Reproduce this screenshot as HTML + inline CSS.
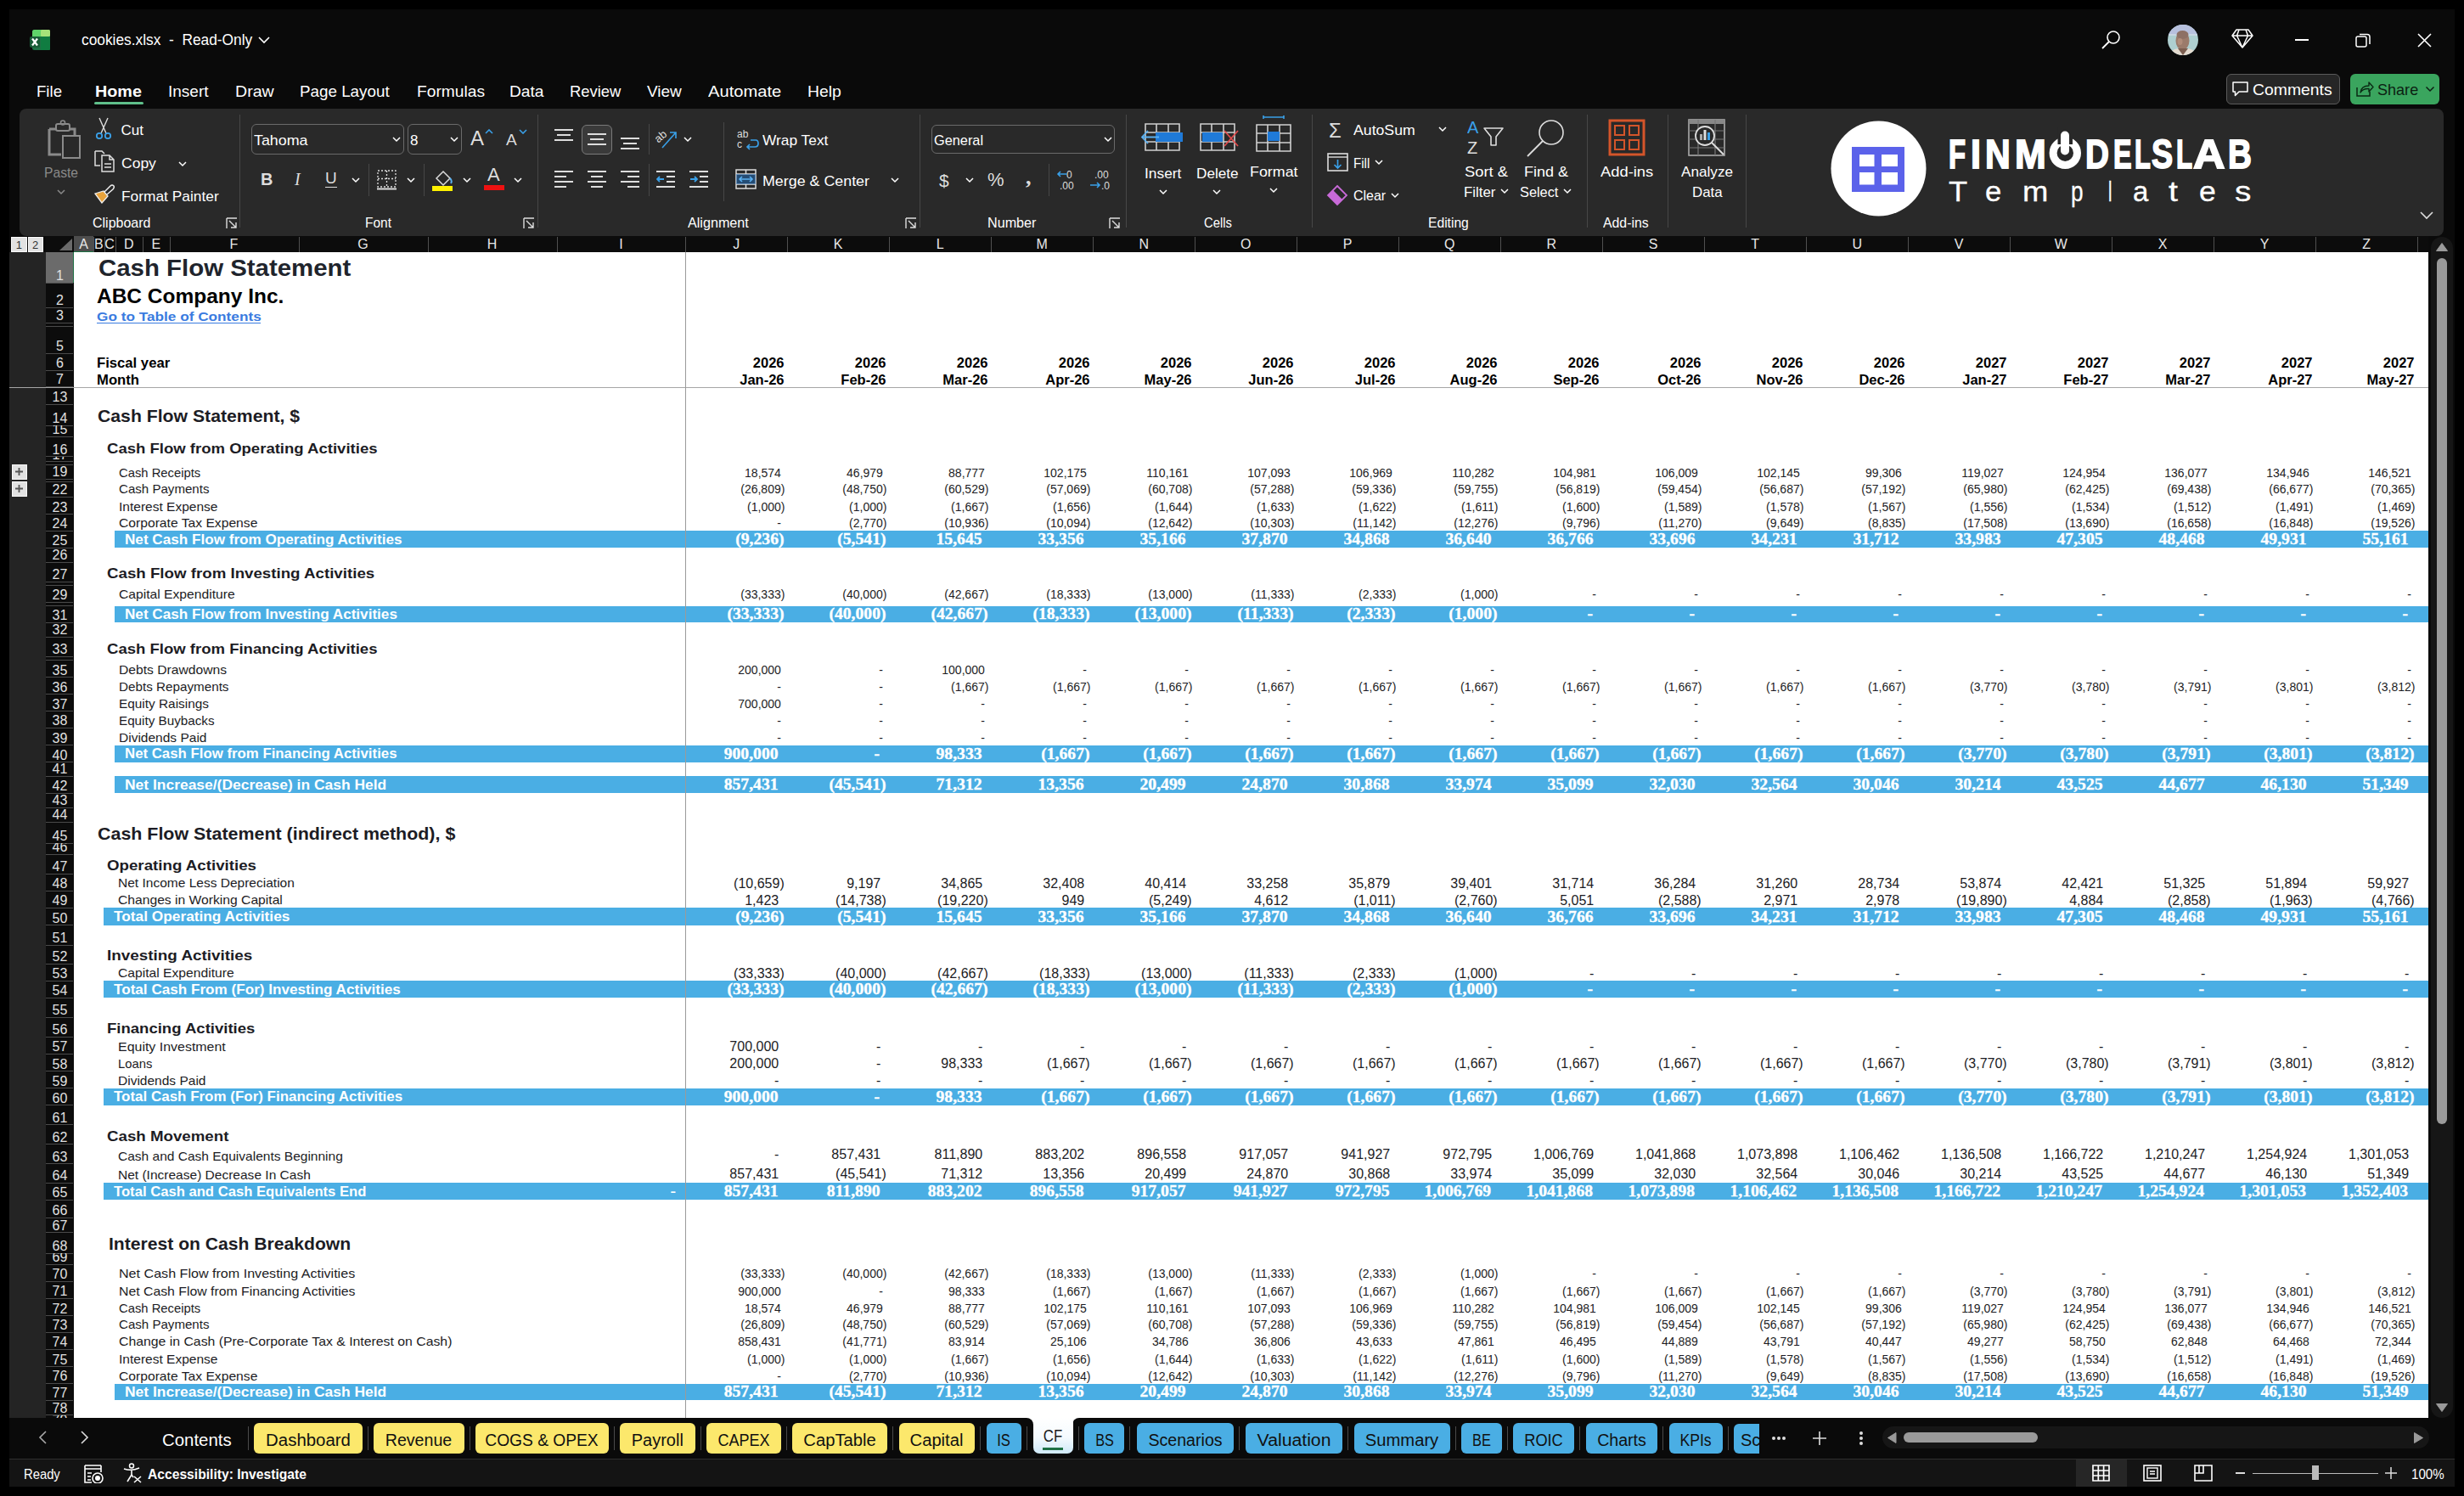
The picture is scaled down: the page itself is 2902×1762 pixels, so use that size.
<!DOCTYPE html>
<html><head><meta charset="utf-8"><title>cookies.xlsx - Excel</title>
<style>
html,body{margin:0;padding:0;}
body{width:2902px;height:1762px;background:#000;position:relative;overflow:hidden;font-family:'Liberation Sans', sans-serif;}
.t{position:absolute;white-space:nowrap;}
.b{position:absolute;}
</style></head><body>
<div class="b" style="left:11px;top:11px;width:2880px;height:1740px;background:#0a0a0a;"></div><svg class="b" style="left:35px;top:35px;" width="24" height="24" viewBox="0 0 24 24">
<rect x="3" y="0" width="21" height="24" rx="2.5" fill="#1e7145"/>
<rect x="3" y="0" width="21" height="8" rx="2.5" fill="#5fd36a"/>
<rect x="13" y="0" width="11" height="8" rx="1.5" fill="#a6e37a"/>
<rect x="3" y="4" width="10" height="4" fill="#5fd36a"/>
<rect x="13" y="8" width="11" height="16" rx="1" fill="#107c41"/>
<rect x="0" y="8" width="12" height="13" rx="2" fill="#185c37"/>
<path d="M3 10.5 L9 18.5 M9 10.5 L3 18.5" stroke="#fff" stroke-width="2.2"/>
</svg><div class="t" style="left:95.5px;top:38.5px;font-size:17.5px;line-height:17.5px;color:#ffffff;transform:scaleX(0.99);transform-origin:0 0;">cookies.xlsx&nbsp;&nbsp;-&nbsp;&nbsp;Read-Only</div><svg class="b" style="left:303px;top:41px;" width="16" height="12" viewBox="0 0 16 12"><path d="M2 3 L8 9 L14 3" stroke="#fff" stroke-width="1.6" fill="none"/></svg><svg class="b" style="left:2474px;top:35px;" width="24" height="25" viewBox="0 0 24 25"><circle cx="15" cy="9" r="7" stroke="#fff" stroke-width="1.6" fill="none"/><path d="M10 14 L2 22" stroke="#fff" stroke-width="1.8"/></svg><svg class="b" style="left:2553px;top:29px;" width="36" height="36" viewBox="0 0 36 36"><defs><clipPath id="av"><circle cx="18" cy="18" r="18"/></clipPath></defs>
<g clip-path="url(#av)"><rect width="36" height="36" fill="#aecfd0"/><rect y="0" width="36" height="12" fill="#b7c0dd"/>
<rect y="11" width="36" height="2" fill="#c9d6e2"/>
<ellipse cx="17.5" cy="19" rx="8" ry="11" fill="#9b7b6b"/><ellipse cx="17.5" cy="12" rx="7" ry="5" fill="#8d7064"/>
<ellipse cx="14.5" cy="20" rx="3" ry="4" fill="#b08c7a"/>
<path d="M2 36 Q4 29 12 28 L18 34 L24 28 Q32 29 34 36 Z" fill="#e4dbd0"/>
<path d="M12 28 L18 36 L24 28 Z" fill="#7c5e50"/></g></svg><svg class="b" style="left:2628px;top:33px;" width="26" height="25" viewBox="0 0 26 25"><path d="M6 2 L20 2 L25 9 L13 23 L1 9 Z M1 9 L25 9 M9 2 L6.5 9 L13 23 L19.5 9 L17 2" stroke="#fff" stroke-width="1.5" fill="none" stroke-linejoin="round"/></svg><div class="b" style="left:2703px;top:46px;width:16px;height:1.5px;background:#ffffff;"></div><svg class="b" style="left:2774px;top:38px;" width="19" height="19" viewBox="0 0 19 19"><rect x="1" y="5" width="12" height="12" rx="2" stroke="#fff" stroke-width="1.5" fill="none"/><path d="M5 2.5 L14 2.5 Q17 2.5 17 5.5 L17 14" stroke="#fff" stroke-width="1.5" fill="none"/></svg><svg class="b" style="left:2846px;top:38px;" width="19" height="19" viewBox="0 0 19 19"><path d="M2 2 L17 17 M17 2 L2 17" stroke="#fff" stroke-width="1.6"/></svg><div class="t" style="left:42.5px;top:98px;font-size:19px;line-height:19px;color:#ffffff;transform:scaleX(0.98);transform-origin:0 0;">File</div><div class="t" style="left:111.5px;top:98px;font-size:19px;line-height:19px;color:#ffffff;font-weight:700;transform:scaleX(1.04);transform-origin:0 0;">Home</div><div class="t" style="left:198px;top:98px;font-size:19px;line-height:19px;color:#ffffff;transform:scaleX(1);transform-origin:0 0;">Insert</div><div class="t" style="left:277px;top:98px;font-size:19px;line-height:19px;color:#ffffff;transform:scaleX(1.03);transform-origin:0 0;">Draw</div><div class="t" style="left:353px;top:98px;font-size:19px;line-height:19px;color:#ffffff;transform:scaleX(0.99);transform-origin:0 0;">Page Layout</div><div class="t" style="left:491px;top:98px;font-size:19px;line-height:19px;color:#ffffff;transform:scaleX(1.01);transform-origin:0 0;">Formulas</div><div class="t" style="left:600px;top:98px;font-size:19px;line-height:19px;color:#ffffff;transform:scaleX(1.01);transform-origin:0 0;">Data</div><div class="t" style="left:671px;top:98px;font-size:19px;line-height:19px;color:#ffffff;transform:scaleX(0.97);transform-origin:0 0;">Review</div><div class="t" style="left:762px;top:98px;font-size:19px;line-height:19px;color:#ffffff;transform:scaleX(1);transform-origin:0 0;">View</div><div class="t" style="left:834px;top:98px;font-size:19px;line-height:19px;color:#ffffff;transform:scaleX(1.06);transform-origin:0 0;">Automate</div><div class="t" style="left:951px;top:98px;font-size:19px;line-height:19px;color:#ffffff;transform:scaleX(1.02);transform-origin:0 0;">Help</div><div class="b" style="left:111px;top:120px;width:58px;height:3px;background:#5fbf8a;border-radius:2px;"></div><div class="b" style="left:2621.5px;top:87px;width:134px;height:35.5px;background:#262626;border:1px solid #5a5a5a;border-radius:6px;box-sizing:border-box;"></div><svg class="b" style="left:2628px;top:95px;" width="22" height="20" viewBox="0 0 22 20"><path d="M2 2 L19 2 L19 13 L9 13 L4.5 17.5 L4.5 13 L2 13 Z" stroke="#fff" stroke-width="1.5" fill="none" stroke-linejoin="round"/></svg><div class="t" style="left:2652.5px;top:96px;font-size:19px;line-height:19px;color:#ffffff;transform:scaleX(1.02);transform-origin:0 0;">Comments</div><div class="b" style="left:2768px;top:87px;width:105px;height:35.5px;background:#3aa55e;border-radius:6px;"></div><svg class="b" style="left:2774px;top:94px;" width="22" height="22" viewBox="0 0 22 22"><path d="M2 9 L2 19 L17 19 L17 14" stroke="#0a2a14" stroke-width="1.5" fill="none"/><path d="M6 15 Q7 7 16 7 L16 3 L21 8.5 L16 14 L16 10.5 Q9 10 6 15 Z" stroke="#0a2a14" stroke-width="1.4" fill="none" stroke-linejoin="round"/></svg><div class="t" style="left:2799.5px;top:96px;font-size:19px;line-height:19px;color:#0c1f12;transform:scaleX(0.95);transform-origin:0 0;">Share</div><svg class="b" style="left:2856px;top:101px;" width="12" height="8" viewBox="0 0 12 8"><path d="M1.5 1.5 L6 6 L10.5 1.5" stroke="#0c1f12" stroke-width="1.5" fill="none"/></svg><div class="b" style="left:22.5px;top:128px;width:2855.5px;height:149.5px;background:#292929;border-radius:8px;"></div><svg class="b" style="left:52px;top:140px;" width="46" height="48" viewBox="0 0 46 48"><path d="M6 12 L6 42 L20 42" stroke="#8a8a8a" stroke-width="3" fill="none"/>
<path d="M6 12 L14 12 M30 12 L36 12 L36 20" stroke="#8a8a8a" stroke-width="3" fill="none"/>
<rect x="14" y="6" width="16" height="8" rx="2" stroke="#8a8a8a" stroke-width="2" fill="none"/>
<circle cx="22" cy="4.5" r="2.5" stroke="#8a8a8a" stroke-width="1.6" fill="none"/>
<rect x="22" y="20" width="20" height="26" stroke="#8a8a8a" stroke-width="2" fill="none"/></svg><div class="t" style="left:52px;top:195px;font-size:17px;line-height:17px;color:#8a8a8a;transform:scaleX(0.92);transform-origin:0 0;">Paste</div><svg class="b" style="left:66px;top:222px;" width="12" height="8" viewBox="0 0 12 8"><path d="M2 2 L6 6 L10 2" stroke="#8a8a8a" stroke-width="1.5" fill="none"/></svg><svg class="b" style="left:110px;top:138px;" width="24" height="28" viewBox="0 0 24 28"><path d="M7 1 L15 19 M17 1 L9 19" stroke="#ddd" stroke-width="1.4"/><circle cx="7" cy="22" r="3.2" stroke="#3aa0e8" stroke-width="1.8" fill="none"/><circle cx="17" cy="22" r="3.2" stroke="#3aa0e8" stroke-width="1.8" fill="none"/></svg><div class="t" style="left:142.5px;top:145px;font-size:17px;line-height:17px;color:#ffffff;transform:scaleX(1);transform-origin:0 0;">Cut</div><svg class="b" style="left:110px;top:177px;" width="26" height="26" viewBox="0 0 26 26"><path d="M2 1 L10 1 L13 4 M2 1 L2 18 L8 18" stroke="#ddd" stroke-width="1.5" fill="none"/><path d="M10 6 L19 6 L24 11 L24 25 L10 25 Z M19 6 L19 11 L24 11 M13 16 L21 16 M13 20 L21 20" stroke="#ddd" stroke-width="1.5" fill="none"/></svg><div class="t" style="left:142.5px;top:184px;font-size:17px;line-height:17px;color:#ffffff;transform:scaleX(1.03);transform-origin:0 0;">Copy</div><svg class="b" style="left:209px;top:189px;" width="12" height="8" viewBox="0 0 12 8"><path d="M2 2 L6 6 L10 2" stroke="#fff" stroke-width="1.5" fill="none"/></svg><svg class="b" style="left:110px;top:216px;" width="26" height="24" viewBox="0 0 26 24"><path d="M2 12 L12 9 L17 15 L10 23 Z" fill="#e8a33c"/><path d="M2 12 L12 9 L17 15 L10 23 Z" stroke="#eee" stroke-width="1.3" fill="none"/><path d="M13 10 L20 3 Q22 1 24 3 Q25 5 23 7 L16 13" stroke="#eee" stroke-width="1.5" fill="none"/></svg><div class="t" style="left:142.5px;top:223px;font-size:17px;line-height:17px;color:#ffffff;transform:scaleX(1.02);transform-origin:0 0;">Format Painter</div><div class="t" style="left:109px;top:253.5px;font-size:17px;line-height:17px;color:#ffffff;transform:scaleX(0.94);transform-origin:0 0;">Clipboard</div><svg class="b" style="left:266px;top:256px;" width="14" height="14" viewBox="0 0 14 14"><path d="M1 1 L13 1 M1 1 L1 13 M4 4 L12 12 M12 6 L12 12 L6 12" stroke="#ddd" stroke-width="1.4" fill="none"/></svg><div class="b" style="left:282px;top:135px;width:1px;height:133px;background:#474747;"></div><div class="b" style="left:295.5px;top:146px;width:180px;height:36px;background:transparent;border:1.5px solid #6a6a6a;border-radius:6px;box-sizing:border-box;"></div><div class="t" style="left:299px;top:157px;font-size:17px;line-height:17px;color:#ffffff;transform:scaleX(1.05);transform-origin:0 0;">Tahoma</div><svg class="b" style="left:461px;top:160px;" width="12" height="8" viewBox="0 0 12 8"><path d="M2 2 L6 6 L10 2" stroke="#fff" stroke-width="1.5" fill="none"/></svg><div class="b" style="left:479.5px;top:146px;width:64.5px;height:36px;background:transparent;border:1.5px solid #6a6a6a;border-radius:6px;box-sizing:border-box;"></div><div class="t" style="left:483px;top:157px;font-size:17px;line-height:17px;color:#ffffff;">8</div><svg class="b" style="left:529px;top:160px;" width="12" height="8" viewBox="0 0 12 8"><path d="M2 2 L6 6 L10 2" stroke="#fff" stroke-width="1.5" fill="none"/></svg><div class="t" style="left:554px;top:151px;font-size:24px;line-height:24px;color:#ddd;">A</div><svg class="b" style="left:571px;top:152px;" width="10" height="6" viewBox="0 0 10 6"><path d="M1 5 L5 1 L9 5" stroke="#3aa0e8" stroke-width="1.6" fill="none"/></svg><div class="t" style="left:596px;top:155px;font-size:19px;line-height:19px;color:#ddd;">A</div><svg class="b" style="left:611px;top:152px;" width="10" height="6" viewBox="0 0 10 6"><path d="M1 1 L5 5 L9 1" stroke="#3aa0e8" stroke-width="1.6" fill="none"/></svg><div class="t" style="left:307px;top:201px;font-size:20px;line-height:20px;color:#ddd;font-weight:700;">B</div><div class="t" style="left:347px;top:201px;font-size:20px;line-height:20px;color:#ddd;font-family:'Liberation Serif', serif;"><i>I</i></div><div class="t" style="left:383px;top:200px;font-size:19px;line-height:19px;color:#ddd;">U</div><div class="b" style="left:383px;top:219.5px;width:14px;height:1.5px;background:#ddd;"></div><svg class="b" style="left:413px;top:208px;" width="12" height="8" viewBox="0 0 12 8"><path d="M2 2 L6 6 L10 2" stroke="#fff" stroke-width="1.5" fill="none"/></svg><div class="b" style="left:434px;top:193px;width:1px;height:38px;background:#474747;"></div><svg class="b" style="left:443px;top:199px;" width="25" height="25" viewBox="0 0 25 25"><path d="M2 2 L23 2 L23 21 L2 21 Z M12.5 2 L12.5 21 M2 11.5 L23 11.5" stroke="#ddd" stroke-width="1.3" stroke-dasharray="2 2" fill="none"/><path d="M1 23.5 L24 23.5" stroke="#ddd" stroke-width="2"/></svg><svg class="b" style="left:478px;top:208px;" width="12" height="8" viewBox="0 0 12 8"><path d="M2 2 L6 6 L10 2" stroke="#fff" stroke-width="1.5" fill="none"/></svg><div class="b" style="left:499px;top:193px;width:1px;height:38px;background:#474747;"></div><svg class="b" style="left:508px;top:199px;" width="26" height="27" viewBox="0 0 26 27"><path d="M6 11 L14 3 L22 11 L14 19 Z" stroke="#ddd" stroke-width="1.5" fill="none"/><path d="M22 11 Q25 14 23 17" stroke="#5ab0f0" stroke-width="2" fill="none"/><rect x="1" y="20" width="24" height="6" fill="#fff200"/></svg><svg class="b" style="left:544px;top:208px;" width="12" height="8" viewBox="0 0 12 8"><path d="M2 2 L6 6 L10 2" stroke="#fff" stroke-width="1.5" fill="none"/></svg><div class="t" style="left:574px;top:195px;font-size:22px;line-height:22px;color:#ddd;">A</div><div class="b" style="left:570px;top:218px;width:24px;height:6px;background:#ee1111;"></div><svg class="b" style="left:604px;top:208px;" width="12" height="8" viewBox="0 0 12 8"><path d="M2 2 L6 6 L10 2" stroke="#fff" stroke-width="1.5" fill="none"/></svg><div class="t" style="left:430px;top:253.5px;font-size:17px;line-height:17px;color:#ffffff;transform:scaleX(0.91);transform-origin:0 0;">Font</div><svg class="b" style="left:616px;top:256px;" width="14" height="14" viewBox="0 0 14 14"><path d="M1 1 L13 1 M1 1 L1 13 M4 4 L12 12 M12 6 L12 12 L6 12" stroke="#ddd" stroke-width="1.4" fill="none"/></svg><div class="b" style="left:633px;top:135px;width:1px;height:133px;background:#474747;"></div><svg class="b" style="left:653px;top:152px;" width="24" height="20" viewBox="0 0 24 20"><rect x="0" y="0" width="22" height="2" fill="#ddd"/><rect x="3" y="6" width="16" height="2" fill="#ddd"/><rect x="0" y="12" width="22" height="2" fill="#ddd"/></svg><div class="b" style="left:685px;top:146.5px;width:36px;height:35px;background:#3a3a3a;border:1.5px solid #7a7a7a;border-radius:6px;box-sizing:border-box;"></div><svg class="b" style="left:692px;top:157px;" width="24" height="20" viewBox="0 0 24 20"><rect x="0" y="0" width="22" height="2" fill="#ddd"/><rect x="3" y="6" width="16" height="2" fill="#ddd"/><rect x="0" y="12" width="22" height="2" fill="#ddd"/></svg><svg class="b" style="left:731px;top:162px;" width="24" height="20" viewBox="0 0 24 20"><rect x="0" y="0" width="22" height="2" fill="#ddd"/><rect x="3" y="6" width="16" height="2" fill="#ddd"/><rect x="0" y="12" width="22" height="2" fill="#ddd"/></svg><div class="b" style="left:763.5px;top:146px;width:1px;height:36px;background:#474747;"></div><svg class="b" style="left:772px;top:150px;" width="28" height="26" viewBox="0 0 28 26"><text x="0" y="14" font-size="13" fill="#ddd" font-family="Liberation Sans" transform="rotate(-40 8 12)">ab</text><path d="M8 24 L24 6 M17 6 L24 6 L24 13" stroke="#3aa0e8" stroke-width="1.6" fill="none"/></svg><svg class="b" style="left:804px;top:160px;" width="12" height="8" viewBox="0 0 12 8"><path d="M2 2 L6 6 L10 2" stroke="#fff" stroke-width="1.5" fill="none"/></svg><svg class="b" style="left:653px;top:201px;" width="24" height="26" viewBox="0 0 24 26"><rect x="0" y="0" width="22" height="2" fill="#ddd"/><rect x="0" y="6" width="14" height="2" fill="#ddd"/><rect x="0" y="12" width="22" height="2" fill="#ddd"/><rect x="0" y="18" width="14" height="2" fill="#ddd"/></svg><svg class="b" style="left:692px;top:201px;" width="24" height="26" viewBox="0 0 24 26"><rect x="0" y="0" width="22" height="2" fill="#ddd"/><rect x="4" y="6" width="14" height="2" fill="#ddd"/><rect x="0" y="12" width="22" height="2" fill="#ddd"/><rect x="4" y="18" width="14" height="2" fill="#ddd"/></svg><svg class="b" style="left:731px;top:201px;" width="24" height="26" viewBox="0 0 24 26"><rect x="0" y="0" width="22" height="2" fill="#ddd"/><rect x="8" y="6" width="14" height="2" fill="#ddd"/><rect x="0" y="12" width="22" height="2" fill="#ddd"/><rect x="8" y="18" width="14" height="2" fill="#ddd"/></svg><div class="b" style="left:763.5px;top:193px;width:1px;height:38px;background:#474747;"></div><svg class="b" style="left:773px;top:201px;" width="24" height="22" viewBox="0 0 24 22"><rect x="0" y="0" width="22" height="2" fill="#ddd"/><rect x="12" y="6" width="10" height="2" fill="#ddd"/><rect x="12" y="12" width="10" height="2" fill="#ddd"/><rect x="0" y="18" width="22" height="2" fill="#ddd"/><path d="M9 10 L1 10 M4 7 L1 10 L4 13" stroke="#3aa0e8" stroke-width="1.8" fill="none"/></svg><svg class="b" style="left:812px;top:201px;" width="24" height="22" viewBox="0 0 24 22"><rect x="0" y="0" width="22" height="2" fill="#ddd"/><rect x="12" y="6" width="10" height="2" fill="#ddd"/><rect x="12" y="12" width="10" height="2" fill="#ddd"/><rect x="0" y="18" width="22" height="2" fill="#ddd"/><path d="M1 10 L9 10 M6 7 L9 10 L6 13" stroke="#3aa0e8" stroke-width="1.8" fill="none"/></svg><div class="b" style="left:851.5px;top:144px;width:1px;height:93px;background:#474747;"></div><svg class="b" style="left:868px;top:151px;" width="26" height="26" viewBox="0 0 26 26"><text x="0" y="11" font-size="12" fill="#ddd" font-family="Liberation Sans">ab</text><text x="0" y="23" font-size="12" fill="#ddd" font-family="Liberation Sans">c</text><path d="M16 14 L22 14 Q25 14 25 18 Q25 22 21 22 L12 22 M15 19 L12 22 L15 25" stroke="#3aa0e8" stroke-width="1.7" fill="none"/></svg><div class="t" style="left:897.5px;top:156.5px;font-size:17px;line-height:17px;color:#ffffff;transform:scaleX(1.02);transform-origin:0 0;">Wrap Text</div><svg class="b" style="left:866px;top:199px;" width="26" height="24" viewBox="0 0 26 24"><rect x="1" y="1" width="23" height="22" stroke="#ddd" stroke-width="1.5" fill="none"/><path d="M1 6 L24 6 M1 18 L24 18 M12.5 1 L12.5 6 M12.5 18 L12.5 23" stroke="#ddd" stroke-width="1.5"/><rect x="1" y="6" width="23" height="12" fill="#1f6fc0" opacity="0.5"/><path d="M5 12 L20 12 M8 9 L5 12 L8 15 M17 9 L20 12 L17 15" stroke="#5ab0f0" stroke-width="1.6" fill="none"/></svg><div class="t" style="left:897.5px;top:204.5px;font-size:17px;line-height:17px;color:#ffffff;transform:scaleX(1.05);transform-origin:0 0;">Merge &amp; Center</div><svg class="b" style="left:1048px;top:208px;" width="12" height="8" viewBox="0 0 12 8"><path d="M2 2 L6 6 L10 2" stroke="#fff" stroke-width="1.5" fill="none"/></svg><div class="t" style="left:810px;top:253.5px;font-size:17px;line-height:17px;color:#ffffff;transform:scaleX(0.95);transform-origin:0 0;">Alignment</div><svg class="b" style="left:1066px;top:256px;" width="14" height="14" viewBox="0 0 14 14"><path d="M1 1 L13 1 M1 1 L1 13 M4 4 L12 12 M12 6 L12 12 L6 12" stroke="#ddd" stroke-width="1.4" fill="none"/></svg><div class="b" style="left:1083px;top:135px;width:1px;height:133px;background:#474747;"></div><div class="b" style="left:1096.5px;top:146.5px;width:216.5px;height:34.5px;background:transparent;border:1.5px solid #6a6a6a;border-radius:6px;box-sizing:border-box;"></div><div class="t" style="left:1100px;top:156.5px;font-size:17px;line-height:17px;color:#ffffff;transform:scaleX(0.96);transform-origin:0 0;">General</div><svg class="b" style="left:1299px;top:160px;" width="12" height="8" viewBox="0 0 12 8"><path d="M2 2 L6 6 L10 2" stroke="#fff" stroke-width="1.5" fill="none"/></svg><div class="t" style="left:1106px;top:202px;font-size:21px;line-height:21px;color:#ddd;">$</div><svg class="b" style="left:1136px;top:208px;" width="12" height="8" viewBox="0 0 12 8"><path d="M2 2 L6 6 L10 2" stroke="#fff" stroke-width="1.5" fill="none"/></svg><div class="t" style="left:1163px;top:201px;font-size:22px;line-height:22px;color:#ddd;">%</div><div class="t" style="left:1208px;top:196px;font-size:26px;line-height:26px;color:#ddd;font-weight:700;font-family:'Liberation Serif', serif;">,</div><div class="b" style="left:1235px;top:193px;width:1px;height:38px;background:#474747;"></div><svg class="b" style="left:1244px;top:199px;" width="26" height="25" viewBox="0 0 26 25"><text x="12" y="11" font-size="12" fill="#ddd" font-family="Liberation Sans">0</text><text x="4" y="24" font-size="12" fill="#ddd" font-family="Liberation Sans">.00</text><path d="M12 6 L2 6 M5 3 L2 6 L5 9" stroke="#3aa0e8" stroke-width="1.6" fill="none"/></svg><svg class="b" style="left:1283px;top:199px;" width="26" height="25" viewBox="0 0 26 25"><text x="6" y="11" font-size="12" fill="#ddd" font-family="Liberation Sans">.00</text><text x="14" y="24" font-size="12" fill="#ddd" font-family="Liberation Sans">.0</text><path d="M1 19 L12 19 M9 16 L12 19 L9 22" stroke="#3aa0e8" stroke-width="1.6" fill="none"/></svg><div class="t" style="left:1163px;top:253.5px;font-size:17px;line-height:17px;color:#ffffff;transform:scaleX(0.95);transform-origin:0 0;">Number</div><svg class="b" style="left:1306px;top:256px;" width="14" height="14" viewBox="0 0 14 14"><path d="M1 1 L13 1 M1 1 L1 13 M4 4 L12 12 M12 6 L12 12 L6 12" stroke="#ddd" stroke-width="1.4" fill="none"/></svg><div class="b" style="left:1325.5px;top:135px;width:1px;height:133px;background:#474747;"></div><svg class="b" style="left:1347px;top:144px;" width="44" height="35" viewBox="0 0 44 35"><path d="M2 2 L42 2 L42 33 L2 33 Z M2 12 L42 12 M2 23 L42 23 M15 2 L15 33 M29 2 L29 33" stroke="#cfcfcf" stroke-width="1.6" fill="none"/></svg><svg class="b" style="left:1343px;top:150px;" width="50" height="24" viewBox="0 0 50 24"><rect x="18" y="6" width="32" height="11" fill="#1f7ad8"/><path d="M2 11.5 L22 11.5 M9 4 L2 11.5 L9 19" stroke="#5ab0f0" stroke-width="1.8" fill="none"/></svg><div class="t" style="left:1348px;top:196px;font-size:17px;line-height:17px;color:#ffffff;transform:scaleX(1.02);transform-origin:0 0;">Insert</div><svg class="b" style="left:1364px;top:222px;" width="12" height="8" viewBox="0 0 12 8"><path d="M2 2 L6 6 L10 2" stroke="#fff" stroke-width="1.5" fill="none"/></svg><svg class="b" style="left:1412px;top:144px;" width="44" height="35" viewBox="0 0 44 35"><path d="M2 2 L42 2 L42 33 L2 33 Z M2 12 L42 12 M2 23 L42 23 M15 2 L15 33 M29 2 L29 33" stroke="#cfcfcf" stroke-width="1.6" fill="none"/></svg><svg class="b" style="left:1412px;top:150px;" width="50" height="26" viewBox="0 0 50 26"><rect x="4" y="6" width="24" height="11" fill="#1f7ad8"/><path d="M30 4 L46 22 M46 4 L30 22" stroke="#e04c4c" stroke-width="1.8"/></svg><div class="t" style="left:1409px;top:196px;font-size:17px;line-height:17px;color:#ffffff;transform:scaleX(1.01);transform-origin:0 0;">Delete</div><svg class="b" style="left:1427px;top:222px;" width="12" height="8" viewBox="0 0 12 8"><path d="M2 2 L6 6 L10 2" stroke="#fff" stroke-width="1.5" fill="none"/></svg><svg class="b" style="left:1478px;top:145px;" width="44" height="35" viewBox="0 0 44 35"><path d="M2 2 L42 2 L42 33 L2 33 Z M2 12 L42 12 M2 23 L42 23 M15 2 L15 33 M29 2 L29 33" stroke="#cfcfcf" stroke-width="1.6" fill="none"/></svg><svg class="b" style="left:1478px;top:136px;" width="44" height="32" viewBox="0 0 44 32"><path d="M10 2 L34 2 M10 0 L10 4 M34 0 L34 4" stroke="#3aa0e8" stroke-width="1.6"/><rect x="15" y="19" width="14" height="11" fill="#1f7ad8"/></svg><div class="t" style="left:1472px;top:194px;font-size:17px;line-height:17px;color:#ffffff;transform:scaleX(1.05);transform-origin:0 0;">Format</div><svg class="b" style="left:1494px;top:220px;" width="12" height="8" viewBox="0 0 12 8"><path d="M2 2 L6 6 L10 2" stroke="#fff" stroke-width="1.5" fill="none"/></svg><div class="t" style="left:1418px;top:254px;font-size:17px;line-height:17px;color:#ffffff;transform:scaleX(0.87);transform-origin:0 0;">Cells</div><div class="b" style="left:1544.5px;top:135px;width:1px;height:133px;background:#474747;"></div><div class="t" style="left:1565px;top:142px;font-size:24px;line-height:24px;color:#ddd;">&#931;</div><div class="t" style="left:1593.5px;top:145px;font-size:17px;line-height:17px;color:#ffffff;transform:scaleX(1.04);transform-origin:0 0;">AutoSum</div><svg class="b" style="left:1693px;top:148px;" width="12" height="8" viewBox="0 0 12 8"><path d="M2 2 L6 6 L10 2" stroke="#fff" stroke-width="1.5" fill="none"/></svg><svg class="b" style="left:1563px;top:180px;" width="25" height="23" viewBox="0 0 25 23"><rect x="1" y="1" width="23" height="20" stroke="#ddd" stroke-width="1.6" fill="none"/><path d="M1 5 L24 5" stroke="#ddd" stroke-width="1.4"/><path d="M12.5 8 L12.5 18 M8.5 14 L12.5 18 L16.5 14" stroke="#3aa0e8" stroke-width="1.7" fill="none"/></svg><div class="t" style="left:1594px;top:183.5px;font-size:17px;line-height:17px;color:#ffffff;transform:scaleX(0.89);transform-origin:0 0;">Fill</div><svg class="b" style="left:1618px;top:187px;" width="12" height="8" viewBox="0 0 12 8"><path d="M2 2 L6 6 L10 2" stroke="#fff" stroke-width="1.5" fill="none"/></svg><svg class="b" style="left:1562px;top:217px;" width="26" height="26" viewBox="0 0 26 26"><path d="M13 2 L24 13 L13 24 L2 13 Z" stroke="#c86ad8" stroke-width="1.8" fill="none"/><path d="M2 13 L8 7 L19 18 L13 24 Z" fill="#c86ad8"/></svg><div class="t" style="left:1594px;top:222px;font-size:17px;line-height:17px;color:#ffffff;transform:scaleX(0.94);transform-origin:0 0;">Clear</div><svg class="b" style="left:1637px;top:226px;" width="12" height="8" viewBox="0 0 12 8"><path d="M2 2 L6 6 L10 2" stroke="#fff" stroke-width="1.5" fill="none"/></svg><svg class="b" style="left:1728px;top:140px;" width="46" height="44" viewBox="0 0 46 44"><text x="0" y="17" font-size="20" fill="#3aa0e8" font-family="Liberation Sans">A</text><text x="0" y="41" font-size="20" fill="#ddd" font-family="Liberation Sans">Z</text><path d="M20 11 L42 11 L34 21 L34 31 L28 31 L28 21 Z" stroke="#ddd" stroke-width="1.6" fill="none" stroke-linejoin="round"/></svg><div class="t" style="left:1725px;top:194px;font-size:17px;line-height:17px;color:#ffffff;transform:scaleX(1.08);transform-origin:0 0;">Sort &amp;</div><div class="t" style="left:1724px;top:217.5px;font-size:17px;line-height:17px;color:#ffffff;transform:scaleX(0.99);transform-origin:0 0;">Filter</div><svg class="b" style="left:1766px;top:221px;" width="12" height="8" viewBox="0 0 12 8"><path d="M2 2 L6 6 L10 2" stroke="#fff" stroke-width="1.5" fill="none"/></svg><svg class="b" style="left:1797px;top:140px;" width="48" height="46" viewBox="0 0 48 46"><circle cx="30" cy="16" r="14" stroke="#ddd" stroke-width="1.6" fill="none"/><path d="M20 26 L2 44" stroke="#ddd" stroke-width="1.8"/></svg><div class="t" style="left:1795px;top:194px;font-size:17px;line-height:17px;color:#ffffff;transform:scaleX(1.06);transform-origin:0 0;">Find &amp;</div><div class="t" style="left:1790px;top:217.5px;font-size:17px;line-height:17px;color:#ffffff;transform:scaleX(0.96);transform-origin:0 0;">Select</div><svg class="b" style="left:1840px;top:221px;" width="12" height="8" viewBox="0 0 12 8"><path d="M2 2 L6 6 L10 2" stroke="#fff" stroke-width="1.5" fill="none"/></svg><div class="t" style="left:1682px;top:254px;font-size:17px;line-height:17px;color:#ffffff;transform:scaleX(0.92);transform-origin:0 0;">Editing</div><div class="b" style="left:1868.5px;top:135px;width:1px;height:133px;background:#474747;"></div><svg class="b" style="left:1894px;top:140px;" width="44" height="44" viewBox="0 0 44 44"><rect x="2" y="2" width="40" height="40" stroke="#d4552a" stroke-width="3" fill="none"/><rect x="8" y="8" width="11" height="11" stroke="#d4552a" stroke-width="2" fill="none"/><rect x="25" y="8" width="11" height="11" stroke="#d4552a" stroke-width="2" fill="none"/><rect x="8" y="25" width="11" height="11" stroke="#d4552a" stroke-width="2" fill="none"/><rect x="25" y="25" width="11" height="11" stroke="#d4552a" stroke-width="2" fill="none"/></svg><div class="t" style="left:1885px;top:194px;font-size:17px;line-height:17px;color:#ffffff;transform:scaleX(1.08);transform-origin:0 0;">Add-ins</div><div class="t" style="left:1888px;top:254px;font-size:17px;line-height:17px;color:#ffffff;transform:scaleX(0.93);transform-origin:0 0;">Add-ins</div><div class="b" style="left:1963.5px;top:135px;width:1px;height:133px;background:#474747;"></div><svg class="b" style="left:1988px;top:140px;" width="44" height="44" viewBox="0 0 44 44"><rect x="1" y="1" width="42" height="42" stroke="#aaa" stroke-width="1.6" fill="none"/><rect x="1" y="1" width="42" height="5" fill="#888"/><path d="M1 14 L43 14 M1 24 L43 24 M1 34 L43 34 M12 1 L12 43 M32 1 L32 43" stroke="#777" stroke-width="1.2"/><circle cx="20" cy="20" r="11" stroke="#ddd" stroke-width="1.8" fill="#292929"/><rect x="14" y="18" width="3" height="7" fill="#aaa"/><rect x="18.5" y="13" width="3" height="12" fill="#ddd"/><rect x="23" y="16" width="3" height="9" fill="#3aa0e8"/><path d="M28 28 L42 42" stroke="#ddd" stroke-width="2"/></svg><div class="t" style="left:1980px;top:194px;font-size:17px;line-height:17px;color:#ffffff;transform:scaleX(1.01);transform-origin:0 0;">Analyze</div><div class="t" style="left:1993px;top:217.5px;font-size:17px;line-height:17px;color:#ffffff;transform:scaleX(0.99);transform-origin:0 0;">Data</div><div class="b" style="left:2056px;top:135px;width:1px;height:133px;background:#474747;"></div><svg class="b" style="left:2156px;top:142px;" width="113" height="113" viewBox="0 0 113 113"><circle cx="56.5" cy="56.5" r="56" fill="#fff"/><rect x="25" y="31" width="62" height="53" fill="#5b62ea"/><rect x="34" y="40" width="17.5" height="14" fill="#fff"/><rect x="60" y="40" width="19" height="14" fill="#fff"/><rect x="34" y="61" width="17.5" height="14.5" fill="#fff"/><rect x="60" y="61" width="19" height="14.5" fill="#fff"/></svg><div class="t" style="left:2295px;top:156.8px;font-size:49px;line-height:49px;color:#ffffff;font-weight:700;transform:scaleX(0.67);transform-origin:0 0;-webkit-text-stroke:1.8px #ffffff;">F</div><div class="t" style="left:2320.5px;top:156.8px;font-size:49px;line-height:49px;color:#ffffff;font-weight:700;transform:scaleX(0.88);transform-origin:0 0;-webkit-text-stroke:1.8px #ffffff;">I</div><div class="t" style="left:2338.2px;top:156.8px;font-size:49px;line-height:49px;color:#ffffff;font-weight:700;transform:scaleX(0.84);transform-origin:0 0;-webkit-text-stroke:1.8px #ffffff;">N</div><div class="t" style="left:2372.9px;top:156.8px;font-size:49px;line-height:49px;color:#ffffff;font-weight:700;transform:scaleX(0.9);transform-origin:0 0;-webkit-text-stroke:1.8px #ffffff;">M</div><div class="t" style="left:2456.2px;top:156.8px;font-size:49px;line-height:49px;color:#ffffff;font-weight:700;transform:scaleX(0.79);transform-origin:0 0;-webkit-text-stroke:1.8px #ffffff;">D</div><div class="t" style="left:2488.6px;top:156.8px;font-size:49px;line-height:49px;color:#ffffff;font-weight:700;transform:scaleX(0.66);transform-origin:0 0;-webkit-text-stroke:1.8px #ffffff;">E</div><div class="t" style="left:2513.5px;top:156.8px;font-size:49px;line-height:49px;color:#ffffff;font-weight:700;transform:scaleX(0.63);transform-origin:0 0;-webkit-text-stroke:1.8px #ffffff;">L</div><div class="t" style="left:2534px;top:156.8px;font-size:49px;line-height:49px;color:#ffffff;font-weight:700;transform:scaleX(0.77);transform-origin:0 0;-webkit-text-stroke:1.8px #ffffff;">S</div><div class="t" style="left:2562.6px;top:156.8px;font-size:49px;line-height:49px;color:#ffffff;font-weight:700;transform:scaleX(0.64);transform-origin:0 0;-webkit-text-stroke:1.8px #ffffff;">L</div><div class="t" style="left:2583.4px;top:156.8px;font-size:49px;line-height:49px;color:#ffffff;font-weight:700;transform:scaleX(1.06);transform-origin:0 0;-webkit-text-stroke:1.8px #ffffff;">A</div><div class="t" style="left:2623.5px;top:156.8px;font-size:49px;line-height:49px;color:#ffffff;font-weight:700;transform:scaleX(0.79);transform-origin:0 0;-webkit-text-stroke:1.8px #ffffff;">B</div><svg class="b" style="left:2408px;top:150px;" width="50" height="52" viewBox="0 0 50 52"><circle cx="24.3" cy="30.2" r="14.2" stroke="#fff" stroke-width="9" fill="none"/><rect x="15.5" y="0" width="17.5" height="20" fill="#292929"/><rect x="19" y="4.6" width="10" height="27.8" rx="5" fill="#fff"/></svg><div class="t" style="left:2295px;top:208.1px;font-size:34px;line-height:34px;color:#ffffff;transform:scaleX(1.07);transform-origin:0 0;-webkit-text-stroke:0.3px #ffffff;">T</div><div class="t" style="left:2338.2px;top:208.1px;font-size:34px;line-height:34px;color:#ffffff;transform:scaleX(1.02);transform-origin:0 0;-webkit-text-stroke:0.3px #ffffff;">e</div><div class="t" style="left:2382.2px;top:208.1px;font-size:34px;line-height:34px;color:#ffffff;transform:scaleX(1.07);transform-origin:0 0;-webkit-text-stroke:0.3px #ffffff;">m</div><div class="t" style="left:2438.5px;top:208.1px;font-size:34px;line-height:34px;color:#ffffff;transform:scaleX(0.77);transform-origin:0 0;-webkit-text-stroke:0.3px #ffffff;">p</div><div class="t" style="left:2483.2px;top:208.1px;font-size:34px;line-height:34px;color:#ffffff;transform:scaleX(0.58);transform-origin:0 0;-webkit-text-stroke:0.3px #ffffff;">l</div><div class="t" style="left:2511.7px;top:208.1px;font-size:34px;line-height:34px;color:#ffffff;transform:scaleX(0.97);transform-origin:0 0;-webkit-text-stroke:0.3px #ffffff;">a</div><div class="t" style="left:2554.1px;top:208.1px;font-size:34px;line-height:34px;color:#ffffff;transform:scaleX(1.16);transform-origin:0 0;-webkit-text-stroke:0.3px #ffffff;">t</div><div class="t" style="left:2589.6px;top:208.1px;font-size:34px;line-height:34px;color:#ffffff;transform:scaleX(1.05);transform-origin:0 0;-webkit-text-stroke:0.3px #ffffff;">e</div><div class="t" style="left:2632px;top:208.1px;font-size:34px;line-height:34px;color:#ffffff;transform:scaleX(1.14);transform-origin:0 0;-webkit-text-stroke:0.3px #ffffff;">s</div><svg class="b" style="left:2849px;top:248px;" width="18" height="12" viewBox="0 0 18 12"><path d="M2 2 L9 9 L16 2" stroke="#ddd" stroke-width="1.6" fill="none"/></svg><div class="b" style="left:54px;top:278px;width:2806px;height:19px;background:#0c0c0c;"></div><div class="b" style="left:87px;top:278px;width:23px;height:19px;background:#4d4d4d;"></div><div class="b" style="left:87px;top:295.5px;width:23px;height:2.5px;background:#1e7145;"></div><div class="t" style="left:98.5px;width:0;display:flex;justify-content:center;top:279.5px;font-size:16px;line-height:16px;color:#e8e8e8;">A</div><div class="b" style="left:110px;top:279px;width:1px;height:18px;background:#505050;"></div><div class="t" style="left:116.25px;width:0;display:flex;justify-content:center;top:279.5px;font-size:16px;line-height:16px;color:#e8e8e8;">B</div><div class="b" style="left:122.5px;top:279px;width:1px;height:18px;background:#505050;"></div><div class="t" style="left:129px;width:0;display:flex;justify-content:center;top:279.5px;font-size:16px;line-height:16px;color:#e8e8e8;">C</div><div class="b" style="left:135.5px;top:279px;width:1px;height:18px;background:#505050;"></div><div class="t" style="left:151.75px;width:0;display:flex;justify-content:center;top:279.5px;font-size:16px;line-height:16px;color:#e8e8e8;">D</div><div class="b" style="left:168px;top:279px;width:1px;height:18px;background:#505050;"></div><div class="t" style="left:183.75px;width:0;display:flex;justify-content:center;top:279.5px;font-size:16px;line-height:16px;color:#e8e8e8;">E</div><div class="b" style="left:199.5px;top:279px;width:1px;height:18px;background:#505050;"></div><div class="t" style="left:275.5px;width:0;display:flex;justify-content:center;top:279.5px;font-size:16px;line-height:16px;color:#e8e8e8;">F</div><div class="b" style="left:351.5px;top:279px;width:1px;height:18px;background:#505050;"></div><div class="t" style="left:427.5px;width:0;display:flex;justify-content:center;top:279.5px;font-size:16px;line-height:16px;color:#e8e8e8;">G</div><div class="b" style="left:503.5px;top:279px;width:1px;height:18px;background:#505050;"></div><div class="t" style="left:579.5px;width:0;display:flex;justify-content:center;top:279.5px;font-size:16px;line-height:16px;color:#e8e8e8;">H</div><div class="b" style="left:655.5px;top:279px;width:1px;height:18px;background:#505050;"></div><div class="t" style="left:731.35px;width:0;display:flex;justify-content:center;top:279.5px;font-size:16px;line-height:16px;color:#e8e8e8;">I</div><div class="b" style="left:807.2px;top:279px;width:1px;height:18px;background:#505050;"></div><div class="t" style="left:867.2px;width:0;display:flex;justify-content:center;top:279.5px;font-size:16px;line-height:16px;color:#e8e8e8;">J</div><div class="b" style="left:927.2px;top:279px;width:1px;height:18px;background:#505050;"></div><div class="t" style="left:987.2px;width:0;display:flex;justify-content:center;top:279.5px;font-size:16px;line-height:16px;color:#e8e8e8;">K</div><div class="b" style="left:1047.2px;top:279px;width:1px;height:18px;background:#505050;"></div><div class="t" style="left:1107.2px;width:0;display:flex;justify-content:center;top:279.5px;font-size:16px;line-height:16px;color:#e8e8e8;">L</div><div class="b" style="left:1167.2px;top:279px;width:1px;height:18px;background:#505050;"></div><div class="t" style="left:1227.2px;width:0;display:flex;justify-content:center;top:279.5px;font-size:16px;line-height:16px;color:#e8e8e8;">M</div><div class="b" style="left:1287.2px;top:279px;width:1px;height:18px;background:#505050;"></div><div class="t" style="left:1347.2px;width:0;display:flex;justify-content:center;top:279.5px;font-size:16px;line-height:16px;color:#e8e8e8;">N</div><div class="b" style="left:1407.2px;top:279px;width:1px;height:18px;background:#505050;"></div><div class="t" style="left:1467.2px;width:0;display:flex;justify-content:center;top:279.5px;font-size:16px;line-height:16px;color:#e8e8e8;">O</div><div class="b" style="left:1527.2px;top:279px;width:1px;height:18px;background:#505050;"></div><div class="t" style="left:1587.2px;width:0;display:flex;justify-content:center;top:279.5px;font-size:16px;line-height:16px;color:#e8e8e8;">P</div><div class="b" style="left:1647.2px;top:279px;width:1px;height:18px;background:#505050;"></div><div class="t" style="left:1707.2px;width:0;display:flex;justify-content:center;top:279.5px;font-size:16px;line-height:16px;color:#e8e8e8;">Q</div><div class="b" style="left:1767.2px;top:279px;width:1px;height:18px;background:#505050;"></div><div class="t" style="left:1827.2px;width:0;display:flex;justify-content:center;top:279.5px;font-size:16px;line-height:16px;color:#e8e8e8;">R</div><div class="b" style="left:1887.2px;top:279px;width:1px;height:18px;background:#505050;"></div><div class="t" style="left:1947.2px;width:0;display:flex;justify-content:center;top:279.5px;font-size:16px;line-height:16px;color:#e8e8e8;">S</div><div class="b" style="left:2007.2px;top:279px;width:1px;height:18px;background:#505050;"></div><div class="t" style="left:2067.2px;width:0;display:flex;justify-content:center;top:279.5px;font-size:16px;line-height:16px;color:#e8e8e8;">T</div><div class="b" style="left:2127.2px;top:279px;width:1px;height:18px;background:#505050;"></div><div class="t" style="left:2187.2px;width:0;display:flex;justify-content:center;top:279.5px;font-size:16px;line-height:16px;color:#e8e8e8;">U</div><div class="b" style="left:2247.2px;top:279px;width:1px;height:18px;background:#505050;"></div><div class="t" style="left:2307.2px;width:0;display:flex;justify-content:center;top:279.5px;font-size:16px;line-height:16px;color:#e8e8e8;">V</div><div class="b" style="left:2367.2px;top:279px;width:1px;height:18px;background:#505050;"></div><div class="t" style="left:2427.2px;width:0;display:flex;justify-content:center;top:279.5px;font-size:16px;line-height:16px;color:#e8e8e8;">W</div><div class="b" style="left:2487.2px;top:279px;width:1px;height:18px;background:#505050;"></div><div class="t" style="left:2547.2px;width:0;display:flex;justify-content:center;top:279.5px;font-size:16px;line-height:16px;color:#e8e8e8;">X</div><div class="b" style="left:2607.2px;top:279px;width:1px;height:18px;background:#505050;"></div><div class="t" style="left:2667.2px;width:0;display:flex;justify-content:center;top:279.5px;font-size:16px;line-height:16px;color:#e8e8e8;">Y</div><div class="b" style="left:2727.2px;top:279px;width:1px;height:18px;background:#505050;"></div><div class="t" style="left:2787.2px;width:0;display:flex;justify-content:center;top:279.5px;font-size:16px;line-height:16px;color:#e8e8e8;">Z</div><div class="b" style="left:2847px;top:279px;width:1px;height:18px;background:#505050;"></div><svg class="b" style="left:70px;top:281px;" width="16" height="15" viewBox="0 0 16 15"><path d="M15 0 L15 14 L0 14 Z" fill="#6a6a6a"/></svg><div class="b" style="left:13px;top:278.5px;width:18.5px;height:18px;background:#e2e2e2;border:1px solid #fafafa;box-sizing:border-box;"></div><div class="b" style="left:32.5px;top:278.5px;width:18px;height:18px;background:#e2e2e2;border:1px solid #fafafa;box-sizing:border-box;"></div><div class="t" style="left:22.25px;width:0;display:flex;justify-content:center;top:281.5px;font-size:13px;line-height:13px;color:#333;">1</div><div class="t" style="left:41.5px;width:0;display:flex;justify-content:center;top:281.5px;font-size:13px;line-height:13px;color:#333;">2</div><div class="b" style="left:11px;top:297px;width:43px;height:1373px;background:#242424;"></div><div class="b" style="left:54px;top:297px;width:33px;height:1373px;background:#0c0c0c;"></div><div class="b" style="left:54px;top:297px;width:32px;height:36px;background:#6b6b6b;"></div><div class="b" style="left:86px;top:297px;width:2px;height:36px;background:#1e7145;"></div><div class="b" style="left:54px;top:332.5px;width:32px;height:1px;background:#4a4a4a;"></div><div class="b" style="left:54px;top:297px;width:33px;height:36px;overflow:hidden;"><div class="t" style="left:0;width:33px;text-align:center;top:20px;font-size:16px;line-height:16px;color:#e0e0e0;">1</div></div><div class="b" style="left:54px;top:361.5px;width:32px;height:1px;background:#4a4a4a;"></div><div class="b" style="left:54px;top:333px;width:33px;height:29px;overflow:hidden;"><div class="t" style="left:0;width:33px;text-align:center;top:13px;font-size:16px;line-height:16px;color:#e0e0e0;">2</div></div><div class="b" style="left:54px;top:379.5px;width:32px;height:1px;background:#4a4a4a;"></div><div class="b" style="left:54px;top:362px;width:33px;height:18px;overflow:hidden;"><div class="t" style="left:0;width:33px;text-align:center;top:2px;font-size:16px;line-height:16px;color:#e0e0e0;">3</div></div><div class="b" style="left:54px;top:383.5px;width:32px;height:1px;background:#4a4a4a;"></div><div class="b" style="left:54px;top:415.5px;width:32px;height:1px;background:#4a4a4a;"></div><div class="b" style="left:54px;top:384px;width:33px;height:32px;overflow:hidden;"><div class="t" style="left:0;width:33px;text-align:center;top:16px;font-size:16px;line-height:16px;color:#e0e0e0;">5</div></div><div class="b" style="left:54px;top:435.5px;width:32px;height:1px;background:#4a4a4a;"></div><div class="b" style="left:54px;top:416px;width:33px;height:20px;overflow:hidden;"><div class="t" style="left:0;width:33px;text-align:center;top:4px;font-size:16px;line-height:16px;color:#e0e0e0;">6</div></div><div class="b" style="left:54px;top:454.5px;width:32px;height:1px;background:#4a4a4a;"></div><div class="b" style="left:54px;top:436px;width:33px;height:19px;overflow:hidden;"><div class="t" style="left:0;width:33px;text-align:center;top:3px;font-size:16px;line-height:16px;color:#e0e0e0;">7</div></div><div class="b" style="left:54px;top:475.5px;width:32px;height:1px;background:#4a4a4a;"></div><div class="b" style="left:54px;top:458px;width:33px;height:18px;overflow:hidden;"><div class="t" style="left:0;width:33px;text-align:center;top:2px;font-size:16px;line-height:16px;color:#e0e0e0;">13</div></div><div class="b" style="left:54px;top:500.5px;width:32px;height:1px;background:#4a4a4a;"></div><div class="b" style="left:54px;top:476px;width:33px;height:25px;overflow:hidden;"><div class="t" style="left:0;width:33px;text-align:center;top:9px;font-size:16px;line-height:16px;color:#e0e0e0;">14</div></div><div class="b" style="left:54px;top:513.5px;width:32px;height:1px;background:#4a4a4a;"></div><div class="b" style="left:54px;top:501px;width:33px;height:13px;overflow:hidden;"><div class="t" style="left:0;width:33px;text-align:center;top:-3px;font-size:16px;line-height:16px;color:#e0e0e0;">15</div></div><div class="b" style="left:54px;top:537.1px;width:32px;height:1px;background:#4a4a4a;"></div><div class="b" style="left:54px;top:514px;width:33px;height:23.6px;overflow:hidden;"><div class="t" style="left:0;width:33px;text-align:center;top:7.6px;font-size:16px;line-height:16px;color:#e0e0e0;">16</div></div><div class="b" style="left:54px;top:543.1px;width:32px;height:1px;background:#4a4a4a;"></div><div class="b" style="left:54px;top:537.6px;width:33px;height:6px;overflow:hidden;"><div class="t" style="left:0;width:33px;text-align:center;top:-10px;font-size:16px;line-height:16px;color:#e0e0e0;">17</div></div><div class="b" style="left:54px;top:563.5px;width:32px;height:1px;background:#4a4a4a;"></div><div class="b" style="left:54px;top:547px;width:33px;height:17px;overflow:hidden;"><div class="t" style="left:0;width:33px;text-align:center;top:1px;font-size:16px;line-height:16px;color:#e0e0e0;">19</div></div><div class="b" style="left:54px;top:584.5px;width:32px;height:1px;background:#4a4a4a;"></div><div class="b" style="left:54px;top:567px;width:33px;height:18px;overflow:hidden;"><div class="t" style="left:0;width:33px;text-align:center;top:2px;font-size:16px;line-height:16px;color:#e0e0e0;">22</div></div><div class="b" style="left:54px;top:605px;width:32px;height:1px;background:#4a4a4a;"></div><div class="b" style="left:54px;top:585.5px;width:33px;height:20px;overflow:hidden;"><div class="t" style="left:0;width:33px;text-align:center;top:4px;font-size:16px;line-height:16px;color:#e0e0e0;">23</div></div><div class="b" style="left:54px;top:624.8px;width:32px;height:1px;background:#4a4a4a;"></div><div class="b" style="left:54px;top:605.5px;width:33px;height:19.8px;overflow:hidden;"><div class="t" style="left:0;width:33px;text-align:center;top:3.8px;font-size:16px;line-height:16px;color:#e0e0e0;">24</div></div><div class="b" style="left:54px;top:644.9px;width:32px;height:1px;background:#4a4a4a;"></div><div class="b" style="left:54px;top:625.3px;width:33px;height:20.1px;overflow:hidden;"><div class="t" style="left:0;width:33px;text-align:center;top:4.1px;font-size:16px;line-height:16px;color:#e0e0e0;">25</div></div><div class="b" style="left:54px;top:662px;width:32px;height:1px;background:#4a4a4a;"></div><div class="b" style="left:54px;top:645.4px;width:33px;height:17.1px;overflow:hidden;"><div class="t" style="left:0;width:33px;text-align:center;top:1.1px;font-size:16px;line-height:16px;color:#e0e0e0;">26</div></div><div class="b" style="left:54px;top:684.7px;width:32px;height:1px;background:#4a4a4a;"></div><div class="b" style="left:54px;top:662.5px;width:33px;height:22.7px;overflow:hidden;"><div class="t" style="left:0;width:33px;text-align:center;top:6.7px;font-size:16px;line-height:16px;color:#e0e0e0;">27</div></div><div class="b" style="left:54px;top:708.8px;width:32px;height:1px;background:#4a4a4a;"></div><div class="b" style="left:54px;top:689px;width:33px;height:20.3px;overflow:hidden;"><div class="t" style="left:0;width:33px;text-align:center;top:4.3px;font-size:16px;line-height:16px;color:#e0e0e0;">29</div></div><div class="b" style="left:54px;top:732.9px;width:32px;height:1px;background:#4a4a4a;"></div><div class="b" style="left:54px;top:713.6px;width:33px;height:19.8px;overflow:hidden;"><div class="t" style="left:0;width:33px;text-align:center;top:3.8px;font-size:16px;line-height:16px;color:#e0e0e0;">31</div></div><div class="b" style="left:54px;top:749.8px;width:32px;height:1px;background:#4a4a4a;"></div><div class="b" style="left:54px;top:733.4px;width:33px;height:16.9px;overflow:hidden;"><div class="t" style="left:0;width:33px;text-align:center;top:0.9px;font-size:16px;line-height:16px;color:#e0e0e0;">32</div></div><div class="b" style="left:54px;top:773px;width:32px;height:1px;background:#4a4a4a;"></div><div class="b" style="left:54px;top:750.3px;width:33px;height:23.2px;overflow:hidden;"><div class="t" style="left:0;width:33px;text-align:center;top:7.2px;font-size:16px;line-height:16px;color:#e0e0e0;">33</div></div><div class="b" style="left:54px;top:797px;width:32px;height:1px;background:#4a4a4a;"></div><div class="b" style="left:54px;top:777.5px;width:33px;height:20px;overflow:hidden;"><div class="t" style="left:0;width:33px;text-align:center;top:4px;font-size:16px;line-height:16px;color:#e0e0e0;">35</div></div><div class="b" style="left:54px;top:817.3px;width:32px;height:1px;background:#4a4a4a;"></div><div class="b" style="left:54px;top:797.5px;width:33px;height:20.3px;overflow:hidden;"><div class="t" style="left:0;width:33px;text-align:center;top:4.3px;font-size:16px;line-height:16px;color:#e0e0e0;">36</div></div><div class="b" style="left:54px;top:837.3px;width:32px;height:1px;background:#4a4a4a;"></div><div class="b" style="left:54px;top:817.8px;width:33px;height:20px;overflow:hidden;"><div class="t" style="left:0;width:33px;text-align:center;top:4px;font-size:16px;line-height:16px;color:#e0e0e0;">37</div></div><div class="b" style="left:54px;top:857px;width:32px;height:1px;background:#4a4a4a;"></div><div class="b" style="left:54px;top:837.8px;width:33px;height:19.7px;overflow:hidden;"><div class="t" style="left:0;width:33px;text-align:center;top:3.7px;font-size:16px;line-height:16px;color:#e0e0e0;">38</div></div><div class="b" style="left:54px;top:877px;width:32px;height:1px;background:#4a4a4a;"></div><div class="b" style="left:54px;top:857.5px;width:33px;height:20px;overflow:hidden;"><div class="t" style="left:0;width:33px;text-align:center;top:4px;font-size:16px;line-height:16px;color:#e0e0e0;">39</div></div><div class="b" style="left:54px;top:897.1px;width:32px;height:1px;background:#4a4a4a;"></div><div class="b" style="left:54px;top:877.5px;width:33px;height:20.1px;overflow:hidden;"><div class="t" style="left:0;width:33px;text-align:center;top:4.1px;font-size:16px;line-height:16px;color:#e0e0e0;">40</div></div><div class="b" style="left:54px;top:913.8px;width:32px;height:1px;background:#4a4a4a;"></div><div class="b" style="left:54px;top:897.6px;width:33px;height:16.7px;overflow:hidden;"><div class="t" style="left:0;width:33px;text-align:center;top:0.7px;font-size:16px;line-height:16px;color:#e0e0e0;">41</div></div><div class="b" style="left:54px;top:933.8px;width:32px;height:1px;background:#4a4a4a;"></div><div class="b" style="left:54px;top:914.3px;width:33px;height:20px;overflow:hidden;"><div class="t" style="left:0;width:33px;text-align:center;top:4px;font-size:16px;line-height:16px;color:#e0e0e0;">42</div></div><div class="b" style="left:54px;top:950.5px;width:32px;height:1px;background:#4a4a4a;"></div><div class="b" style="left:54px;top:934.3px;width:33px;height:16.7px;overflow:hidden;"><div class="t" style="left:0;width:33px;text-align:center;top:0.7px;font-size:16px;line-height:16px;color:#e0e0e0;">43</div></div><div class="b" style="left:54px;top:967.9px;width:32px;height:1px;background:#4a4a4a;"></div><div class="b" style="left:54px;top:951px;width:33px;height:17.4px;overflow:hidden;"><div class="t" style="left:0;width:33px;text-align:center;top:1.4px;font-size:16px;line-height:16px;color:#e0e0e0;">44</div></div><div class="b" style="left:54px;top:992.7px;width:32px;height:1px;background:#4a4a4a;"></div><div class="b" style="left:54px;top:968.4px;width:33px;height:24.8px;overflow:hidden;"><div class="t" style="left:0;width:33px;text-align:center;top:8.8px;font-size:16px;line-height:16px;color:#e0e0e0;">45</div></div><div class="b" style="left:54px;top:1005.5px;width:32px;height:1px;background:#4a4a4a;"></div><div class="b" style="left:54px;top:993.2px;width:33px;height:12.8px;overflow:hidden;"><div class="t" style="left:0;width:33px;text-align:center;top:-3.2px;font-size:16px;line-height:16px;color:#e0e0e0;">46</div></div><div class="b" style="left:54px;top:1028.9px;width:32px;height:1px;background:#4a4a4a;"></div><div class="b" style="left:54px;top:1006px;width:33px;height:23.4px;overflow:hidden;"><div class="t" style="left:0;width:33px;text-align:center;top:7.4px;font-size:16px;line-height:16px;color:#e0e0e0;">47</div></div><div class="b" style="left:54px;top:1048.7px;width:32px;height:1px;background:#4a4a4a;"></div><div class="b" style="left:54px;top:1029.4px;width:33px;height:19.8px;overflow:hidden;"><div class="t" style="left:0;width:33px;text-align:center;top:3.8px;font-size:16px;line-height:16px;color:#e0e0e0;">48</div></div><div class="b" style="left:54px;top:1068.8px;width:32px;height:1px;background:#4a4a4a;"></div><div class="b" style="left:54px;top:1049.2px;width:33px;height:20.1px;overflow:hidden;"><div class="t" style="left:0;width:33px;text-align:center;top:4.1px;font-size:16px;line-height:16px;color:#e0e0e0;">49</div></div><div class="b" style="left:54px;top:1089.1px;width:32px;height:1px;background:#4a4a4a;"></div><div class="b" style="left:54px;top:1069.3px;width:33px;height:20.3px;overflow:hidden;"><div class="t" style="left:0;width:33px;text-align:center;top:4.3px;font-size:16px;line-height:16px;color:#e0e0e0;">50</div></div><div class="b" style="left:54px;top:1112.5px;width:32px;height:1px;background:#4a4a4a;"></div><div class="b" style="left:54px;top:1089.6px;width:33px;height:23.4px;overflow:hidden;"><div class="t" style="left:0;width:33px;text-align:center;top:7.4px;font-size:16px;line-height:16px;color:#e0e0e0;">51</div></div><div class="b" style="left:54px;top:1134.8px;width:32px;height:1px;background:#4a4a4a;"></div><div class="b" style="left:54px;top:1113px;width:33px;height:22.3px;overflow:hidden;"><div class="t" style="left:0;width:33px;text-align:center;top:6.3px;font-size:16px;line-height:16px;color:#e0e0e0;">52</div></div><div class="b" style="left:54px;top:1154.8px;width:32px;height:1px;background:#4a4a4a;"></div><div class="b" style="left:54px;top:1135.3px;width:33px;height:20px;overflow:hidden;"><div class="t" style="left:0;width:33px;text-align:center;top:4px;font-size:16px;line-height:16px;color:#e0e0e0;">53</div></div><div class="b" style="left:54px;top:1174.9px;width:32px;height:1px;background:#4a4a4a;"></div><div class="b" style="left:54px;top:1155.3px;width:33px;height:20.1px;overflow:hidden;"><div class="t" style="left:0;width:33px;text-align:center;top:4.1px;font-size:16px;line-height:16px;color:#e0e0e0;">54</div></div><div class="b" style="left:54px;top:1198px;width:32px;height:1px;background:#4a4a4a;"></div><div class="b" style="left:54px;top:1175.4px;width:33px;height:23.1px;overflow:hidden;"><div class="t" style="left:0;width:33px;text-align:center;top:7.1px;font-size:16px;line-height:16px;color:#e0e0e0;">55</div></div><div class="b" style="left:54px;top:1220.9px;width:32px;height:1px;background:#4a4a4a;"></div><div class="b" style="left:54px;top:1198.5px;width:33px;height:22.9px;overflow:hidden;"><div class="t" style="left:0;width:33px;text-align:center;top:6.9px;font-size:16px;line-height:16px;color:#e0e0e0;">56</div></div><div class="b" style="left:54px;top:1241px;width:32px;height:1px;background:#4a4a4a;"></div><div class="b" style="left:54px;top:1221.4px;width:33px;height:20.1px;overflow:hidden;"><div class="t" style="left:0;width:33px;text-align:center;top:4.1px;font-size:16px;line-height:16px;color:#e0e0e0;">57</div></div><div class="b" style="left:54px;top:1261px;width:32px;height:1px;background:#4a4a4a;"></div><div class="b" style="left:54px;top:1241.5px;width:33px;height:20px;overflow:hidden;"><div class="t" style="left:0;width:33px;text-align:center;top:4px;font-size:16px;line-height:16px;color:#e0e0e0;">58</div></div><div class="b" style="left:54px;top:1281.1px;width:32px;height:1px;background:#4a4a4a;"></div><div class="b" style="left:54px;top:1261.5px;width:33px;height:20.1px;overflow:hidden;"><div class="t" style="left:0;width:33px;text-align:center;top:4.1px;font-size:16px;line-height:16px;color:#e0e0e0;">59</div></div><div class="b" style="left:54px;top:1301.1px;width:32px;height:1px;background:#4a4a4a;"></div><div class="b" style="left:54px;top:1281.6px;width:33px;height:20px;overflow:hidden;"><div class="t" style="left:0;width:33px;text-align:center;top:4px;font-size:16px;line-height:16px;color:#e0e0e0;">60</div></div><div class="b" style="left:54px;top:1324.3px;width:32px;height:1px;background:#4a4a4a;"></div><div class="b" style="left:54px;top:1301.6px;width:33px;height:23.2px;overflow:hidden;"><div class="t" style="left:0;width:33px;text-align:center;top:7.2px;font-size:16px;line-height:16px;color:#e0e0e0;">61</div></div><div class="b" style="left:54px;top:1347.3px;width:32px;height:1px;background:#4a4a4a;"></div><div class="b" style="left:54px;top:1324.8px;width:33px;height:23px;overflow:hidden;"><div class="t" style="left:0;width:33px;text-align:center;top:7px;font-size:16px;line-height:16px;color:#e0e0e0;">62</div></div><div class="b" style="left:54px;top:1370.1px;width:32px;height:1px;background:#4a4a4a;"></div><div class="b" style="left:54px;top:1347.8px;width:33px;height:22.8px;overflow:hidden;"><div class="t" style="left:0;width:33px;text-align:center;top:6.8px;font-size:16px;line-height:16px;color:#e0e0e0;">63</div></div><div class="b" style="left:54px;top:1392.9px;width:32px;height:1px;background:#4a4a4a;"></div><div class="b" style="left:54px;top:1370.6px;width:33px;height:22.8px;overflow:hidden;"><div class="t" style="left:0;width:33px;text-align:center;top:6.8px;font-size:16px;line-height:16px;color:#e0e0e0;">64</div></div><div class="b" style="left:54px;top:1412.9px;width:32px;height:1px;background:#4a4a4a;"></div><div class="b" style="left:54px;top:1393.4px;width:33px;height:20px;overflow:hidden;"><div class="t" style="left:0;width:33px;text-align:center;top:4px;font-size:16px;line-height:16px;color:#e0e0e0;">65</div></div><div class="b" style="left:54px;top:1433.7px;width:32px;height:1px;background:#4a4a4a;"></div><div class="b" style="left:54px;top:1413.4px;width:33px;height:20.8px;overflow:hidden;"><div class="t" style="left:0;width:33px;text-align:center;top:4.8px;font-size:16px;line-height:16px;color:#e0e0e0;">66</div></div><div class="b" style="left:54px;top:1451.1px;width:32px;height:1px;background:#4a4a4a;"></div><div class="b" style="left:54px;top:1434.2px;width:33px;height:17.4px;overflow:hidden;"><div class="t" style="left:0;width:33px;text-align:center;top:1.4px;font-size:16px;line-height:16px;color:#e0e0e0;">67</div></div><div class="b" style="left:54px;top:1475.8px;width:32px;height:1px;background:#4a4a4a;"></div><div class="b" style="left:54px;top:1451.6px;width:33px;height:24.7px;overflow:hidden;"><div class="t" style="left:0;width:33px;text-align:center;top:8.7px;font-size:16px;line-height:16px;color:#e0e0e0;">68</div></div><div class="b" style="left:54px;top:1488.9px;width:32px;height:1px;background:#4a4a4a;"></div><div class="b" style="left:54px;top:1476.3px;width:33px;height:13.1px;overflow:hidden;"><div class="t" style="left:0;width:33px;text-align:center;top:-2.9px;font-size:16px;line-height:16px;color:#e0e0e0;">69</div></div><div class="b" style="left:54px;top:1508.9px;width:32px;height:1px;background:#4a4a4a;"></div><div class="b" style="left:54px;top:1489.4px;width:33px;height:20px;overflow:hidden;"><div class="t" style="left:0;width:33px;text-align:center;top:4px;font-size:16px;line-height:16px;color:#e0e0e0;">70</div></div><div class="b" style="left:54px;top:1529px;width:32px;height:1px;background:#4a4a4a;"></div><div class="b" style="left:54px;top:1509.4px;width:33px;height:20.1px;overflow:hidden;"><div class="t" style="left:0;width:33px;text-align:center;top:4.1px;font-size:16px;line-height:16px;color:#e0e0e0;">71</div></div><div class="b" style="left:54px;top:1549px;width:32px;height:1px;background:#4a4a4a;"></div><div class="b" style="left:54px;top:1529.5px;width:33px;height:20px;overflow:hidden;"><div class="t" style="left:0;width:33px;text-align:center;top:4px;font-size:16px;line-height:16px;color:#e0e0e0;">72</div></div><div class="b" style="left:54px;top:1568.9px;width:32px;height:1px;background:#4a4a4a;"></div><div class="b" style="left:54px;top:1549.5px;width:33px;height:19.9px;overflow:hidden;"><div class="t" style="left:0;width:33px;text-align:center;top:3.9px;font-size:16px;line-height:16px;color:#e0e0e0;">73</div></div><div class="b" style="left:54px;top:1588.9px;width:32px;height:1px;background:#4a4a4a;"></div><div class="b" style="left:54px;top:1569.4px;width:33px;height:20px;overflow:hidden;"><div class="t" style="left:0;width:33px;text-align:center;top:4px;font-size:16px;line-height:16px;color:#e0e0e0;">74</div></div><div class="b" style="left:54px;top:1609.2px;width:32px;height:1px;background:#4a4a4a;"></div><div class="b" style="left:54px;top:1589.4px;width:33px;height:20.3px;overflow:hidden;"><div class="t" style="left:0;width:33px;text-align:center;top:4.3px;font-size:16px;line-height:16px;color:#e0e0e0;">75</div></div><div class="b" style="left:54px;top:1629px;width:32px;height:1px;background:#4a4a4a;"></div><div class="b" style="left:54px;top:1609.7px;width:33px;height:19.8px;overflow:hidden;"><div class="t" style="left:0;width:33px;text-align:center;top:3.8px;font-size:16px;line-height:16px;color:#e0e0e0;">76</div></div><div class="b" style="left:54px;top:1648.9px;width:32px;height:1px;background:#4a4a4a;"></div><div class="b" style="left:54px;top:1629.5px;width:33px;height:19.9px;overflow:hidden;"><div class="t" style="left:0;width:33px;text-align:center;top:3.9px;font-size:16px;line-height:16px;color:#e0e0e0;">77</div></div><div class="b" style="left:54px;top:1666.2px;width:32px;height:1px;background:#4a4a4a;"></div><div class="b" style="left:54px;top:1649.4px;width:33px;height:17.3px;overflow:hidden;"><div class="t" style="left:0;width:33px;text-align:center;top:1.3px;font-size:16px;line-height:16px;color:#e0e0e0;">78</div></div><div class="b" style="left:54px;top:1666.7px;width:33px;height:3.3px;overflow:hidden;"><div class="t" style="left:0;width:33px;text-align:center;top:-1.5px;font-size:16px;line-height:16px;color:#e0e0e0;">79</div></div><div class="b" style="left:54px;top:543.6px;width:32px;height:3.4px;background:#0c0c0c;"></div><div class="b" style="left:54px;top:543.1px;width:32px;height:1px;background:#4a4a4a;"></div><div class="b" style="left:54px;top:546.5px;width:32px;height:1px;background:#4a4a4a;"></div><div class="b" style="left:54px;top:564px;width:32px;height:3px;background:#0c0c0c;"></div><div class="b" style="left:54px;top:563.5px;width:32px;height:1px;background:#4a4a4a;"></div><div class="b" style="left:54px;top:566.5px;width:32px;height:1px;background:#4a4a4a;"></div><div class="b" style="left:54px;top:685.2px;width:32px;height:3.8px;background:#0c0c0c;"></div><div class="b" style="left:54px;top:684.7px;width:32px;height:1px;background:#4a4a4a;"></div><div class="b" style="left:54px;top:688.5px;width:32px;height:1px;background:#4a4a4a;"></div><div class="b" style="left:54px;top:709.3px;width:32px;height:4.3px;background:#0c0c0c;"></div><div class="b" style="left:54px;top:708.8px;width:32px;height:1px;background:#4a4a4a;"></div><div class="b" style="left:54px;top:713.1px;width:32px;height:1px;background:#4a4a4a;"></div><div class="b" style="left:54px;top:773.5px;width:32px;height:4px;background:#0c0c0c;"></div><div class="b" style="left:54px;top:773px;width:32px;height:1px;background:#4a4a4a;"></div><div class="b" style="left:54px;top:777px;width:32px;height:1px;background:#4a4a4a;"></div><div class="b" style="left:54px;top:455.5px;width:33px;height:1.5px;background:#a6a6a6;"></div><div class="b" style="left:11px;top:455.5px;width:43px;height:1.5px;background:#a6a6a6;"></div><div class="b" style="left:13.5px;top:546.5px;width:18px;height:18px;background:#e2e2e2;border:1px solid #fafafa;box-sizing:border-box;"></div><svg class="b" style="left:17px;top:550px;" width="11" height="11" viewBox="0 0 11 11"><path d="M5.5 1 L5.5 10 M1 5.5 L10 5.5" stroke="#555" stroke-width="1.8"/></svg><div class="b" style="left:13.5px;top:566.7px;width:18px;height:18px;background:#e2e2e2;border:1px solid #fafafa;box-sizing:border-box;"></div><svg class="b" style="left:17px;top:570.2px;" width="11" height="11" viewBox="0 0 11 11"><path d="M5.5 1 L5.5 10 M1 5.5 L10 5.5" stroke="#555" stroke-width="1.8"/></svg><div class="b" style="left:2863px;top:279px;width:26px;height:1391px;background:#161616;border-radius:13px;"></div><svg class="b" style="left:2869px;top:286px;" width="14" height="10" viewBox="0 0 14 10"><path d="M7 0.5 L13.5 9.5 L0.5 9.5 Z" fill="#9a9a9a" stroke="#9a9a9a" stroke-linejoin="round"/></svg><div class="b" style="left:2870px;top:304px;width:12px;height:1020px;background:#9a9a9a;border-radius:6px;"></div><svg class="b" style="left:2869px;top:1653px;" width="14" height="10" viewBox="0 0 14 10"><path d="M0.5 0.5 L13.5 0.5 L7 9.5 Z" fill="#9a9a9a" stroke="#9a9a9a" stroke-linejoin="round"/></svg><svg class="b" style="left:44px;top:1684px;" width="14" height="18" viewBox="0 0 14 18"><path d="M10 2 L3 9 L10 16" stroke="#aaa" stroke-width="1.6" fill="none"/></svg><svg class="b" style="left:92px;top:1684px;" width="14" height="18" viewBox="0 0 14 18"><path d="M4 2 L11 9 L4 16" stroke="#ddd" stroke-width="1.6" fill="none"/></svg><div class="t" style="left:191px;top:1685.5px;font-size:20px;line-height:20px;color:#ffffff;transform:scaleX(1.02);transform-origin:0 0;">Contents</div><div class="b" style="left:292px;top:1680px;width:1px;height:28px;background:#4a4a4a;"></div><div class="b" style="left:1204px;top:1669.5px;width:13px;height:9.5px;background:#ffffff;"></div><div class="b" style="left:1204px;top:1669.5px;width:13px;height:25.5px;background:#0a0a0a;border-top-right-radius:8px;"></div><div class="b" style="left:1263px;top:1669.5px;width:13px;height:9.5px;background:#ffffff;"></div><div class="b" style="left:1263px;top:1669.5px;width:13px;height:25.5px;background:#0a0a0a;border-top-left-radius:8px;"></div><div class="b" style="left:1270px;top:1680px;width:1px;height:28px;background:#4a4a4a;"></div><div class="b" style="left:299px;top:1676px;width:128px;height:36px;background:#fce86c;border-radius:6px;"></div><div class="t" style="left:363px;width:0;display:flex;justify-content:center;top:1685.5px;font-size:20px;line-height:20px;color:#111;transform:scaleX(1.02);">Dashboard</div><div class="b" style="left:433px;top:1680px;width:1px;height:28px;background:#4a4a4a;"></div><div class="b" style="left:439.5px;top:1676px;width:107px;height:36px;background:#fce86c;border-radius:6px;"></div><div class="t" style="left:493px;width:0;display:flex;justify-content:center;top:1685.5px;font-size:20px;line-height:20px;color:#111;transform:scaleX(0.98);">Revenue</div><div class="b" style="left:552.5px;top:1680px;width:1px;height:28px;background:#4a4a4a;"></div><div class="b" style="left:559.5px;top:1676px;width:157.5px;height:36px;background:#fce86c;border-radius:6px;"></div><div class="t" style="left:638.25px;width:0;display:flex;justify-content:center;top:1685.5px;font-size:20px;line-height:20px;color:#111;transform:scaleX(0.96);">COGS &amp; OPEX</div><div class="b" style="left:723px;top:1680px;width:1px;height:28px;background:#4a4a4a;"></div><div class="b" style="left:730px;top:1676px;width:88.5px;height:36px;background:#fce86c;border-radius:6px;"></div><div class="t" style="left:774.25px;width:0;display:flex;justify-content:center;top:1685.5px;font-size:20px;line-height:20px;color:#111;transform:scaleX(1);">Payroll</div><div class="b" style="left:824.5px;top:1680px;width:1px;height:28px;background:#4a4a4a;"></div><div class="b" style="left:832px;top:1676px;width:88px;height:36px;background:#fce86c;border-radius:6px;"></div><div class="t" style="left:876px;width:0;display:flex;justify-content:center;top:1685.5px;font-size:20px;line-height:20px;color:#111;transform:scaleX(0.9);">CAPEX</div><div class="b" style="left:926px;top:1680px;width:1px;height:28px;background:#4a4a4a;"></div><div class="b" style="left:932.5px;top:1676px;width:112px;height:36px;background:#fce86c;border-radius:6px;"></div><div class="t" style="left:988.5px;width:0;display:flex;justify-content:center;top:1685.5px;font-size:20px;line-height:20px;color:#111;transform:scaleX(1.01);">CapTable</div><div class="b" style="left:1050.5px;top:1680px;width:1px;height:28px;background:#4a4a4a;"></div><div class="b" style="left:1058.5px;top:1676px;width:89px;height:36px;background:#fce86c;border-radius:6px;"></div><div class="t" style="left:1103px;width:0;display:flex;justify-content:center;top:1685.5px;font-size:20px;line-height:20px;color:#111;transform:scaleX(1.01);">Capital</div><div class="b" style="left:1153.5px;top:1680px;width:1px;height:28px;background:#4a4a4a;"></div><div class="b" style="left:1161.5px;top:1676px;width:41px;height:36px;background:#4aaee4;border-radius:6px;"></div><div class="t" style="left:1182px;width:0;display:flex;justify-content:center;top:1685.5px;font-size:20px;line-height:20px;color:#111;transform:scaleX(0.83);">IS</div><div class="b" style="left:1208.5px;top:1680px;width:1px;height:28px;background:#4a4a4a;"></div><div class="b" style="left:1277px;top:1676px;width:47px;height:36px;background:#4aaee4;border-radius:6px;"></div><div class="t" style="left:1300.5px;width:0;display:flex;justify-content:center;top:1685.5px;font-size:20px;line-height:20px;color:#111;transform:scaleX(0.81);">BS</div><div class="b" style="left:1330px;top:1680px;width:1px;height:28px;background:#4a4a4a;"></div><div class="b" style="left:1338.5px;top:1676px;width:114px;height:36px;background:#4aaee4;border-radius:6px;"></div><div class="t" style="left:1395.5px;width:0;display:flex;justify-content:center;top:1685.5px;font-size:20px;line-height:20px;color:#111;transform:scaleX(0.98);">Scenarios</div><div class="b" style="left:1458.5px;top:1680px;width:1px;height:28px;background:#4a4a4a;"></div><div class="b" style="left:1466.5px;top:1676px;width:114.5px;height:36px;background:#4aaee4;border-radius:6px;"></div><div class="t" style="left:1523.75px;width:0;display:flex;justify-content:center;top:1685.5px;font-size:20px;line-height:20px;color:#111;transform:scaleX(1.06);">Valuation</div><div class="b" style="left:1587px;top:1680px;width:1px;height:28px;background:#4a4a4a;"></div><div class="b" style="left:1594.5px;top:1676px;width:113px;height:36px;background:#4aaee4;border-radius:6px;"></div><div class="t" style="left:1651px;width:0;display:flex;justify-content:center;top:1685.5px;font-size:20px;line-height:20px;color:#111;transform:scaleX(1.01);">Summary</div><div class="b" style="left:1713.5px;top:1680px;width:1px;height:28px;background:#4a4a4a;"></div><div class="b" style="left:1721px;top:1676px;width:47.5px;height:36px;background:#4aaee4;border-radius:6px;"></div><div class="t" style="left:1744.75px;width:0;display:flex;justify-content:center;top:1685.5px;font-size:20px;line-height:20px;color:#111;transform:scaleX(0.82);">BE</div><div class="b" style="left:1774.5px;top:1680px;width:1px;height:28px;background:#4a4a4a;"></div><div class="b" style="left:1782px;top:1676px;width:72px;height:36px;background:#4aaee4;border-radius:6px;"></div><div class="t" style="left:1818px;width:0;display:flex;justify-content:center;top:1685.5px;font-size:20px;line-height:20px;color:#111;transform:scaleX(0.91);">ROIC</div><div class="b" style="left:1860px;top:1680px;width:1px;height:28px;background:#4a4a4a;"></div><div class="b" style="left:1867.5px;top:1676px;width:84.5px;height:36px;background:#4aaee4;border-radius:6px;"></div><div class="t" style="left:1909.75px;width:0;display:flex;justify-content:center;top:1685.5px;font-size:20px;line-height:20px;color:#111;transform:scaleX(0.98);">Charts</div><div class="b" style="left:1958px;top:1680px;width:1px;height:28px;background:#4a4a4a;"></div><div class="b" style="left:1965.5px;top:1676px;width:63.5px;height:36px;background:#4aaee4;border-radius:6px;"></div><div class="t" style="left:1997.25px;width:0;display:flex;justify-content:center;top:1685.5px;font-size:20px;line-height:20px;color:#111;transform:scaleX(0.88);">KPIs</div><div class="b" style="left:2035px;top:1680px;width:1px;height:28px;background:#4a4a4a;"></div><div class="b" style="left:2042px;top:1676.5px;width:30px;height:35px;overflow:hidden;"><div class="b" style="left:0;top:0;width:60px;height:35px;background:#4aaee4;border-radius:6px;"></div><div class="t" style="left:8px;top:9px;font-size:20px;line-height:20px;color:#111;">Sc</div></div><div class="b" style="left:1216.5px;top:1670px;width:47px;height:42px;background:linear-gradient(#ffffff 0%, #f4fafe 55%, #cfe9f8 100%);border-radius:0 0 7px 7px;"></div><div class="t" style="left:1240px;width:0;display:flex;justify-content:center;top:1681px;font-size:20px;line-height:20px;color:#1a1a1a;transform:scaleX(0.84);">CF</div><div class="b" style="left:1228px;top:1705px;width:24px;height:3px;background:#1e7145;"></div><div class="b" style="left:2087px;top:1692px;width:4px;height:4px;background:#ddd;border-radius:2px;"></div><div class="b" style="left:2093px;top:1692px;width:4px;height:4px;background:#ddd;border-radius:2px;"></div><div class="b" style="left:2099px;top:1692px;width:4px;height:4px;background:#ddd;border-radius:2px;"></div><svg class="b" style="left:2134px;top:1685px;" width="18" height="18" viewBox="0 0 18 18"><path d="M9 1 L9 17 M1 9 L17 9" stroke="#ddd" stroke-width="1.6"/></svg><div class="b" style="left:2190px;top:1686px;width:4px;height:4px;background:#ddd;border-radius:2px;"></div><div class="b" style="left:2190px;top:1692px;width:4px;height:4px;background:#ddd;border-radius:2px;"></div><div class="b" style="left:2190px;top:1698px;width:4px;height:4px;background:#ddd;border-radius:2px;"></div><div class="b" style="left:2217px;top:1680px;width:644px;height:26px;background:#161616;border-radius:13px;"></div><svg class="b" style="left:2223px;top:1687px;" width="11" height="13" viewBox="0 0 11 13"><path d="M10 0.5 L10 12.5 L0.5 6.5 Z" fill="#9a9a9a" stroke="#9a9a9a" stroke-linejoin="round"/></svg><div class="b" style="left:2242px;top:1687px;width:158px;height:12px;background:#9a9a9a;border-radius:6px;"></div><svg class="b" style="left:2843px;top:1687px;" width="11" height="13" viewBox="0 0 11 13"><path d="M0.5 0.5 L10.5 6.5 L0.5 12.5 Z" fill="#9a9a9a" stroke="#9a9a9a" stroke-linejoin="round"/></svg><div class="b" style="left:11px;top:1717.5px;width:2880px;height:1px;background:#2e2e2e;"></div><div class="b" style="left:11px;top:1718.5px;width:2880px;height:32.5px;background:#141414;"></div><div class="t" style="left:27.5px;top:1728px;font-size:17px;line-height:17px;color:#ffffff;transform:scaleX(0.87);transform-origin:0 0;">Ready</div><svg class="b" style="left:99px;top:1725px;" width="24" height="22" viewBox="0 0 24 22"><path d="M1 1 L20 1 M1 5 L20 5 M1 1 L1 21 L9 21 M20 1 L20 9 M4 10 L9 10 M4 14 L8 14 M4 18 L8 18" stroke="#fff" stroke-width="1.6" fill="none"/><circle cx="16" cy="16" r="6" stroke="#fff" stroke-width="1.6" fill="none"/><circle cx="16" cy="16" r="3" fill="#fff"/></svg><svg class="b" style="left:145px;top:1723px;" width="24" height="24" viewBox="0 0 24 24"><circle cx="10" cy="3.5" r="2.5" stroke="#fff" stroke-width="1.5" fill="none"/><path d="M1 7 Q10 10 19 6 M10 9 L10 14 L5 22 M10 14 L12 17 M13 16 L21 23 M21 16 L13 23" stroke="#fff" stroke-width="1.6" fill="none"/></svg><div class="t" style="left:173.5px;top:1728px;font-size:17px;line-height:17px;color:#ffffff;font-weight:700;transform:scaleX(0.92);transform-origin:0 0;">Accessibility: Investigate</div><div class="b" style="left:2445px;top:1719px;width:60px;height:32px;background:#262626;"></div><svg class="b" style="left:2464px;top:1725px;" width="21" height="20" viewBox="0 0 21 20"><path d="M1 1 L20 1 L20 19 L1 19 Z M1 7 L20 7 M1 13 L20 13 M7.3 1 L7.3 19 M13.6 1 L13.6 19" stroke="#fff" stroke-width="1.7" fill="none"/></svg><svg class="b" style="left:2524px;top:1725px;" width="22" height="20" viewBox="0 0 22 20"><rect x="1" y="1" width="20" height="18" stroke="#fff" stroke-width="1.6" fill="none"/><rect x="5" y="4" width="12" height="12" stroke="#fff" stroke-width="1.4" fill="none"/><path d="M8 8 L14 8 M8 11 L14 11" stroke="#fff" stroke-width="1.3"/></svg><svg class="b" style="left:2584px;top:1725px;" width="22" height="20" viewBox="0 0 22 20"><path d="M1 1 L21 1 L21 19 L1 19 Z M1 10 L11 10 L11 1 M6 1 L6 10" stroke="#fff" stroke-width="1.6" fill="none"/></svg><div class="b" style="left:2633px;top:1734px;width:11px;height:1.5px;background:#ddd;"></div><div class="b" style="left:2653px;top:1734.5px;width:148px;height:1.5px;background:#bbb;"></div><div class="b" style="left:2723px;top:1726px;width:8px;height:17px;background:#bbb;"></div><svg class="b" style="left:2808px;top:1727px;" width="16" height="16" viewBox="0 0 16 16"><path d="M8 1 L8 15 M1 8 L15 8" stroke="#ddd" stroke-width="1.5"/></svg><div class="t" style="left:2840px;top:1728px;font-size:17px;line-height:17px;color:#ffffff;transform:scaleX(0.89);transform-origin:0 0;">100%</div><div class="b" style="left:87px;top:297px;width:2773px;height:1373px;background:#ffffff;"></div><div class="b" style="left:807px;top:297px;width:1px;height:1373px;background:#a6a6a6;"></div><div class="b" style="left:87px;top:455.5px;width:2773px;height:1.5px;background:#a6a6a6;"></div><div class="t" style="left:114.5px;top:479px;font-size:21px;line-height:21px;color:#1c1c24;font-weight:700;transform:scaleX(1.01);transform-origin:0 0;">Cash Flow Statement, $</div><div class="t" style="left:126.2px;top:519.6px;font-size:17px;line-height:17px;color:#1c1c24;font-weight:700;transform:scaleX(1.09);transform-origin:0 0;">Cash Flow from Operating Activities</div><div class="t" style="left:139.5px;top:549.5px;font-size:14.5px;line-height:14.5px;color:#1c1c24;transform:scaleX(1.02);transform-origin:0 0;">Cash Receipts</div><div class="t" style="right:1982.1px;top:549.5px;font-size:14px;line-height:14px;color:#1c1c24;">18,574</div><div class="t" style="right:1862.1px;top:549.5px;font-size:14px;line-height:14px;color:#1c1c24;">46,979</div><div class="t" style="right:1742.1px;top:549.5px;font-size:14px;line-height:14px;color:#1c1c24;">88,777</div><div class="t" style="right:1622.1px;top:549.5px;font-size:14px;line-height:14px;color:#1c1c24;">102,175</div><div class="t" style="right:1502.1px;top:549.5px;font-size:14px;line-height:14px;color:#1c1c24;">110,161</div><div class="t" style="right:1382.1px;top:549.5px;font-size:14px;line-height:14px;color:#1c1c24;">107,093</div><div class="t" style="right:1262.1px;top:549.5px;font-size:14px;line-height:14px;color:#1c1c24;">106,969</div><div class="t" style="right:1142.1px;top:549.5px;font-size:14px;line-height:14px;color:#1c1c24;">110,282</div><div class="t" style="right:1022.1px;top:549.5px;font-size:14px;line-height:14px;color:#1c1c24;">104,981</div><div class="t" style="right:902.1px;top:549.5px;font-size:14px;line-height:14px;color:#1c1c24;">106,009</div><div class="t" style="right:782.1px;top:549.5px;font-size:14px;line-height:14px;color:#1c1c24;">102,145</div><div class="t" style="right:662.1px;top:549.5px;font-size:14px;line-height:14px;color:#1c1c24;">99,306</div><div class="t" style="right:542.1px;top:549.5px;font-size:14px;line-height:14px;color:#1c1c24;">119,027</div><div class="t" style="right:422.1px;top:549.5px;font-size:14px;line-height:14px;color:#1c1c24;">124,954</div><div class="t" style="right:302.1px;top:549.5px;font-size:14px;line-height:14px;color:#1c1c24;">136,077</div><div class="t" style="right:182.1px;top:549.5px;font-size:14px;line-height:14px;color:#1c1c24;">134,946</div><div class="t" style="right:62.1px;top:549.5px;font-size:14px;line-height:14px;color:#1c1c24;">146,521</div><div class="t" style="left:139.5px;top:569px;font-size:14.5px;line-height:14.5px;color:#1c1c24;transform:scaleX(1.04);transform-origin:0 0;">Cash Payments</div><div class="t" style="right:1977.6px;top:569px;font-size:14px;line-height:14px;color:#1c1c24;">(26,809)</div><div class="t" style="right:1857.6px;top:569px;font-size:14px;line-height:14px;color:#1c1c24;">(48,750)</div><div class="t" style="right:1737.6px;top:569px;font-size:14px;line-height:14px;color:#1c1c24;">(60,529)</div><div class="t" style="right:1617.6px;top:569px;font-size:14px;line-height:14px;color:#1c1c24;">(57,069)</div><div class="t" style="right:1497.6px;top:569px;font-size:14px;line-height:14px;color:#1c1c24;">(60,708)</div><div class="t" style="right:1377.6px;top:569px;font-size:14px;line-height:14px;color:#1c1c24;">(57,288)</div><div class="t" style="right:1257.6px;top:569px;font-size:14px;line-height:14px;color:#1c1c24;">(59,336)</div><div class="t" style="right:1137.6px;top:569px;font-size:14px;line-height:14px;color:#1c1c24;">(59,755)</div><div class="t" style="right:1017.6px;top:569px;font-size:14px;line-height:14px;color:#1c1c24;">(56,819)</div><div class="t" style="right:897.6px;top:569px;font-size:14px;line-height:14px;color:#1c1c24;">(59,454)</div><div class="t" style="right:777.6px;top:569px;font-size:14px;line-height:14px;color:#1c1c24;">(56,687)</div><div class="t" style="right:657.6px;top:569px;font-size:14px;line-height:14px;color:#1c1c24;">(57,192)</div><div class="t" style="right:537.6px;top:569px;font-size:14px;line-height:14px;color:#1c1c24;">(65,980)</div><div class="t" style="right:417.6px;top:569px;font-size:14px;line-height:14px;color:#1c1c24;">(62,425)</div><div class="t" style="right:297.6px;top:569px;font-size:14px;line-height:14px;color:#1c1c24;">(69,438)</div><div class="t" style="right:177.6px;top:569px;font-size:14px;line-height:14px;color:#1c1c24;">(66,677)</div><div class="t" style="right:57.6px;top:569px;font-size:14px;line-height:14px;color:#1c1c24;">(70,365)</div><div class="t" style="left:139.5px;top:589.5px;font-size:14.5px;line-height:14.5px;color:#1c1c24;transform:scaleX(1.07);transform-origin:0 0;">Interest Expense</div><div class="t" style="right:1977.6px;top:589.5px;font-size:14px;line-height:14px;color:#1c1c24;">(1,000)</div><div class="t" style="right:1857.6px;top:589.5px;font-size:14px;line-height:14px;color:#1c1c24;">(1,000)</div><div class="t" style="right:1737.6px;top:589.5px;font-size:14px;line-height:14px;color:#1c1c24;">(1,667)</div><div class="t" style="right:1617.6px;top:589.5px;font-size:14px;line-height:14px;color:#1c1c24;">(1,656)</div><div class="t" style="right:1497.6px;top:589.5px;font-size:14px;line-height:14px;color:#1c1c24;">(1,644)</div><div class="t" style="right:1377.6px;top:589.5px;font-size:14px;line-height:14px;color:#1c1c24;">(1,633)</div><div class="t" style="right:1257.6px;top:589.5px;font-size:14px;line-height:14px;color:#1c1c24;">(1,622)</div><div class="t" style="right:1137.6px;top:589.5px;font-size:14px;line-height:14px;color:#1c1c24;">(1,611)</div><div class="t" style="right:1017.6px;top:589.5px;font-size:14px;line-height:14px;color:#1c1c24;">(1,600)</div><div class="t" style="right:897.6px;top:589.5px;font-size:14px;line-height:14px;color:#1c1c24;">(1,589)</div><div class="t" style="right:777.6px;top:589.5px;font-size:14px;line-height:14px;color:#1c1c24;">(1,578)</div><div class="t" style="right:657.6px;top:589.5px;font-size:14px;line-height:14px;color:#1c1c24;">(1,567)</div><div class="t" style="right:537.6px;top:589.5px;font-size:14px;line-height:14px;color:#1c1c24;">(1,556)</div><div class="t" style="right:417.6px;top:589.5px;font-size:14px;line-height:14px;color:#1c1c24;">(1,534)</div><div class="t" style="right:297.6px;top:589.5px;font-size:14px;line-height:14px;color:#1c1c24;">(1,512)</div><div class="t" style="right:177.6px;top:589.5px;font-size:14px;line-height:14px;color:#1c1c24;">(1,491)</div><div class="t" style="right:57.6px;top:589.5px;font-size:14px;line-height:14px;color:#1c1c24;">(1,469)</div><div class="t" style="left:139.5px;top:609.3px;font-size:14.5px;line-height:14.5px;color:#1c1c24;transform:scaleX(1.08);transform-origin:0 0;">Corporate Tax Expense</div><div class="t" style="right:1982.1px;top:609.3px;font-size:14px;line-height:14px;color:#1c1c24;">-</div><div class="t" style="right:1857.6px;top:609.3px;font-size:14px;line-height:14px;color:#1c1c24;">(2,770)</div><div class="t" style="right:1737.6px;top:609.3px;font-size:14px;line-height:14px;color:#1c1c24;">(10,936)</div><div class="t" style="right:1617.6px;top:609.3px;font-size:14px;line-height:14px;color:#1c1c24;">(10,094)</div><div class="t" style="right:1497.6px;top:609.3px;font-size:14px;line-height:14px;color:#1c1c24;">(12,642)</div><div class="t" style="right:1377.6px;top:609.3px;font-size:14px;line-height:14px;color:#1c1c24;">(10,303)</div><div class="t" style="right:1257.6px;top:609.3px;font-size:14px;line-height:14px;color:#1c1c24;">(11,142)</div><div class="t" style="right:1137.6px;top:609.3px;font-size:14px;line-height:14px;color:#1c1c24;">(12,276)</div><div class="t" style="right:1017.6px;top:609.3px;font-size:14px;line-height:14px;color:#1c1c24;">(9,796)</div><div class="t" style="right:897.6px;top:609.3px;font-size:14px;line-height:14px;color:#1c1c24;">(11,270)</div><div class="t" style="right:777.6px;top:609.3px;font-size:14px;line-height:14px;color:#1c1c24;">(9,649)</div><div class="t" style="right:657.6px;top:609.3px;font-size:14px;line-height:14px;color:#1c1c24;">(8,835)</div><div class="t" style="right:537.6px;top:609.3px;font-size:14px;line-height:14px;color:#1c1c24;">(17,508)</div><div class="t" style="right:417.6px;top:609.3px;font-size:14px;line-height:14px;color:#1c1c24;">(13,690)</div><div class="t" style="right:297.6px;top:609.3px;font-size:14px;line-height:14px;color:#1c1c24;">(16,658)</div><div class="t" style="right:177.6px;top:609.3px;font-size:14px;line-height:14px;color:#1c1c24;">(16,848)</div><div class="t" style="right:57.6px;top:609.3px;font-size:14px;line-height:14px;color:#1c1c24;">(19,526)</div><div class="b" style="left:135px;top:625.3px;width:2725px;height:20.1px;background:#4aaee4;"></div><div class="t" style="left:146.5px;top:627.7px;font-size:16px;line-height:16px;color:#fff;font-weight:700;transform:scaleX(1.07);transform-origin:0 0;">Net Cash Flow from Operating Activities</div><div class="t" style="right:1978.5px;top:626.4px;font-size:18px;line-height:18px;color:#fff;font-weight:700;font-family:'Liberation Serif', serif;transform:scaleX(1.09);transform-origin:100% 0;-webkit-text-stroke:0.35px #fff;">(9,236)</div><div class="t" style="right:1858.5px;top:626.4px;font-size:18px;line-height:18px;color:#fff;font-weight:700;font-family:'Liberation Serif', serif;transform:scaleX(1.09);transform-origin:100% 0;-webkit-text-stroke:0.35px #fff;">(5,541)</div><div class="t" style="right:1745.6px;top:626.4px;font-size:18px;line-height:18px;color:#fff;font-weight:700;font-family:'Liberation Serif', serif;transform:scaleX(1.09);transform-origin:100% 0;-webkit-text-stroke:0.35px #fff;">15,645</div><div class="t" style="right:1625.6px;top:626.4px;font-size:18px;line-height:18px;color:#fff;font-weight:700;font-family:'Liberation Serif', serif;transform:scaleX(1.09);transform-origin:100% 0;-webkit-text-stroke:0.35px #fff;">33,356</div><div class="t" style="right:1505.6px;top:626.4px;font-size:18px;line-height:18px;color:#fff;font-weight:700;font-family:'Liberation Serif', serif;transform:scaleX(1.09);transform-origin:100% 0;-webkit-text-stroke:0.35px #fff;">35,166</div><div class="t" style="right:1385.6px;top:626.4px;font-size:18px;line-height:18px;color:#fff;font-weight:700;font-family:'Liberation Serif', serif;transform:scaleX(1.09);transform-origin:100% 0;-webkit-text-stroke:0.35px #fff;">37,870</div><div class="t" style="right:1265.6px;top:626.4px;font-size:18px;line-height:18px;color:#fff;font-weight:700;font-family:'Liberation Serif', serif;transform:scaleX(1.09);transform-origin:100% 0;-webkit-text-stroke:0.35px #fff;">34,868</div><div class="t" style="right:1145.6px;top:626.4px;font-size:18px;line-height:18px;color:#fff;font-weight:700;font-family:'Liberation Serif', serif;transform:scaleX(1.09);transform-origin:100% 0;-webkit-text-stroke:0.35px #fff;">36,640</div><div class="t" style="right:1025.6px;top:626.4px;font-size:18px;line-height:18px;color:#fff;font-weight:700;font-family:'Liberation Serif', serif;transform:scaleX(1.09);transform-origin:100% 0;-webkit-text-stroke:0.35px #fff;">36,766</div><div class="t" style="right:905.6px;top:626.4px;font-size:18px;line-height:18px;color:#fff;font-weight:700;font-family:'Liberation Serif', serif;transform:scaleX(1.09);transform-origin:100% 0;-webkit-text-stroke:0.35px #fff;">33,696</div><div class="t" style="right:785.6px;top:626.4px;font-size:18px;line-height:18px;color:#fff;font-weight:700;font-family:'Liberation Serif', serif;transform:scaleX(1.09);transform-origin:100% 0;-webkit-text-stroke:0.35px #fff;">34,231</div><div class="t" style="right:665.6px;top:626.4px;font-size:18px;line-height:18px;color:#fff;font-weight:700;font-family:'Liberation Serif', serif;transform:scaleX(1.09);transform-origin:100% 0;-webkit-text-stroke:0.35px #fff;">31,712</div><div class="t" style="right:545.6px;top:626.4px;font-size:18px;line-height:18px;color:#fff;font-weight:700;font-family:'Liberation Serif', serif;transform:scaleX(1.09);transform-origin:100% 0;-webkit-text-stroke:0.35px #fff;">33,983</div><div class="t" style="right:425.6px;top:626.4px;font-size:18px;line-height:18px;color:#fff;font-weight:700;font-family:'Liberation Serif', serif;transform:scaleX(1.09);transform-origin:100% 0;-webkit-text-stroke:0.35px #fff;">47,305</div><div class="t" style="right:305.6px;top:626.4px;font-size:18px;line-height:18px;color:#fff;font-weight:700;font-family:'Liberation Serif', serif;transform:scaleX(1.09);transform-origin:100% 0;-webkit-text-stroke:0.35px #fff;">48,468</div><div class="t" style="right:185.6px;top:626.4px;font-size:18px;line-height:18px;color:#fff;font-weight:700;font-family:'Liberation Serif', serif;transform:scaleX(1.09);transform-origin:100% 0;-webkit-text-stroke:0.35px #fff;">49,931</div><div class="t" style="right:65.6px;top:626.4px;font-size:18px;line-height:18px;color:#fff;font-weight:700;font-family:'Liberation Serif', serif;transform:scaleX(1.09);transform-origin:100% 0;-webkit-text-stroke:0.35px #fff;">55,161</div><div class="t" style="left:126.2px;top:667.2px;font-size:17px;line-height:17px;color:#1c1c24;font-weight:700;transform:scaleX(1.1);transform-origin:0 0;">Cash Flow from Investing Activities</div><div class="t" style="left:139.5px;top:693.3px;font-size:14.5px;line-height:14.5px;color:#1c1c24;transform:scaleX(1.08);transform-origin:0 0;">Capital Expenditure</div><div class="t" style="right:1977.6px;top:693.3px;font-size:14px;line-height:14px;color:#1c1c24;">(33,333)</div><div class="t" style="right:1857.6px;top:693.3px;font-size:14px;line-height:14px;color:#1c1c24;">(40,000)</div><div class="t" style="right:1737.6px;top:693.3px;font-size:14px;line-height:14px;color:#1c1c24;">(42,667)</div><div class="t" style="right:1617.6px;top:693.3px;font-size:14px;line-height:14px;color:#1c1c24;">(18,333)</div><div class="t" style="right:1497.6px;top:693.3px;font-size:14px;line-height:14px;color:#1c1c24;">(13,000)</div><div class="t" style="right:1377.6px;top:693.3px;font-size:14px;line-height:14px;color:#1c1c24;">(11,333)</div><div class="t" style="right:1257.6px;top:693.3px;font-size:14px;line-height:14px;color:#1c1c24;">(2,333)</div><div class="t" style="right:1137.6px;top:693.3px;font-size:14px;line-height:14px;color:#1c1c24;">(1,000)</div><div class="t" style="right:1022.1px;top:693.3px;font-size:14px;line-height:14px;color:#1c1c24;">-</div><div class="t" style="right:902.1px;top:693.3px;font-size:14px;line-height:14px;color:#1c1c24;">-</div><div class="t" style="right:782.1px;top:693.3px;font-size:14px;line-height:14px;color:#1c1c24;">-</div><div class="t" style="right:662.1px;top:693.3px;font-size:14px;line-height:14px;color:#1c1c24;">-</div><div class="t" style="right:542.1px;top:693.3px;font-size:14px;line-height:14px;color:#1c1c24;">-</div><div class="t" style="right:422.1px;top:693.3px;font-size:14px;line-height:14px;color:#1c1c24;">-</div><div class="t" style="right:302.1px;top:693.3px;font-size:14px;line-height:14px;color:#1c1c24;">-</div><div class="t" style="right:182.1px;top:693.3px;font-size:14px;line-height:14px;color:#1c1c24;">-</div><div class="t" style="right:62.1px;top:693.3px;font-size:14px;line-height:14px;color:#1c1c24;">-</div><div class="b" style="left:135px;top:713.6px;width:2725px;height:19.8px;background:#4aaee4;"></div><div class="t" style="left:146.5px;top:715.7px;font-size:16px;line-height:16px;color:#fff;font-weight:700;transform:scaleX(1.07);transform-origin:0 0;">Net Cash Flow from Investing Activities</div><div class="t" style="right:1978.5px;top:714.4px;font-size:18px;line-height:18px;color:#fff;font-weight:700;font-family:'Liberation Serif', serif;transform:scaleX(1.09);transform-origin:100% 0;-webkit-text-stroke:0.35px #fff;">(33,333)</div><div class="t" style="right:1858.5px;top:714.4px;font-size:18px;line-height:18px;color:#fff;font-weight:700;font-family:'Liberation Serif', serif;transform:scaleX(1.09);transform-origin:100% 0;-webkit-text-stroke:0.35px #fff;">(40,000)</div><div class="t" style="right:1738.5px;top:714.4px;font-size:18px;line-height:18px;color:#fff;font-weight:700;font-family:'Liberation Serif', serif;transform:scaleX(1.09);transform-origin:100% 0;-webkit-text-stroke:0.35px #fff;">(42,667)</div><div class="t" style="right:1618.5px;top:714.4px;font-size:18px;line-height:18px;color:#fff;font-weight:700;font-family:'Liberation Serif', serif;transform:scaleX(1.09);transform-origin:100% 0;-webkit-text-stroke:0.35px #fff;">(18,333)</div><div class="t" style="right:1498.5px;top:714.4px;font-size:18px;line-height:18px;color:#fff;font-weight:700;font-family:'Liberation Serif', serif;transform:scaleX(1.09);transform-origin:100% 0;-webkit-text-stroke:0.35px #fff;">(13,000)</div><div class="t" style="right:1378.5px;top:714.4px;font-size:18px;line-height:18px;color:#fff;font-weight:700;font-family:'Liberation Serif', serif;transform:scaleX(1.09);transform-origin:100% 0;-webkit-text-stroke:0.35px #fff;">(11,333)</div><div class="t" style="right:1258.5px;top:714.4px;font-size:18px;line-height:18px;color:#fff;font-weight:700;font-family:'Liberation Serif', serif;transform:scaleX(1.09);transform-origin:100% 0;-webkit-text-stroke:0.35px #fff;">(2,333)</div><div class="t" style="right:1138.5px;top:714.4px;font-size:18px;line-height:18px;color:#fff;font-weight:700;font-family:'Liberation Serif', serif;transform:scaleX(1.09);transform-origin:100% 0;-webkit-text-stroke:0.35px #fff;">(1,000)</div><div class="t" style="right:1025.6px;top:714.4px;font-size:18px;line-height:18px;color:#fff;font-weight:700;font-family:'Liberation Serif', serif;transform:scaleX(1.09);transform-origin:100% 0;-webkit-text-stroke:0.35px #fff;">-</div><div class="t" style="right:905.6px;top:714.4px;font-size:18px;line-height:18px;color:#fff;font-weight:700;font-family:'Liberation Serif', serif;transform:scaleX(1.09);transform-origin:100% 0;-webkit-text-stroke:0.35px #fff;">-</div><div class="t" style="right:785.6px;top:714.4px;font-size:18px;line-height:18px;color:#fff;font-weight:700;font-family:'Liberation Serif', serif;transform:scaleX(1.09);transform-origin:100% 0;-webkit-text-stroke:0.35px #fff;">-</div><div class="t" style="right:665.6px;top:714.4px;font-size:18px;line-height:18px;color:#fff;font-weight:700;font-family:'Liberation Serif', serif;transform:scaleX(1.09);transform-origin:100% 0;-webkit-text-stroke:0.35px #fff;">-</div><div class="t" style="right:545.6px;top:714.4px;font-size:18px;line-height:18px;color:#fff;font-weight:700;font-family:'Liberation Serif', serif;transform:scaleX(1.09);transform-origin:100% 0;-webkit-text-stroke:0.35px #fff;">-</div><div class="t" style="right:425.6px;top:714.4px;font-size:18px;line-height:18px;color:#fff;font-weight:700;font-family:'Liberation Serif', serif;transform:scaleX(1.09);transform-origin:100% 0;-webkit-text-stroke:0.35px #fff;">-</div><div class="t" style="right:305.6px;top:714.4px;font-size:18px;line-height:18px;color:#fff;font-weight:700;font-family:'Liberation Serif', serif;transform:scaleX(1.09);transform-origin:100% 0;-webkit-text-stroke:0.35px #fff;">-</div><div class="t" style="right:185.6px;top:714.4px;font-size:18px;line-height:18px;color:#fff;font-weight:700;font-family:'Liberation Serif', serif;transform:scaleX(1.09);transform-origin:100% 0;-webkit-text-stroke:0.35px #fff;">-</div><div class="t" style="right:65.6px;top:714.4px;font-size:18px;line-height:18px;color:#fff;font-weight:700;font-family:'Liberation Serif', serif;transform:scaleX(1.09);transform-origin:100% 0;-webkit-text-stroke:0.35px #fff;">-</div><div class="t" style="left:126.2px;top:755.5px;font-size:17px;line-height:17px;color:#1c1c24;font-weight:700;transform:scaleX(1.09);transform-origin:0 0;">Cash Flow from Financing Activities</div><div class="t" style="left:139.5px;top:781.5px;font-size:14.5px;line-height:14.5px;color:#1c1c24;transform:scaleX(1.08);transform-origin:0 0;">Debts Drawdowns</div><div class="t" style="right:1982.1px;top:781.5px;font-size:14px;line-height:14px;color:#1c1c24;">200,000</div><div class="t" style="right:1862.1px;top:781.5px;font-size:14px;line-height:14px;color:#1c1c24;">-</div><div class="t" style="right:1742.1px;top:781.5px;font-size:14px;line-height:14px;color:#1c1c24;">100,000</div><div class="t" style="right:1622.1px;top:781.5px;font-size:14px;line-height:14px;color:#1c1c24;">-</div><div class="t" style="right:1502.1px;top:781.5px;font-size:14px;line-height:14px;color:#1c1c24;">-</div><div class="t" style="right:1382.1px;top:781.5px;font-size:14px;line-height:14px;color:#1c1c24;">-</div><div class="t" style="right:1262.1px;top:781.5px;font-size:14px;line-height:14px;color:#1c1c24;">-</div><div class="t" style="right:1142.1px;top:781.5px;font-size:14px;line-height:14px;color:#1c1c24;">-</div><div class="t" style="right:1022.1px;top:781.5px;font-size:14px;line-height:14px;color:#1c1c24;">-</div><div class="t" style="right:902.1px;top:781.5px;font-size:14px;line-height:14px;color:#1c1c24;">-</div><div class="t" style="right:782.1px;top:781.5px;font-size:14px;line-height:14px;color:#1c1c24;">-</div><div class="t" style="right:662.1px;top:781.5px;font-size:14px;line-height:14px;color:#1c1c24;">-</div><div class="t" style="right:542.1px;top:781.5px;font-size:14px;line-height:14px;color:#1c1c24;">-</div><div class="t" style="right:422.1px;top:781.5px;font-size:14px;line-height:14px;color:#1c1c24;">-</div><div class="t" style="right:302.1px;top:781.5px;font-size:14px;line-height:14px;color:#1c1c24;">-</div><div class="t" style="right:182.1px;top:781.5px;font-size:14px;line-height:14px;color:#1c1c24;">-</div><div class="t" style="right:62.1px;top:781.5px;font-size:14px;line-height:14px;color:#1c1c24;">-</div><div class="t" style="left:139.5px;top:801.8px;font-size:14.5px;line-height:14.5px;color:#1c1c24;transform:scaleX(1.05);transform-origin:0 0;">Debts Repayments</div><div class="t" style="right:1982.1px;top:801.8px;font-size:14px;line-height:14px;color:#1c1c24;">-</div><div class="t" style="right:1862.1px;top:801.8px;font-size:14px;line-height:14px;color:#1c1c24;">-</div><div class="t" style="right:1737.6px;top:801.8px;font-size:14px;line-height:14px;color:#1c1c24;">(1,667)</div><div class="t" style="right:1617.6px;top:801.8px;font-size:14px;line-height:14px;color:#1c1c24;">(1,667)</div><div class="t" style="right:1497.6px;top:801.8px;font-size:14px;line-height:14px;color:#1c1c24;">(1,667)</div><div class="t" style="right:1377.6px;top:801.8px;font-size:14px;line-height:14px;color:#1c1c24;">(1,667)</div><div class="t" style="right:1257.6px;top:801.8px;font-size:14px;line-height:14px;color:#1c1c24;">(1,667)</div><div class="t" style="right:1137.6px;top:801.8px;font-size:14px;line-height:14px;color:#1c1c24;">(1,667)</div><div class="t" style="right:1017.6px;top:801.8px;font-size:14px;line-height:14px;color:#1c1c24;">(1,667)</div><div class="t" style="right:897.6px;top:801.8px;font-size:14px;line-height:14px;color:#1c1c24;">(1,667)</div><div class="t" style="right:777.6px;top:801.8px;font-size:14px;line-height:14px;color:#1c1c24;">(1,667)</div><div class="t" style="right:657.6px;top:801.8px;font-size:14px;line-height:14px;color:#1c1c24;">(1,667)</div><div class="t" style="right:537.6px;top:801.8px;font-size:14px;line-height:14px;color:#1c1c24;">(3,770)</div><div class="t" style="right:417.6px;top:801.8px;font-size:14px;line-height:14px;color:#1c1c24;">(3,780)</div><div class="t" style="right:297.6px;top:801.8px;font-size:14px;line-height:14px;color:#1c1c24;">(3,791)</div><div class="t" style="right:177.6px;top:801.8px;font-size:14px;line-height:14px;color:#1c1c24;">(3,801)</div><div class="t" style="right:57.6px;top:801.8px;font-size:14px;line-height:14px;color:#1c1c24;">(3,812)</div><div class="t" style="left:139.5px;top:821.8px;font-size:14.5px;line-height:14.5px;color:#1c1c24;transform:scaleX(1.06);transform-origin:0 0;">Equity Raisings</div><div class="t" style="right:1982.1px;top:821.8px;font-size:14px;line-height:14px;color:#1c1c24;">700,000</div><div class="t" style="right:1862.1px;top:821.8px;font-size:14px;line-height:14px;color:#1c1c24;">-</div><div class="t" style="right:1742.1px;top:821.8px;font-size:14px;line-height:14px;color:#1c1c24;">-</div><div class="t" style="right:1622.1px;top:821.8px;font-size:14px;line-height:14px;color:#1c1c24;">-</div><div class="t" style="right:1502.1px;top:821.8px;font-size:14px;line-height:14px;color:#1c1c24;">-</div><div class="t" style="right:1382.1px;top:821.8px;font-size:14px;line-height:14px;color:#1c1c24;">-</div><div class="t" style="right:1262.1px;top:821.8px;font-size:14px;line-height:14px;color:#1c1c24;">-</div><div class="t" style="right:1142.1px;top:821.8px;font-size:14px;line-height:14px;color:#1c1c24;">-</div><div class="t" style="right:1022.1px;top:821.8px;font-size:14px;line-height:14px;color:#1c1c24;">-</div><div class="t" style="right:902.1px;top:821.8px;font-size:14px;line-height:14px;color:#1c1c24;">-</div><div class="t" style="right:782.1px;top:821.8px;font-size:14px;line-height:14px;color:#1c1c24;">-</div><div class="t" style="right:662.1px;top:821.8px;font-size:14px;line-height:14px;color:#1c1c24;">-</div><div class="t" style="right:542.1px;top:821.8px;font-size:14px;line-height:14px;color:#1c1c24;">-</div><div class="t" style="right:422.1px;top:821.8px;font-size:14px;line-height:14px;color:#1c1c24;">-</div><div class="t" style="right:302.1px;top:821.8px;font-size:14px;line-height:14px;color:#1c1c24;">-</div><div class="t" style="right:182.1px;top:821.8px;font-size:14px;line-height:14px;color:#1c1c24;">-</div><div class="t" style="right:62.1px;top:821.8px;font-size:14px;line-height:14px;color:#1c1c24;">-</div><div class="t" style="left:139.5px;top:841.5px;font-size:14.5px;line-height:14.5px;color:#1c1c24;transform:scaleX(1.05);transform-origin:0 0;">Equity Buybacks</div><div class="t" style="right:1982.1px;top:841.5px;font-size:14px;line-height:14px;color:#1c1c24;">-</div><div class="t" style="right:1862.1px;top:841.5px;font-size:14px;line-height:14px;color:#1c1c24;">-</div><div class="t" style="right:1742.1px;top:841.5px;font-size:14px;line-height:14px;color:#1c1c24;">-</div><div class="t" style="right:1622.1px;top:841.5px;font-size:14px;line-height:14px;color:#1c1c24;">-</div><div class="t" style="right:1502.1px;top:841.5px;font-size:14px;line-height:14px;color:#1c1c24;">-</div><div class="t" style="right:1382.1px;top:841.5px;font-size:14px;line-height:14px;color:#1c1c24;">-</div><div class="t" style="right:1262.1px;top:841.5px;font-size:14px;line-height:14px;color:#1c1c24;">-</div><div class="t" style="right:1142.1px;top:841.5px;font-size:14px;line-height:14px;color:#1c1c24;">-</div><div class="t" style="right:1022.1px;top:841.5px;font-size:14px;line-height:14px;color:#1c1c24;">-</div><div class="t" style="right:902.1px;top:841.5px;font-size:14px;line-height:14px;color:#1c1c24;">-</div><div class="t" style="right:782.1px;top:841.5px;font-size:14px;line-height:14px;color:#1c1c24;">-</div><div class="t" style="right:662.1px;top:841.5px;font-size:14px;line-height:14px;color:#1c1c24;">-</div><div class="t" style="right:542.1px;top:841.5px;font-size:14px;line-height:14px;color:#1c1c24;">-</div><div class="t" style="right:422.1px;top:841.5px;font-size:14px;line-height:14px;color:#1c1c24;">-</div><div class="t" style="right:302.1px;top:841.5px;font-size:14px;line-height:14px;color:#1c1c24;">-</div><div class="t" style="right:182.1px;top:841.5px;font-size:14px;line-height:14px;color:#1c1c24;">-</div><div class="t" style="right:62.1px;top:841.5px;font-size:14px;line-height:14px;color:#1c1c24;">-</div><div class="t" style="left:139.5px;top:861.5px;font-size:14.5px;line-height:14.5px;color:#1c1c24;transform:scaleX(1.07);transform-origin:0 0;">Dividends Paid</div><div class="t" style="right:1982.1px;top:861.5px;font-size:14px;line-height:14px;color:#1c1c24;">-</div><div class="t" style="right:1862.1px;top:861.5px;font-size:14px;line-height:14px;color:#1c1c24;">-</div><div class="t" style="right:1742.1px;top:861.5px;font-size:14px;line-height:14px;color:#1c1c24;">-</div><div class="t" style="right:1622.1px;top:861.5px;font-size:14px;line-height:14px;color:#1c1c24;">-</div><div class="t" style="right:1502.1px;top:861.5px;font-size:14px;line-height:14px;color:#1c1c24;">-</div><div class="t" style="right:1382.1px;top:861.5px;font-size:14px;line-height:14px;color:#1c1c24;">-</div><div class="t" style="right:1262.1px;top:861.5px;font-size:14px;line-height:14px;color:#1c1c24;">-</div><div class="t" style="right:1142.1px;top:861.5px;font-size:14px;line-height:14px;color:#1c1c24;">-</div><div class="t" style="right:1022.1px;top:861.5px;font-size:14px;line-height:14px;color:#1c1c24;">-</div><div class="t" style="right:902.1px;top:861.5px;font-size:14px;line-height:14px;color:#1c1c24;">-</div><div class="t" style="right:782.1px;top:861.5px;font-size:14px;line-height:14px;color:#1c1c24;">-</div><div class="t" style="right:662.1px;top:861.5px;font-size:14px;line-height:14px;color:#1c1c24;">-</div><div class="t" style="right:542.1px;top:861.5px;font-size:14px;line-height:14px;color:#1c1c24;">-</div><div class="t" style="right:422.1px;top:861.5px;font-size:14px;line-height:14px;color:#1c1c24;">-</div><div class="t" style="right:302.1px;top:861.5px;font-size:14px;line-height:14px;color:#1c1c24;">-</div><div class="t" style="right:182.1px;top:861.5px;font-size:14px;line-height:14px;color:#1c1c24;">-</div><div class="t" style="right:62.1px;top:861.5px;font-size:14px;line-height:14px;color:#1c1c24;">-</div><div class="b" style="left:135px;top:877.5px;width:2725px;height:20.1px;background:#4aaee4;"></div><div class="t" style="left:146.5px;top:879.9px;font-size:16px;line-height:16px;color:#fff;font-weight:700;transform:scaleX(1.05);transform-origin:0 0;">Net Cash Flow from Financing Activities</div><div class="t" style="right:1985.6px;top:878.6px;font-size:18px;line-height:18px;color:#fff;font-weight:700;font-family:'Liberation Serif', serif;transform:scaleX(1.09);transform-origin:100% 0;-webkit-text-stroke:0.35px #fff;">900,000</div><div class="t" style="right:1865.6px;top:878.6px;font-size:18px;line-height:18px;color:#fff;font-weight:700;font-family:'Liberation Serif', serif;transform:scaleX(1.09);transform-origin:100% 0;-webkit-text-stroke:0.35px #fff;">-</div><div class="t" style="right:1745.6px;top:878.6px;font-size:18px;line-height:18px;color:#fff;font-weight:700;font-family:'Liberation Serif', serif;transform:scaleX(1.09);transform-origin:100% 0;-webkit-text-stroke:0.35px #fff;">98,333</div><div class="t" style="right:1618.5px;top:878.6px;font-size:18px;line-height:18px;color:#fff;font-weight:700;font-family:'Liberation Serif', serif;transform:scaleX(1.09);transform-origin:100% 0;-webkit-text-stroke:0.35px #fff;">(1,667)</div><div class="t" style="right:1498.5px;top:878.6px;font-size:18px;line-height:18px;color:#fff;font-weight:700;font-family:'Liberation Serif', serif;transform:scaleX(1.09);transform-origin:100% 0;-webkit-text-stroke:0.35px #fff;">(1,667)</div><div class="t" style="right:1378.5px;top:878.6px;font-size:18px;line-height:18px;color:#fff;font-weight:700;font-family:'Liberation Serif', serif;transform:scaleX(1.09);transform-origin:100% 0;-webkit-text-stroke:0.35px #fff;">(1,667)</div><div class="t" style="right:1258.5px;top:878.6px;font-size:18px;line-height:18px;color:#fff;font-weight:700;font-family:'Liberation Serif', serif;transform:scaleX(1.09);transform-origin:100% 0;-webkit-text-stroke:0.35px #fff;">(1,667)</div><div class="t" style="right:1138.5px;top:878.6px;font-size:18px;line-height:18px;color:#fff;font-weight:700;font-family:'Liberation Serif', serif;transform:scaleX(1.09);transform-origin:100% 0;-webkit-text-stroke:0.35px #fff;">(1,667)</div><div class="t" style="right:1018.5px;top:878.6px;font-size:18px;line-height:18px;color:#fff;font-weight:700;font-family:'Liberation Serif', serif;transform:scaleX(1.09);transform-origin:100% 0;-webkit-text-stroke:0.35px #fff;">(1,667)</div><div class="t" style="right:898.5px;top:878.6px;font-size:18px;line-height:18px;color:#fff;font-weight:700;font-family:'Liberation Serif', serif;transform:scaleX(1.09);transform-origin:100% 0;-webkit-text-stroke:0.35px #fff;">(1,667)</div><div class="t" style="right:778.5px;top:878.6px;font-size:18px;line-height:18px;color:#fff;font-weight:700;font-family:'Liberation Serif', serif;transform:scaleX(1.09);transform-origin:100% 0;-webkit-text-stroke:0.35px #fff;">(1,667)</div><div class="t" style="right:658.5px;top:878.6px;font-size:18px;line-height:18px;color:#fff;font-weight:700;font-family:'Liberation Serif', serif;transform:scaleX(1.09);transform-origin:100% 0;-webkit-text-stroke:0.35px #fff;">(1,667)</div><div class="t" style="right:538.5px;top:878.6px;font-size:18px;line-height:18px;color:#fff;font-weight:700;font-family:'Liberation Serif', serif;transform:scaleX(1.09);transform-origin:100% 0;-webkit-text-stroke:0.35px #fff;">(3,770)</div><div class="t" style="right:418.5px;top:878.6px;font-size:18px;line-height:18px;color:#fff;font-weight:700;font-family:'Liberation Serif', serif;transform:scaleX(1.09);transform-origin:100% 0;-webkit-text-stroke:0.35px #fff;">(3,780)</div><div class="t" style="right:298.5px;top:878.6px;font-size:18px;line-height:18px;color:#fff;font-weight:700;font-family:'Liberation Serif', serif;transform:scaleX(1.09);transform-origin:100% 0;-webkit-text-stroke:0.35px #fff;">(3,791)</div><div class="t" style="right:178.5px;top:878.6px;font-size:18px;line-height:18px;color:#fff;font-weight:700;font-family:'Liberation Serif', serif;transform:scaleX(1.09);transform-origin:100% 0;-webkit-text-stroke:0.35px #fff;">(3,801)</div><div class="t" style="right:58.5px;top:878.6px;font-size:18px;line-height:18px;color:#fff;font-weight:700;font-family:'Liberation Serif', serif;transform:scaleX(1.09);transform-origin:100% 0;-webkit-text-stroke:0.35px #fff;">(3,812)</div><div class="b" style="left:135px;top:914.3px;width:2725px;height:20px;background:#4aaee4;"></div><div class="t" style="left:146.5px;top:916.6px;font-size:16px;line-height:16px;color:#fff;font-weight:700;transform:scaleX(1.09);transform-origin:0 0;">Net Increase/(Decrease) in Cash Held</div><div class="t" style="right:1985.6px;top:915.3px;font-size:18px;line-height:18px;color:#fff;font-weight:700;font-family:'Liberation Serif', serif;transform:scaleX(1.09);transform-origin:100% 0;-webkit-text-stroke:0.35px #fff;">857,431</div><div class="t" style="right:1858.5px;top:915.3px;font-size:18px;line-height:18px;color:#fff;font-weight:700;font-family:'Liberation Serif', serif;transform:scaleX(1.09);transform-origin:100% 0;-webkit-text-stroke:0.35px #fff;">(45,541)</div><div class="t" style="right:1745.6px;top:915.3px;font-size:18px;line-height:18px;color:#fff;font-weight:700;font-family:'Liberation Serif', serif;transform:scaleX(1.09);transform-origin:100% 0;-webkit-text-stroke:0.35px #fff;">71,312</div><div class="t" style="right:1625.6px;top:915.3px;font-size:18px;line-height:18px;color:#fff;font-weight:700;font-family:'Liberation Serif', serif;transform:scaleX(1.09);transform-origin:100% 0;-webkit-text-stroke:0.35px #fff;">13,356</div><div class="t" style="right:1505.6px;top:915.3px;font-size:18px;line-height:18px;color:#fff;font-weight:700;font-family:'Liberation Serif', serif;transform:scaleX(1.09);transform-origin:100% 0;-webkit-text-stroke:0.35px #fff;">20,499</div><div class="t" style="right:1385.6px;top:915.3px;font-size:18px;line-height:18px;color:#fff;font-weight:700;font-family:'Liberation Serif', serif;transform:scaleX(1.09);transform-origin:100% 0;-webkit-text-stroke:0.35px #fff;">24,870</div><div class="t" style="right:1265.6px;top:915.3px;font-size:18px;line-height:18px;color:#fff;font-weight:700;font-family:'Liberation Serif', serif;transform:scaleX(1.09);transform-origin:100% 0;-webkit-text-stroke:0.35px #fff;">30,868</div><div class="t" style="right:1145.6px;top:915.3px;font-size:18px;line-height:18px;color:#fff;font-weight:700;font-family:'Liberation Serif', serif;transform:scaleX(1.09);transform-origin:100% 0;-webkit-text-stroke:0.35px #fff;">33,974</div><div class="t" style="right:1025.6px;top:915.3px;font-size:18px;line-height:18px;color:#fff;font-weight:700;font-family:'Liberation Serif', serif;transform:scaleX(1.09);transform-origin:100% 0;-webkit-text-stroke:0.35px #fff;">35,099</div><div class="t" style="right:905.6px;top:915.3px;font-size:18px;line-height:18px;color:#fff;font-weight:700;font-family:'Liberation Serif', serif;transform:scaleX(1.09);transform-origin:100% 0;-webkit-text-stroke:0.35px #fff;">32,030</div><div class="t" style="right:785.6px;top:915.3px;font-size:18px;line-height:18px;color:#fff;font-weight:700;font-family:'Liberation Serif', serif;transform:scaleX(1.09);transform-origin:100% 0;-webkit-text-stroke:0.35px #fff;">32,564</div><div class="t" style="right:665.6px;top:915.3px;font-size:18px;line-height:18px;color:#fff;font-weight:700;font-family:'Liberation Serif', serif;transform:scaleX(1.09);transform-origin:100% 0;-webkit-text-stroke:0.35px #fff;">30,046</div><div class="t" style="right:545.6px;top:915.3px;font-size:18px;line-height:18px;color:#fff;font-weight:700;font-family:'Liberation Serif', serif;transform:scaleX(1.09);transform-origin:100% 0;-webkit-text-stroke:0.35px #fff;">30,214</div><div class="t" style="right:425.6px;top:915.3px;font-size:18px;line-height:18px;color:#fff;font-weight:700;font-family:'Liberation Serif', serif;transform:scaleX(1.09);transform-origin:100% 0;-webkit-text-stroke:0.35px #fff;">43,525</div><div class="t" style="right:305.6px;top:915.3px;font-size:18px;line-height:18px;color:#fff;font-weight:700;font-family:'Liberation Serif', serif;transform:scaleX(1.09);transform-origin:100% 0;-webkit-text-stroke:0.35px #fff;">44,677</div><div class="t" style="right:185.6px;top:915.3px;font-size:18px;line-height:18px;color:#fff;font-weight:700;font-family:'Liberation Serif', serif;transform:scaleX(1.09);transform-origin:100% 0;-webkit-text-stroke:0.35px #fff;">46,130</div><div class="t" style="right:65.6px;top:915.3px;font-size:18px;line-height:18px;color:#fff;font-weight:700;font-family:'Liberation Serif', serif;transform:scaleX(1.09);transform-origin:100% 0;-webkit-text-stroke:0.35px #fff;">51,349</div><div class="t" style="left:114.5px;top:971.2px;font-size:21px;line-height:21px;color:#1c1c24;font-weight:700;transform:scaleX(1.02);transform-origin:0 0;">Cash Flow Statement (indirect method), $</div><div class="t" style="left:126.2px;top:1011.4px;font-size:17px;line-height:17px;color:#1c1c24;font-weight:700;transform:scaleX(1.1);transform-origin:0 0;">Operating Activities</div><div class="t" style="left:139.3px;top:1033.2px;font-size:14.5px;line-height:14.5px;color:#1c1c24;transform:scaleX(1.07);transform-origin:0 0;">Net Income Less Depreciation</div><div class="t" style="right:1978.3px;top:1032.7px;font-size:16px;line-height:16px;color:#1c1c24;">(10,659)</div><div class="t" style="right:1864.8px;top:1032.7px;font-size:16px;line-height:16px;color:#1c1c24;">9,197</div><div class="t" style="right:1744.8px;top:1032.7px;font-size:16px;line-height:16px;color:#1c1c24;">34,865</div><div class="t" style="right:1624.8px;top:1032.7px;font-size:16px;line-height:16px;color:#1c1c24;">32,408</div><div class="t" style="right:1504.8px;top:1032.7px;font-size:16px;line-height:16px;color:#1c1c24;">40,414</div><div class="t" style="right:1384.8px;top:1032.7px;font-size:16px;line-height:16px;color:#1c1c24;">33,258</div><div class="t" style="right:1264.8px;top:1032.7px;font-size:16px;line-height:16px;color:#1c1c24;">35,879</div><div class="t" style="right:1144.8px;top:1032.7px;font-size:16px;line-height:16px;color:#1c1c24;">39,401</div><div class="t" style="right:1024.8px;top:1032.7px;font-size:16px;line-height:16px;color:#1c1c24;">31,714</div><div class="t" style="right:904.8px;top:1032.7px;font-size:16px;line-height:16px;color:#1c1c24;">36,284</div><div class="t" style="right:784.8px;top:1032.7px;font-size:16px;line-height:16px;color:#1c1c24;">31,260</div><div class="t" style="right:664.8px;top:1032.7px;font-size:16px;line-height:16px;color:#1c1c24;">28,734</div><div class="t" style="right:544.8px;top:1032.7px;font-size:16px;line-height:16px;color:#1c1c24;">53,874</div><div class="t" style="right:424.8px;top:1032.7px;font-size:16px;line-height:16px;color:#1c1c24;">42,421</div><div class="t" style="right:304.8px;top:1032.7px;font-size:16px;line-height:16px;color:#1c1c24;">51,325</div><div class="t" style="right:184.8px;top:1032.7px;font-size:16px;line-height:16px;color:#1c1c24;">51,894</div><div class="t" style="right:64.8px;top:1032.7px;font-size:16px;line-height:16px;color:#1c1c24;">59,927</div><div class="t" style="left:139.3px;top:1053.3px;font-size:14.5px;line-height:14.5px;color:#1c1c24;transform:scaleX(1.08);transform-origin:0 0;">Changes in Working Capital</div><div class="t" style="right:1984.8px;top:1052.8px;font-size:16px;line-height:16px;color:#1c1c24;">1,423</div><div class="t" style="right:1858.3px;top:1052.8px;font-size:16px;line-height:16px;color:#1c1c24;">(14,738)</div><div class="t" style="right:1738.3px;top:1052.8px;font-size:16px;line-height:16px;color:#1c1c24;">(19,220)</div><div class="t" style="right:1624.8px;top:1052.8px;font-size:16px;line-height:16px;color:#1c1c24;">949</div><div class="t" style="right:1498.3px;top:1052.8px;font-size:16px;line-height:16px;color:#1c1c24;">(5,249)</div><div class="t" style="right:1384.8px;top:1052.8px;font-size:16px;line-height:16px;color:#1c1c24;">4,612</div><div class="t" style="right:1258.3px;top:1052.8px;font-size:16px;line-height:16px;color:#1c1c24;">(1,011)</div><div class="t" style="right:1138.3px;top:1052.8px;font-size:16px;line-height:16px;color:#1c1c24;">(2,760)</div><div class="t" style="right:1024.8px;top:1052.8px;font-size:16px;line-height:16px;color:#1c1c24;">5,051</div><div class="t" style="right:898.3px;top:1052.8px;font-size:16px;line-height:16px;color:#1c1c24;">(2,588)</div><div class="t" style="right:784.8px;top:1052.8px;font-size:16px;line-height:16px;color:#1c1c24;">2,971</div><div class="t" style="right:664.8px;top:1052.8px;font-size:16px;line-height:16px;color:#1c1c24;">2,978</div><div class="t" style="right:538.3px;top:1052.8px;font-size:16px;line-height:16px;color:#1c1c24;">(19,890)</div><div class="t" style="right:424.8px;top:1052.8px;font-size:16px;line-height:16px;color:#1c1c24;">4,884</div><div class="t" style="right:298.3px;top:1052.8px;font-size:16px;line-height:16px;color:#1c1c24;">(2,858)</div><div class="t" style="right:178.3px;top:1052.8px;font-size:16px;line-height:16px;color:#1c1c24;">(1,963)</div><div class="t" style="right:58.3px;top:1052.8px;font-size:16px;line-height:16px;color:#1c1c24;">(4,766)</div><div class="b" style="left:122px;top:1069.3px;width:2738px;height:20.3px;background:#4aaee4;"></div><div class="t" style="left:134.2px;top:1071.9px;font-size:16px;line-height:16px;color:#fff;font-weight:700;transform:scaleX(1.08);transform-origin:0 0;">Total Operating Activities</div><div class="t" style="right:1978.5px;top:1070.6px;font-size:18px;line-height:18px;color:#fff;font-weight:700;font-family:'Liberation Serif', serif;transform:scaleX(1.09);transform-origin:100% 0;-webkit-text-stroke:0.35px #fff;">(9,236)</div><div class="t" style="right:1858.5px;top:1070.6px;font-size:18px;line-height:18px;color:#fff;font-weight:700;font-family:'Liberation Serif', serif;transform:scaleX(1.09);transform-origin:100% 0;-webkit-text-stroke:0.35px #fff;">(5,541)</div><div class="t" style="right:1745.6px;top:1070.6px;font-size:18px;line-height:18px;color:#fff;font-weight:700;font-family:'Liberation Serif', serif;transform:scaleX(1.09);transform-origin:100% 0;-webkit-text-stroke:0.35px #fff;">15,645</div><div class="t" style="right:1625.6px;top:1070.6px;font-size:18px;line-height:18px;color:#fff;font-weight:700;font-family:'Liberation Serif', serif;transform:scaleX(1.09);transform-origin:100% 0;-webkit-text-stroke:0.35px #fff;">33,356</div><div class="t" style="right:1505.6px;top:1070.6px;font-size:18px;line-height:18px;color:#fff;font-weight:700;font-family:'Liberation Serif', serif;transform:scaleX(1.09);transform-origin:100% 0;-webkit-text-stroke:0.35px #fff;">35,166</div><div class="t" style="right:1385.6px;top:1070.6px;font-size:18px;line-height:18px;color:#fff;font-weight:700;font-family:'Liberation Serif', serif;transform:scaleX(1.09);transform-origin:100% 0;-webkit-text-stroke:0.35px #fff;">37,870</div><div class="t" style="right:1265.6px;top:1070.6px;font-size:18px;line-height:18px;color:#fff;font-weight:700;font-family:'Liberation Serif', serif;transform:scaleX(1.09);transform-origin:100% 0;-webkit-text-stroke:0.35px #fff;">34,868</div><div class="t" style="right:1145.6px;top:1070.6px;font-size:18px;line-height:18px;color:#fff;font-weight:700;font-family:'Liberation Serif', serif;transform:scaleX(1.09);transform-origin:100% 0;-webkit-text-stroke:0.35px #fff;">36,640</div><div class="t" style="right:1025.6px;top:1070.6px;font-size:18px;line-height:18px;color:#fff;font-weight:700;font-family:'Liberation Serif', serif;transform:scaleX(1.09);transform-origin:100% 0;-webkit-text-stroke:0.35px #fff;">36,766</div><div class="t" style="right:905.6px;top:1070.6px;font-size:18px;line-height:18px;color:#fff;font-weight:700;font-family:'Liberation Serif', serif;transform:scaleX(1.09);transform-origin:100% 0;-webkit-text-stroke:0.35px #fff;">33,696</div><div class="t" style="right:785.6px;top:1070.6px;font-size:18px;line-height:18px;color:#fff;font-weight:700;font-family:'Liberation Serif', serif;transform:scaleX(1.09);transform-origin:100% 0;-webkit-text-stroke:0.35px #fff;">34,231</div><div class="t" style="right:665.6px;top:1070.6px;font-size:18px;line-height:18px;color:#fff;font-weight:700;font-family:'Liberation Serif', serif;transform:scaleX(1.09);transform-origin:100% 0;-webkit-text-stroke:0.35px #fff;">31,712</div><div class="t" style="right:545.6px;top:1070.6px;font-size:18px;line-height:18px;color:#fff;font-weight:700;font-family:'Liberation Serif', serif;transform:scaleX(1.09);transform-origin:100% 0;-webkit-text-stroke:0.35px #fff;">33,983</div><div class="t" style="right:425.6px;top:1070.6px;font-size:18px;line-height:18px;color:#fff;font-weight:700;font-family:'Liberation Serif', serif;transform:scaleX(1.09);transform-origin:100% 0;-webkit-text-stroke:0.35px #fff;">47,305</div><div class="t" style="right:305.6px;top:1070.6px;font-size:18px;line-height:18px;color:#fff;font-weight:700;font-family:'Liberation Serif', serif;transform:scaleX(1.09);transform-origin:100% 0;-webkit-text-stroke:0.35px #fff;">48,468</div><div class="t" style="right:185.6px;top:1070.6px;font-size:18px;line-height:18px;color:#fff;font-weight:700;font-family:'Liberation Serif', serif;transform:scaleX(1.09);transform-origin:100% 0;-webkit-text-stroke:0.35px #fff;">49,931</div><div class="t" style="right:65.6px;top:1070.6px;font-size:18px;line-height:18px;color:#fff;font-weight:700;font-family:'Liberation Serif', serif;transform:scaleX(1.09);transform-origin:100% 0;-webkit-text-stroke:0.35px #fff;">55,161</div><div class="t" style="left:126.2px;top:1117.3px;font-size:17px;line-height:17px;color:#1c1c24;font-weight:700;transform:scaleX(1.11);transform-origin:0 0;">Investing Activities</div><div class="t" style="left:139.3px;top:1139.3px;font-size:14.5px;line-height:14.5px;color:#1c1c24;transform:scaleX(1.08);transform-origin:0 0;">Capital Expenditure</div><div class="t" style="right:1978.3px;top:1138.8px;font-size:16px;line-height:16px;color:#1c1c24;">(33,333)</div><div class="t" style="right:1858.3px;top:1138.8px;font-size:16px;line-height:16px;color:#1c1c24;">(40,000)</div><div class="t" style="right:1738.3px;top:1138.8px;font-size:16px;line-height:16px;color:#1c1c24;">(42,667)</div><div class="t" style="right:1618.3px;top:1138.8px;font-size:16px;line-height:16px;color:#1c1c24;">(18,333)</div><div class="t" style="right:1498.3px;top:1138.8px;font-size:16px;line-height:16px;color:#1c1c24;">(13,000)</div><div class="t" style="right:1378.3px;top:1138.8px;font-size:16px;line-height:16px;color:#1c1c24;">(11,333)</div><div class="t" style="right:1258.3px;top:1138.8px;font-size:16px;line-height:16px;color:#1c1c24;">(2,333)</div><div class="t" style="right:1138.3px;top:1138.8px;font-size:16px;line-height:16px;color:#1c1c24;">(1,000)</div><div class="t" style="right:1024.8px;top:1138.8px;font-size:16px;line-height:16px;color:#1c1c24;">-</div><div class="t" style="right:904.8px;top:1138.8px;font-size:16px;line-height:16px;color:#1c1c24;">-</div><div class="t" style="right:784.8px;top:1138.8px;font-size:16px;line-height:16px;color:#1c1c24;">-</div><div class="t" style="right:664.8px;top:1138.8px;font-size:16px;line-height:16px;color:#1c1c24;">-</div><div class="t" style="right:544.8px;top:1138.8px;font-size:16px;line-height:16px;color:#1c1c24;">-</div><div class="t" style="right:424.8px;top:1138.8px;font-size:16px;line-height:16px;color:#1c1c24;">-</div><div class="t" style="right:304.8px;top:1138.8px;font-size:16px;line-height:16px;color:#1c1c24;">-</div><div class="t" style="right:184.8px;top:1138.8px;font-size:16px;line-height:16px;color:#1c1c24;">-</div><div class="t" style="right:64.8px;top:1138.8px;font-size:16px;line-height:16px;color:#1c1c24;">-</div><div class="b" style="left:122px;top:1155.3px;width:2738px;height:20.1px;background:#4aaee4;"></div><div class="t" style="left:134.2px;top:1157.7px;font-size:16px;line-height:16px;color:#fff;font-weight:700;transform:scaleX(1.07);transform-origin:0 0;">Total Cash From (For) Investing Activities</div><div class="t" style="right:1978.5px;top:1156.4px;font-size:18px;line-height:18px;color:#fff;font-weight:700;font-family:'Liberation Serif', serif;transform:scaleX(1.09);transform-origin:100% 0;-webkit-text-stroke:0.35px #fff;">(33,333)</div><div class="t" style="right:1858.5px;top:1156.4px;font-size:18px;line-height:18px;color:#fff;font-weight:700;font-family:'Liberation Serif', serif;transform:scaleX(1.09);transform-origin:100% 0;-webkit-text-stroke:0.35px #fff;">(40,000)</div><div class="t" style="right:1738.5px;top:1156.4px;font-size:18px;line-height:18px;color:#fff;font-weight:700;font-family:'Liberation Serif', serif;transform:scaleX(1.09);transform-origin:100% 0;-webkit-text-stroke:0.35px #fff;">(42,667)</div><div class="t" style="right:1618.5px;top:1156.4px;font-size:18px;line-height:18px;color:#fff;font-weight:700;font-family:'Liberation Serif', serif;transform:scaleX(1.09);transform-origin:100% 0;-webkit-text-stroke:0.35px #fff;">(18,333)</div><div class="t" style="right:1498.5px;top:1156.4px;font-size:18px;line-height:18px;color:#fff;font-weight:700;font-family:'Liberation Serif', serif;transform:scaleX(1.09);transform-origin:100% 0;-webkit-text-stroke:0.35px #fff;">(13,000)</div><div class="t" style="right:1378.5px;top:1156.4px;font-size:18px;line-height:18px;color:#fff;font-weight:700;font-family:'Liberation Serif', serif;transform:scaleX(1.09);transform-origin:100% 0;-webkit-text-stroke:0.35px #fff;">(11,333)</div><div class="t" style="right:1258.5px;top:1156.4px;font-size:18px;line-height:18px;color:#fff;font-weight:700;font-family:'Liberation Serif', serif;transform:scaleX(1.09);transform-origin:100% 0;-webkit-text-stroke:0.35px #fff;">(2,333)</div><div class="t" style="right:1138.5px;top:1156.4px;font-size:18px;line-height:18px;color:#fff;font-weight:700;font-family:'Liberation Serif', serif;transform:scaleX(1.09);transform-origin:100% 0;-webkit-text-stroke:0.35px #fff;">(1,000)</div><div class="t" style="right:1025.6px;top:1156.4px;font-size:18px;line-height:18px;color:#fff;font-weight:700;font-family:'Liberation Serif', serif;transform:scaleX(1.09);transform-origin:100% 0;-webkit-text-stroke:0.35px #fff;">-</div><div class="t" style="right:905.6px;top:1156.4px;font-size:18px;line-height:18px;color:#fff;font-weight:700;font-family:'Liberation Serif', serif;transform:scaleX(1.09);transform-origin:100% 0;-webkit-text-stroke:0.35px #fff;">-</div><div class="t" style="right:785.6px;top:1156.4px;font-size:18px;line-height:18px;color:#fff;font-weight:700;font-family:'Liberation Serif', serif;transform:scaleX(1.09);transform-origin:100% 0;-webkit-text-stroke:0.35px #fff;">-</div><div class="t" style="right:665.6px;top:1156.4px;font-size:18px;line-height:18px;color:#fff;font-weight:700;font-family:'Liberation Serif', serif;transform:scaleX(1.09);transform-origin:100% 0;-webkit-text-stroke:0.35px #fff;">-</div><div class="t" style="right:545.6px;top:1156.4px;font-size:18px;line-height:18px;color:#fff;font-weight:700;font-family:'Liberation Serif', serif;transform:scaleX(1.09);transform-origin:100% 0;-webkit-text-stroke:0.35px #fff;">-</div><div class="t" style="right:425.6px;top:1156.4px;font-size:18px;line-height:18px;color:#fff;font-weight:700;font-family:'Liberation Serif', serif;transform:scaleX(1.09);transform-origin:100% 0;-webkit-text-stroke:0.35px #fff;">-</div><div class="t" style="right:305.6px;top:1156.4px;font-size:18px;line-height:18px;color:#fff;font-weight:700;font-family:'Liberation Serif', serif;transform:scaleX(1.09);transform-origin:100% 0;-webkit-text-stroke:0.35px #fff;">-</div><div class="t" style="right:185.6px;top:1156.4px;font-size:18px;line-height:18px;color:#fff;font-weight:700;font-family:'Liberation Serif', serif;transform:scaleX(1.09);transform-origin:100% 0;-webkit-text-stroke:0.35px #fff;">-</div><div class="t" style="right:65.6px;top:1156.4px;font-size:18px;line-height:18px;color:#fff;font-weight:700;font-family:'Liberation Serif', serif;transform:scaleX(1.09);transform-origin:100% 0;-webkit-text-stroke:0.35px #fff;">-</div><div class="t" style="left:126.2px;top:1203.4px;font-size:17px;line-height:17px;color:#1c1c24;font-weight:700;transform:scaleX(1.09);transform-origin:0 0;">Financing Activities</div><div class="t" style="left:139.3px;top:1225.5px;font-size:14.5px;line-height:14.5px;color:#1c1c24;transform:scaleX(1.1);transform-origin:0 0;">Equity Investment</div><div class="t" style="right:1984.8px;top:1225px;font-size:16px;line-height:16px;color:#1c1c24;">700,000</div><div class="t" style="right:1864.8px;top:1225px;font-size:16px;line-height:16px;color:#1c1c24;">-</div><div class="t" style="right:1744.8px;top:1225px;font-size:16px;line-height:16px;color:#1c1c24;">-</div><div class="t" style="right:1624.8px;top:1225px;font-size:16px;line-height:16px;color:#1c1c24;">-</div><div class="t" style="right:1504.8px;top:1225px;font-size:16px;line-height:16px;color:#1c1c24;">-</div><div class="t" style="right:1384.8px;top:1225px;font-size:16px;line-height:16px;color:#1c1c24;">-</div><div class="t" style="right:1264.8px;top:1225px;font-size:16px;line-height:16px;color:#1c1c24;">-</div><div class="t" style="right:1144.8px;top:1225px;font-size:16px;line-height:16px;color:#1c1c24;">-</div><div class="t" style="right:1024.8px;top:1225px;font-size:16px;line-height:16px;color:#1c1c24;">-</div><div class="t" style="right:904.8px;top:1225px;font-size:16px;line-height:16px;color:#1c1c24;">-</div><div class="t" style="right:784.8px;top:1225px;font-size:16px;line-height:16px;color:#1c1c24;">-</div><div class="t" style="right:664.8px;top:1225px;font-size:16px;line-height:16px;color:#1c1c24;">-</div><div class="t" style="right:544.8px;top:1225px;font-size:16px;line-height:16px;color:#1c1c24;">-</div><div class="t" style="right:424.8px;top:1225px;font-size:16px;line-height:16px;color:#1c1c24;">-</div><div class="t" style="right:304.8px;top:1225px;font-size:16px;line-height:16px;color:#1c1c24;">-</div><div class="t" style="right:184.8px;top:1225px;font-size:16px;line-height:16px;color:#1c1c24;">-</div><div class="t" style="right:64.8px;top:1225px;font-size:16px;line-height:16px;color:#1c1c24;">-</div><div class="t" style="left:139.3px;top:1245.5px;font-size:14.5px;line-height:14.5px;color:#1c1c24;transform:scaleX(1.02);transform-origin:0 0;">Loans</div><div class="t" style="right:1984.8px;top:1245px;font-size:16px;line-height:16px;color:#1c1c24;">200,000</div><div class="t" style="right:1864.8px;top:1245px;font-size:16px;line-height:16px;color:#1c1c24;">-</div><div class="t" style="right:1744.8px;top:1245px;font-size:16px;line-height:16px;color:#1c1c24;">98,333</div><div class="t" style="right:1618.3px;top:1245px;font-size:16px;line-height:16px;color:#1c1c24;">(1,667)</div><div class="t" style="right:1498.3px;top:1245px;font-size:16px;line-height:16px;color:#1c1c24;">(1,667)</div><div class="t" style="right:1378.3px;top:1245px;font-size:16px;line-height:16px;color:#1c1c24;">(1,667)</div><div class="t" style="right:1258.3px;top:1245px;font-size:16px;line-height:16px;color:#1c1c24;">(1,667)</div><div class="t" style="right:1138.3px;top:1245px;font-size:16px;line-height:16px;color:#1c1c24;">(1,667)</div><div class="t" style="right:1018.3px;top:1245px;font-size:16px;line-height:16px;color:#1c1c24;">(1,667)</div><div class="t" style="right:898.3px;top:1245px;font-size:16px;line-height:16px;color:#1c1c24;">(1,667)</div><div class="t" style="right:778.3px;top:1245px;font-size:16px;line-height:16px;color:#1c1c24;">(1,667)</div><div class="t" style="right:658.3px;top:1245px;font-size:16px;line-height:16px;color:#1c1c24;">(1,667)</div><div class="t" style="right:538.3px;top:1245px;font-size:16px;line-height:16px;color:#1c1c24;">(3,770)</div><div class="t" style="right:418.3px;top:1245px;font-size:16px;line-height:16px;color:#1c1c24;">(3,780)</div><div class="t" style="right:298.3px;top:1245px;font-size:16px;line-height:16px;color:#1c1c24;">(3,791)</div><div class="t" style="right:178.3px;top:1245px;font-size:16px;line-height:16px;color:#1c1c24;">(3,801)</div><div class="t" style="right:58.3px;top:1245px;font-size:16px;line-height:16px;color:#1c1c24;">(3,812)</div><div class="t" style="left:139.3px;top:1265.6px;font-size:14.5px;line-height:14.5px;color:#1c1c24;transform:scaleX(1.07);transform-origin:0 0;">Dividends Paid</div><div class="t" style="right:1984.8px;top:1265.1px;font-size:16px;line-height:16px;color:#1c1c24;">-</div><div class="t" style="right:1864.8px;top:1265.1px;font-size:16px;line-height:16px;color:#1c1c24;">-</div><div class="t" style="right:1744.8px;top:1265.1px;font-size:16px;line-height:16px;color:#1c1c24;">-</div><div class="t" style="right:1624.8px;top:1265.1px;font-size:16px;line-height:16px;color:#1c1c24;">-</div><div class="t" style="right:1504.8px;top:1265.1px;font-size:16px;line-height:16px;color:#1c1c24;">-</div><div class="t" style="right:1384.8px;top:1265.1px;font-size:16px;line-height:16px;color:#1c1c24;">-</div><div class="t" style="right:1264.8px;top:1265.1px;font-size:16px;line-height:16px;color:#1c1c24;">-</div><div class="t" style="right:1144.8px;top:1265.1px;font-size:16px;line-height:16px;color:#1c1c24;">-</div><div class="t" style="right:1024.8px;top:1265.1px;font-size:16px;line-height:16px;color:#1c1c24;">-</div><div class="t" style="right:904.8px;top:1265.1px;font-size:16px;line-height:16px;color:#1c1c24;">-</div><div class="t" style="right:784.8px;top:1265.1px;font-size:16px;line-height:16px;color:#1c1c24;">-</div><div class="t" style="right:664.8px;top:1265.1px;font-size:16px;line-height:16px;color:#1c1c24;">-</div><div class="t" style="right:544.8px;top:1265.1px;font-size:16px;line-height:16px;color:#1c1c24;">-</div><div class="t" style="right:424.8px;top:1265.1px;font-size:16px;line-height:16px;color:#1c1c24;">-</div><div class="t" style="right:304.8px;top:1265.1px;font-size:16px;line-height:16px;color:#1c1c24;">-</div><div class="t" style="right:184.8px;top:1265.1px;font-size:16px;line-height:16px;color:#1c1c24;">-</div><div class="t" style="right:64.8px;top:1265.1px;font-size:16px;line-height:16px;color:#1c1c24;">-</div><div class="b" style="left:122px;top:1281.6px;width:2738px;height:20px;background:#4aaee4;"></div><div class="t" style="left:134.2px;top:1283.9px;font-size:16px;line-height:16px;color:#fff;font-weight:700;transform:scaleX(1.06);transform-origin:0 0;">Total Cash From (For) Financing Activities</div><div class="t" style="right:1985.6px;top:1282.6px;font-size:18px;line-height:18px;color:#fff;font-weight:700;font-family:'Liberation Serif', serif;transform:scaleX(1.09);transform-origin:100% 0;-webkit-text-stroke:0.35px #fff;">900,000</div><div class="t" style="right:1865.6px;top:1282.6px;font-size:18px;line-height:18px;color:#fff;font-weight:700;font-family:'Liberation Serif', serif;transform:scaleX(1.09);transform-origin:100% 0;-webkit-text-stroke:0.35px #fff;">-</div><div class="t" style="right:1745.6px;top:1282.6px;font-size:18px;line-height:18px;color:#fff;font-weight:700;font-family:'Liberation Serif', serif;transform:scaleX(1.09);transform-origin:100% 0;-webkit-text-stroke:0.35px #fff;">98,333</div><div class="t" style="right:1618.5px;top:1282.6px;font-size:18px;line-height:18px;color:#fff;font-weight:700;font-family:'Liberation Serif', serif;transform:scaleX(1.09);transform-origin:100% 0;-webkit-text-stroke:0.35px #fff;">(1,667)</div><div class="t" style="right:1498.5px;top:1282.6px;font-size:18px;line-height:18px;color:#fff;font-weight:700;font-family:'Liberation Serif', serif;transform:scaleX(1.09);transform-origin:100% 0;-webkit-text-stroke:0.35px #fff;">(1,667)</div><div class="t" style="right:1378.5px;top:1282.6px;font-size:18px;line-height:18px;color:#fff;font-weight:700;font-family:'Liberation Serif', serif;transform:scaleX(1.09);transform-origin:100% 0;-webkit-text-stroke:0.35px #fff;">(1,667)</div><div class="t" style="right:1258.5px;top:1282.6px;font-size:18px;line-height:18px;color:#fff;font-weight:700;font-family:'Liberation Serif', serif;transform:scaleX(1.09);transform-origin:100% 0;-webkit-text-stroke:0.35px #fff;">(1,667)</div><div class="t" style="right:1138.5px;top:1282.6px;font-size:18px;line-height:18px;color:#fff;font-weight:700;font-family:'Liberation Serif', serif;transform:scaleX(1.09);transform-origin:100% 0;-webkit-text-stroke:0.35px #fff;">(1,667)</div><div class="t" style="right:1018.5px;top:1282.6px;font-size:18px;line-height:18px;color:#fff;font-weight:700;font-family:'Liberation Serif', serif;transform:scaleX(1.09);transform-origin:100% 0;-webkit-text-stroke:0.35px #fff;">(1,667)</div><div class="t" style="right:898.5px;top:1282.6px;font-size:18px;line-height:18px;color:#fff;font-weight:700;font-family:'Liberation Serif', serif;transform:scaleX(1.09);transform-origin:100% 0;-webkit-text-stroke:0.35px #fff;">(1,667)</div><div class="t" style="right:778.5px;top:1282.6px;font-size:18px;line-height:18px;color:#fff;font-weight:700;font-family:'Liberation Serif', serif;transform:scaleX(1.09);transform-origin:100% 0;-webkit-text-stroke:0.35px #fff;">(1,667)</div><div class="t" style="right:658.5px;top:1282.6px;font-size:18px;line-height:18px;color:#fff;font-weight:700;font-family:'Liberation Serif', serif;transform:scaleX(1.09);transform-origin:100% 0;-webkit-text-stroke:0.35px #fff;">(1,667)</div><div class="t" style="right:538.5px;top:1282.6px;font-size:18px;line-height:18px;color:#fff;font-weight:700;font-family:'Liberation Serif', serif;transform:scaleX(1.09);transform-origin:100% 0;-webkit-text-stroke:0.35px #fff;">(3,770)</div><div class="t" style="right:418.5px;top:1282.6px;font-size:18px;line-height:18px;color:#fff;font-weight:700;font-family:'Liberation Serif', serif;transform:scaleX(1.09);transform-origin:100% 0;-webkit-text-stroke:0.35px #fff;">(3,780)</div><div class="t" style="right:298.5px;top:1282.6px;font-size:18px;line-height:18px;color:#fff;font-weight:700;font-family:'Liberation Serif', serif;transform:scaleX(1.09);transform-origin:100% 0;-webkit-text-stroke:0.35px #fff;">(3,791)</div><div class="t" style="right:178.5px;top:1282.6px;font-size:18px;line-height:18px;color:#fff;font-weight:700;font-family:'Liberation Serif', serif;transform:scaleX(1.09);transform-origin:100% 0;-webkit-text-stroke:0.35px #fff;">(3,801)</div><div class="t" style="right:58.5px;top:1282.6px;font-size:18px;line-height:18px;color:#fff;font-weight:700;font-family:'Liberation Serif', serif;transform:scaleX(1.09);transform-origin:100% 0;-webkit-text-stroke:0.35px #fff;">(3,812)</div><div class="t" style="left:126.2px;top:1329.8px;font-size:17px;line-height:17px;color:#1c1c24;font-weight:700;transform:scaleX(1.1);transform-origin:0 0;">Cash Movement</div><div class="t" style="left:139.3px;top:1354.6px;font-size:14.5px;line-height:14.5px;color:#1c1c24;transform:scaleX(1.07);transform-origin:0 0;">Cash and Cash Equivalents Beginning</div><div class="t" style="right:1984.8px;top:1352.1px;font-size:16px;line-height:16px;color:#1c1c24;">-</div><div class="t" style="right:1864.8px;top:1352.1px;font-size:16px;line-height:16px;color:#1c1c24;">857,431</div><div class="t" style="right:1744.8px;top:1352.1px;font-size:16px;line-height:16px;color:#1c1c24;">811,890</div><div class="t" style="right:1624.8px;top:1352.1px;font-size:16px;line-height:16px;color:#1c1c24;">883,202</div><div class="t" style="right:1504.8px;top:1352.1px;font-size:16px;line-height:16px;color:#1c1c24;">896,558</div><div class="t" style="right:1384.8px;top:1352.1px;font-size:16px;line-height:16px;color:#1c1c24;">917,057</div><div class="t" style="right:1264.8px;top:1352.1px;font-size:16px;line-height:16px;color:#1c1c24;">941,927</div><div class="t" style="right:1144.8px;top:1352.1px;font-size:16px;line-height:16px;color:#1c1c24;">972,795</div><div class="t" style="right:1024.8px;top:1352.1px;font-size:16px;line-height:16px;color:#1c1c24;">1,006,769</div><div class="t" style="right:904.8px;top:1352.1px;font-size:16px;line-height:16px;color:#1c1c24;">1,041,868</div><div class="t" style="right:784.8px;top:1352.1px;font-size:16px;line-height:16px;color:#1c1c24;">1,073,898</div><div class="t" style="right:664.8px;top:1352.1px;font-size:16px;line-height:16px;color:#1c1c24;">1,106,462</div><div class="t" style="right:544.8px;top:1352.1px;font-size:16px;line-height:16px;color:#1c1c24;">1,136,508</div><div class="t" style="right:424.8px;top:1352.1px;font-size:16px;line-height:16px;color:#1c1c24;">1,166,722</div><div class="t" style="right:304.8px;top:1352.1px;font-size:16px;line-height:16px;color:#1c1c24;">1,210,247</div><div class="t" style="right:184.8px;top:1352.1px;font-size:16px;line-height:16px;color:#1c1c24;">1,254,924</div><div class="t" style="right:64.8px;top:1352.1px;font-size:16px;line-height:16px;color:#1c1c24;">1,301,053</div><div class="t" style="left:139.3px;top:1377.4px;font-size:14.5px;line-height:14.5px;color:#1c1c24;transform:scaleX(1.07);transform-origin:0 0;">Net (Increase) Decrease In Cash</div><div class="t" style="right:1984.8px;top:1374.9px;font-size:16px;line-height:16px;color:#1c1c24;">857,431</div><div class="t" style="right:1858.3px;top:1374.9px;font-size:16px;line-height:16px;color:#1c1c24;">(45,541)</div><div class="t" style="right:1744.8px;top:1374.9px;font-size:16px;line-height:16px;color:#1c1c24;">71,312</div><div class="t" style="right:1624.8px;top:1374.9px;font-size:16px;line-height:16px;color:#1c1c24;">13,356</div><div class="t" style="right:1504.8px;top:1374.9px;font-size:16px;line-height:16px;color:#1c1c24;">20,499</div><div class="t" style="right:1384.8px;top:1374.9px;font-size:16px;line-height:16px;color:#1c1c24;">24,870</div><div class="t" style="right:1264.8px;top:1374.9px;font-size:16px;line-height:16px;color:#1c1c24;">30,868</div><div class="t" style="right:1144.8px;top:1374.9px;font-size:16px;line-height:16px;color:#1c1c24;">33,974</div><div class="t" style="right:1024.8px;top:1374.9px;font-size:16px;line-height:16px;color:#1c1c24;">35,099</div><div class="t" style="right:904.8px;top:1374.9px;font-size:16px;line-height:16px;color:#1c1c24;">32,030</div><div class="t" style="right:784.8px;top:1374.9px;font-size:16px;line-height:16px;color:#1c1c24;">32,564</div><div class="t" style="right:664.8px;top:1374.9px;font-size:16px;line-height:16px;color:#1c1c24;">30,046</div><div class="t" style="right:544.8px;top:1374.9px;font-size:16px;line-height:16px;color:#1c1c24;">30,214</div><div class="t" style="right:424.8px;top:1374.9px;font-size:16px;line-height:16px;color:#1c1c24;">43,525</div><div class="t" style="right:304.8px;top:1374.9px;font-size:16px;line-height:16px;color:#1c1c24;">44,677</div><div class="t" style="right:184.8px;top:1374.9px;font-size:16px;line-height:16px;color:#1c1c24;">46,130</div><div class="t" style="right:64.8px;top:1374.9px;font-size:16px;line-height:16px;color:#1c1c24;">51,349</div><div class="b" style="left:122px;top:1393.4px;width:2738px;height:20px;background:#4aaee4;"></div><div class="t" style="left:134.2px;top:1395.7px;font-size:16px;line-height:16px;color:#fff;font-weight:700;transform:scaleX(1.04);transform-origin:0 0;">Total Cash and Cash Equivalents End</div><div class="t" style="right:1985.6px;top:1394.4px;font-size:18px;line-height:18px;color:#fff;font-weight:700;font-family:'Liberation Serif', serif;transform:scaleX(1.09);transform-origin:100% 0;-webkit-text-stroke:0.35px #fff;">857,431</div><div class="t" style="right:1865.6px;top:1394.4px;font-size:18px;line-height:18px;color:#fff;font-weight:700;font-family:'Liberation Serif', serif;transform:scaleX(1.09);transform-origin:100% 0;-webkit-text-stroke:0.35px #fff;">811,890</div><div class="t" style="right:1745.6px;top:1394.4px;font-size:18px;line-height:18px;color:#fff;font-weight:700;font-family:'Liberation Serif', serif;transform:scaleX(1.09);transform-origin:100% 0;-webkit-text-stroke:0.35px #fff;">883,202</div><div class="t" style="right:1625.6px;top:1394.4px;font-size:18px;line-height:18px;color:#fff;font-weight:700;font-family:'Liberation Serif', serif;transform:scaleX(1.09);transform-origin:100% 0;-webkit-text-stroke:0.35px #fff;">896,558</div><div class="t" style="right:1505.6px;top:1394.4px;font-size:18px;line-height:18px;color:#fff;font-weight:700;font-family:'Liberation Serif', serif;transform:scaleX(1.09);transform-origin:100% 0;-webkit-text-stroke:0.35px #fff;">917,057</div><div class="t" style="right:1385.6px;top:1394.4px;font-size:18px;line-height:18px;color:#fff;font-weight:700;font-family:'Liberation Serif', serif;transform:scaleX(1.09);transform-origin:100% 0;-webkit-text-stroke:0.35px #fff;">941,927</div><div class="t" style="right:1265.6px;top:1394.4px;font-size:18px;line-height:18px;color:#fff;font-weight:700;font-family:'Liberation Serif', serif;transform:scaleX(1.09);transform-origin:100% 0;-webkit-text-stroke:0.35px #fff;">972,795</div><div class="t" style="right:1145.6px;top:1394.4px;font-size:18px;line-height:18px;color:#fff;font-weight:700;font-family:'Liberation Serif', serif;transform:scaleX(1.09);transform-origin:100% 0;-webkit-text-stroke:0.35px #fff;">1,006,769</div><div class="t" style="right:1025.6px;top:1394.4px;font-size:18px;line-height:18px;color:#fff;font-weight:700;font-family:'Liberation Serif', serif;transform:scaleX(1.09);transform-origin:100% 0;-webkit-text-stroke:0.35px #fff;">1,041,868</div><div class="t" style="right:905.6px;top:1394.4px;font-size:18px;line-height:18px;color:#fff;font-weight:700;font-family:'Liberation Serif', serif;transform:scaleX(1.09);transform-origin:100% 0;-webkit-text-stroke:0.35px #fff;">1,073,898</div><div class="t" style="right:785.6px;top:1394.4px;font-size:18px;line-height:18px;color:#fff;font-weight:700;font-family:'Liberation Serif', serif;transform:scaleX(1.09);transform-origin:100% 0;-webkit-text-stroke:0.35px #fff;">1,106,462</div><div class="t" style="right:665.6px;top:1394.4px;font-size:18px;line-height:18px;color:#fff;font-weight:700;font-family:'Liberation Serif', serif;transform:scaleX(1.09);transform-origin:100% 0;-webkit-text-stroke:0.35px #fff;">1,136,508</div><div class="t" style="right:545.6px;top:1394.4px;font-size:18px;line-height:18px;color:#fff;font-weight:700;font-family:'Liberation Serif', serif;transform:scaleX(1.09);transform-origin:100% 0;-webkit-text-stroke:0.35px #fff;">1,166,722</div><div class="t" style="right:425.6px;top:1394.4px;font-size:18px;line-height:18px;color:#fff;font-weight:700;font-family:'Liberation Serif', serif;transform:scaleX(1.09);transform-origin:100% 0;-webkit-text-stroke:0.35px #fff;">1,210,247</div><div class="t" style="right:305.6px;top:1394.4px;font-size:18px;line-height:18px;color:#fff;font-weight:700;font-family:'Liberation Serif', serif;transform:scaleX(1.09);transform-origin:100% 0;-webkit-text-stroke:0.35px #fff;">1,254,924</div><div class="t" style="right:185.6px;top:1394.4px;font-size:18px;line-height:18px;color:#fff;font-weight:700;font-family:'Liberation Serif', serif;transform:scaleX(1.09);transform-origin:100% 0;-webkit-text-stroke:0.35px #fff;">1,301,053</div><div class="t" style="right:65.6px;top:1394.4px;font-size:18px;line-height:18px;color:#fff;font-weight:700;font-family:'Liberation Serif', serif;transform:scaleX(1.09);transform-origin:100% 0;-webkit-text-stroke:0.35px #fff;">1,352,403</div><div class="t" style="left:128px;top:1455.3px;font-size:20.5px;line-height:20.5px;color:#1c1c24;font-weight:700;transform:scaleX(1.03);transform-origin:0 0;">Interest on Cash Breakdown</div><div class="t" style="left:139.5px;top:1493.4px;font-size:14.5px;line-height:14.5px;color:#1c1c24;transform:scaleX(1.11);transform-origin:0 0;">Net Cash Flow from Investing Activities</div><div class="t" style="right:1977.6px;top:1493.4px;font-size:14px;line-height:14px;color:#1c1c24;">(33,333)</div><div class="t" style="right:1857.6px;top:1493.4px;font-size:14px;line-height:14px;color:#1c1c24;">(40,000)</div><div class="t" style="right:1737.6px;top:1493.4px;font-size:14px;line-height:14px;color:#1c1c24;">(42,667)</div><div class="t" style="right:1617.6px;top:1493.4px;font-size:14px;line-height:14px;color:#1c1c24;">(18,333)</div><div class="t" style="right:1497.6px;top:1493.4px;font-size:14px;line-height:14px;color:#1c1c24;">(13,000)</div><div class="t" style="right:1377.6px;top:1493.4px;font-size:14px;line-height:14px;color:#1c1c24;">(11,333)</div><div class="t" style="right:1257.6px;top:1493.4px;font-size:14px;line-height:14px;color:#1c1c24;">(2,333)</div><div class="t" style="right:1137.6px;top:1493.4px;font-size:14px;line-height:14px;color:#1c1c24;">(1,000)</div><div class="t" style="right:1022.1px;top:1493.4px;font-size:14px;line-height:14px;color:#1c1c24;">-</div><div class="t" style="right:902.1px;top:1493.4px;font-size:14px;line-height:14px;color:#1c1c24;">-</div><div class="t" style="right:782.1px;top:1493.4px;font-size:14px;line-height:14px;color:#1c1c24;">-</div><div class="t" style="right:662.1px;top:1493.4px;font-size:14px;line-height:14px;color:#1c1c24;">-</div><div class="t" style="right:542.1px;top:1493.4px;font-size:14px;line-height:14px;color:#1c1c24;">-</div><div class="t" style="right:422.1px;top:1493.4px;font-size:14px;line-height:14px;color:#1c1c24;">-</div><div class="t" style="right:302.1px;top:1493.4px;font-size:14px;line-height:14px;color:#1c1c24;">-</div><div class="t" style="right:182.1px;top:1493.4px;font-size:14px;line-height:14px;color:#1c1c24;">-</div><div class="t" style="right:62.1px;top:1493.4px;font-size:14px;line-height:14px;color:#1c1c24;">-</div><div class="t" style="left:139.5px;top:1513.5px;font-size:14.5px;line-height:14.5px;color:#1c1c24;transform:scaleX(1.09);transform-origin:0 0;">Net Cash Flow from Financing Activities</div><div class="t" style="right:1982.1px;top:1513.5px;font-size:14px;line-height:14px;color:#1c1c24;">900,000</div><div class="t" style="right:1862.1px;top:1513.5px;font-size:14px;line-height:14px;color:#1c1c24;">-</div><div class="t" style="right:1742.1px;top:1513.5px;font-size:14px;line-height:14px;color:#1c1c24;">98,333</div><div class="t" style="right:1617.6px;top:1513.5px;font-size:14px;line-height:14px;color:#1c1c24;">(1,667)</div><div class="t" style="right:1497.6px;top:1513.5px;font-size:14px;line-height:14px;color:#1c1c24;">(1,667)</div><div class="t" style="right:1377.6px;top:1513.5px;font-size:14px;line-height:14px;color:#1c1c24;">(1,667)</div><div class="t" style="right:1257.6px;top:1513.5px;font-size:14px;line-height:14px;color:#1c1c24;">(1,667)</div><div class="t" style="right:1137.6px;top:1513.5px;font-size:14px;line-height:14px;color:#1c1c24;">(1,667)</div><div class="t" style="right:1017.6px;top:1513.5px;font-size:14px;line-height:14px;color:#1c1c24;">(1,667)</div><div class="t" style="right:897.6px;top:1513.5px;font-size:14px;line-height:14px;color:#1c1c24;">(1,667)</div><div class="t" style="right:777.6px;top:1513.5px;font-size:14px;line-height:14px;color:#1c1c24;">(1,667)</div><div class="t" style="right:657.6px;top:1513.5px;font-size:14px;line-height:14px;color:#1c1c24;">(1,667)</div><div class="t" style="right:537.6px;top:1513.5px;font-size:14px;line-height:14px;color:#1c1c24;">(3,770)</div><div class="t" style="right:417.6px;top:1513.5px;font-size:14px;line-height:14px;color:#1c1c24;">(3,780)</div><div class="t" style="right:297.6px;top:1513.5px;font-size:14px;line-height:14px;color:#1c1c24;">(3,791)</div><div class="t" style="right:177.6px;top:1513.5px;font-size:14px;line-height:14px;color:#1c1c24;">(3,801)</div><div class="t" style="right:57.6px;top:1513.5px;font-size:14px;line-height:14px;color:#1c1c24;">(3,812)</div><div class="t" style="left:139.5px;top:1533.5px;font-size:14.5px;line-height:14.5px;color:#1c1c24;transform:scaleX(1.02);transform-origin:0 0;">Cash Receipts</div><div class="t" style="right:1982.1px;top:1533.5px;font-size:14px;line-height:14px;color:#1c1c24;">18,574</div><div class="t" style="right:1862.1px;top:1533.5px;font-size:14px;line-height:14px;color:#1c1c24;">46,979</div><div class="t" style="right:1742.1px;top:1533.5px;font-size:14px;line-height:14px;color:#1c1c24;">88,777</div><div class="t" style="right:1622.1px;top:1533.5px;font-size:14px;line-height:14px;color:#1c1c24;">102,175</div><div class="t" style="right:1502.1px;top:1533.5px;font-size:14px;line-height:14px;color:#1c1c24;">110,161</div><div class="t" style="right:1382.1px;top:1533.5px;font-size:14px;line-height:14px;color:#1c1c24;">107,093</div><div class="t" style="right:1262.1px;top:1533.5px;font-size:14px;line-height:14px;color:#1c1c24;">106,969</div><div class="t" style="right:1142.1px;top:1533.5px;font-size:14px;line-height:14px;color:#1c1c24;">110,282</div><div class="t" style="right:1022.1px;top:1533.5px;font-size:14px;line-height:14px;color:#1c1c24;">104,981</div><div class="t" style="right:902.1px;top:1533.5px;font-size:14px;line-height:14px;color:#1c1c24;">106,009</div><div class="t" style="right:782.1px;top:1533.5px;font-size:14px;line-height:14px;color:#1c1c24;">102,145</div><div class="t" style="right:662.1px;top:1533.5px;font-size:14px;line-height:14px;color:#1c1c24;">99,306</div><div class="t" style="right:542.1px;top:1533.5px;font-size:14px;line-height:14px;color:#1c1c24;">119,027</div><div class="t" style="right:422.1px;top:1533.5px;font-size:14px;line-height:14px;color:#1c1c24;">124,954</div><div class="t" style="right:302.1px;top:1533.5px;font-size:14px;line-height:14px;color:#1c1c24;">136,077</div><div class="t" style="right:182.1px;top:1533.5px;font-size:14px;line-height:14px;color:#1c1c24;">134,946</div><div class="t" style="right:62.1px;top:1533.5px;font-size:14px;line-height:14px;color:#1c1c24;">146,521</div><div class="t" style="left:139.5px;top:1553.4px;font-size:14.5px;line-height:14.5px;color:#1c1c24;transform:scaleX(1.04);transform-origin:0 0;">Cash Payments</div><div class="t" style="right:1977.6px;top:1553.4px;font-size:14px;line-height:14px;color:#1c1c24;">(26,809)</div><div class="t" style="right:1857.6px;top:1553.4px;font-size:14px;line-height:14px;color:#1c1c24;">(48,750)</div><div class="t" style="right:1737.6px;top:1553.4px;font-size:14px;line-height:14px;color:#1c1c24;">(60,529)</div><div class="t" style="right:1617.6px;top:1553.4px;font-size:14px;line-height:14px;color:#1c1c24;">(57,069)</div><div class="t" style="right:1497.6px;top:1553.4px;font-size:14px;line-height:14px;color:#1c1c24;">(60,708)</div><div class="t" style="right:1377.6px;top:1553.4px;font-size:14px;line-height:14px;color:#1c1c24;">(57,288)</div><div class="t" style="right:1257.6px;top:1553.4px;font-size:14px;line-height:14px;color:#1c1c24;">(59,336)</div><div class="t" style="right:1137.6px;top:1553.4px;font-size:14px;line-height:14px;color:#1c1c24;">(59,755)</div><div class="t" style="right:1017.6px;top:1553.4px;font-size:14px;line-height:14px;color:#1c1c24;">(56,819)</div><div class="t" style="right:897.6px;top:1553.4px;font-size:14px;line-height:14px;color:#1c1c24;">(59,454)</div><div class="t" style="right:777.6px;top:1553.4px;font-size:14px;line-height:14px;color:#1c1c24;">(56,687)</div><div class="t" style="right:657.6px;top:1553.4px;font-size:14px;line-height:14px;color:#1c1c24;">(57,192)</div><div class="t" style="right:537.6px;top:1553.4px;font-size:14px;line-height:14px;color:#1c1c24;">(65,980)</div><div class="t" style="right:417.6px;top:1553.4px;font-size:14px;line-height:14px;color:#1c1c24;">(62,425)</div><div class="t" style="right:297.6px;top:1553.4px;font-size:14px;line-height:14px;color:#1c1c24;">(69,438)</div><div class="t" style="right:177.6px;top:1553.4px;font-size:14px;line-height:14px;color:#1c1c24;">(66,677)</div><div class="t" style="right:57.6px;top:1553.4px;font-size:14px;line-height:14px;color:#1c1c24;">(70,365)</div><div class="t" style="left:139.5px;top:1573.4px;font-size:14.5px;line-height:14.5px;color:#1c1c24;transform:scaleX(1.09);transform-origin:0 0;">Change in Cash (Pre-Corporate Tax &amp; Interest on Cash)</div><div class="t" style="right:1982.1px;top:1573.4px;font-size:14px;line-height:14px;color:#1c1c24;">858,431</div><div class="t" style="right:1857.6px;top:1573.4px;font-size:14px;line-height:14px;color:#1c1c24;">(41,771)</div><div class="t" style="right:1742.1px;top:1573.4px;font-size:14px;line-height:14px;color:#1c1c24;">83,914</div><div class="t" style="right:1622.1px;top:1573.4px;font-size:14px;line-height:14px;color:#1c1c24;">25,106</div><div class="t" style="right:1502.1px;top:1573.4px;font-size:14px;line-height:14px;color:#1c1c24;">34,786</div><div class="t" style="right:1382.1px;top:1573.4px;font-size:14px;line-height:14px;color:#1c1c24;">36,806</div><div class="t" style="right:1262.1px;top:1573.4px;font-size:14px;line-height:14px;color:#1c1c24;">43,633</div><div class="t" style="right:1142.1px;top:1573.4px;font-size:14px;line-height:14px;color:#1c1c24;">47,861</div><div class="t" style="right:1022.1px;top:1573.4px;font-size:14px;line-height:14px;color:#1c1c24;">46,495</div><div class="t" style="right:902.1px;top:1573.4px;font-size:14px;line-height:14px;color:#1c1c24;">44,889</div><div class="t" style="right:782.1px;top:1573.4px;font-size:14px;line-height:14px;color:#1c1c24;">43,791</div><div class="t" style="right:662.1px;top:1573.4px;font-size:14px;line-height:14px;color:#1c1c24;">40,447</div><div class="t" style="right:542.1px;top:1573.4px;font-size:14px;line-height:14px;color:#1c1c24;">49,277</div><div class="t" style="right:422.1px;top:1573.4px;font-size:14px;line-height:14px;color:#1c1c24;">58,750</div><div class="t" style="right:302.1px;top:1573.4px;font-size:14px;line-height:14px;color:#1c1c24;">62,848</div><div class="t" style="right:182.1px;top:1573.4px;font-size:14px;line-height:14px;color:#1c1c24;">64,468</div><div class="t" style="right:62.1px;top:1573.4px;font-size:14px;line-height:14px;color:#1c1c24;">72,344</div><div class="t" style="left:139.5px;top:1593.7px;font-size:14.5px;line-height:14.5px;color:#1c1c24;transform:scaleX(1.07);transform-origin:0 0;">Interest Expense</div><div class="t" style="right:1977.6px;top:1593.7px;font-size:14px;line-height:14px;color:#1c1c24;">(1,000)</div><div class="t" style="right:1857.6px;top:1593.7px;font-size:14px;line-height:14px;color:#1c1c24;">(1,000)</div><div class="t" style="right:1737.6px;top:1593.7px;font-size:14px;line-height:14px;color:#1c1c24;">(1,667)</div><div class="t" style="right:1617.6px;top:1593.7px;font-size:14px;line-height:14px;color:#1c1c24;">(1,656)</div><div class="t" style="right:1497.6px;top:1593.7px;font-size:14px;line-height:14px;color:#1c1c24;">(1,644)</div><div class="t" style="right:1377.6px;top:1593.7px;font-size:14px;line-height:14px;color:#1c1c24;">(1,633)</div><div class="t" style="right:1257.6px;top:1593.7px;font-size:14px;line-height:14px;color:#1c1c24;">(1,622)</div><div class="t" style="right:1137.6px;top:1593.7px;font-size:14px;line-height:14px;color:#1c1c24;">(1,611)</div><div class="t" style="right:1017.6px;top:1593.7px;font-size:14px;line-height:14px;color:#1c1c24;">(1,600)</div><div class="t" style="right:897.6px;top:1593.7px;font-size:14px;line-height:14px;color:#1c1c24;">(1,589)</div><div class="t" style="right:777.6px;top:1593.7px;font-size:14px;line-height:14px;color:#1c1c24;">(1,578)</div><div class="t" style="right:657.6px;top:1593.7px;font-size:14px;line-height:14px;color:#1c1c24;">(1,567)</div><div class="t" style="right:537.6px;top:1593.7px;font-size:14px;line-height:14px;color:#1c1c24;">(1,556)</div><div class="t" style="right:417.6px;top:1593.7px;font-size:14px;line-height:14px;color:#1c1c24;">(1,534)</div><div class="t" style="right:297.6px;top:1593.7px;font-size:14px;line-height:14px;color:#1c1c24;">(1,512)</div><div class="t" style="right:177.6px;top:1593.7px;font-size:14px;line-height:14px;color:#1c1c24;">(1,491)</div><div class="t" style="right:57.6px;top:1593.7px;font-size:14px;line-height:14px;color:#1c1c24;">(1,469)</div><div class="t" style="left:139.5px;top:1613.5px;font-size:14.5px;line-height:14.5px;color:#1c1c24;transform:scaleX(1.08);transform-origin:0 0;">Corporate Tax Expense</div><div class="t" style="right:1982.1px;top:1613.5px;font-size:14px;line-height:14px;color:#1c1c24;">-</div><div class="t" style="right:1857.6px;top:1613.5px;font-size:14px;line-height:14px;color:#1c1c24;">(2,770)</div><div class="t" style="right:1737.6px;top:1613.5px;font-size:14px;line-height:14px;color:#1c1c24;">(10,936)</div><div class="t" style="right:1617.6px;top:1613.5px;font-size:14px;line-height:14px;color:#1c1c24;">(10,094)</div><div class="t" style="right:1497.6px;top:1613.5px;font-size:14px;line-height:14px;color:#1c1c24;">(12,642)</div><div class="t" style="right:1377.6px;top:1613.5px;font-size:14px;line-height:14px;color:#1c1c24;">(10,303)</div><div class="t" style="right:1257.6px;top:1613.5px;font-size:14px;line-height:14px;color:#1c1c24;">(11,142)</div><div class="t" style="right:1137.6px;top:1613.5px;font-size:14px;line-height:14px;color:#1c1c24;">(12,276)</div><div class="t" style="right:1017.6px;top:1613.5px;font-size:14px;line-height:14px;color:#1c1c24;">(9,796)</div><div class="t" style="right:897.6px;top:1613.5px;font-size:14px;line-height:14px;color:#1c1c24;">(11,270)</div><div class="t" style="right:777.6px;top:1613.5px;font-size:14px;line-height:14px;color:#1c1c24;">(9,649)</div><div class="t" style="right:657.6px;top:1613.5px;font-size:14px;line-height:14px;color:#1c1c24;">(8,835)</div><div class="t" style="right:537.6px;top:1613.5px;font-size:14px;line-height:14px;color:#1c1c24;">(17,508)</div><div class="t" style="right:417.6px;top:1613.5px;font-size:14px;line-height:14px;color:#1c1c24;">(13,690)</div><div class="t" style="right:297.6px;top:1613.5px;font-size:14px;line-height:14px;color:#1c1c24;">(16,658)</div><div class="t" style="right:177.6px;top:1613.5px;font-size:14px;line-height:14px;color:#1c1c24;">(16,848)</div><div class="t" style="right:57.6px;top:1613.5px;font-size:14px;line-height:14px;color:#1c1c24;">(19,526)</div><div class="b" style="left:135px;top:1629.5px;width:2725px;height:19.9px;background:#4aaee4;"></div><div class="t" style="left:146.5px;top:1631.7px;font-size:16px;line-height:16px;color:#fff;font-weight:700;transform:scaleX(1.09);transform-origin:0 0;">Net Increase/(Decrease) in Cash Held</div><div class="t" style="right:1985.6px;top:1630.4px;font-size:18px;line-height:18px;color:#fff;font-weight:700;font-family:'Liberation Serif', serif;transform:scaleX(1.09);transform-origin:100% 0;-webkit-text-stroke:0.35px #fff;">857,431</div><div class="t" style="right:1858.5px;top:1630.4px;font-size:18px;line-height:18px;color:#fff;font-weight:700;font-family:'Liberation Serif', serif;transform:scaleX(1.09);transform-origin:100% 0;-webkit-text-stroke:0.35px #fff;">(45,541)</div><div class="t" style="right:1745.6px;top:1630.4px;font-size:18px;line-height:18px;color:#fff;font-weight:700;font-family:'Liberation Serif', serif;transform:scaleX(1.09);transform-origin:100% 0;-webkit-text-stroke:0.35px #fff;">71,312</div><div class="t" style="right:1625.6px;top:1630.4px;font-size:18px;line-height:18px;color:#fff;font-weight:700;font-family:'Liberation Serif', serif;transform:scaleX(1.09);transform-origin:100% 0;-webkit-text-stroke:0.35px #fff;">13,356</div><div class="t" style="right:1505.6px;top:1630.4px;font-size:18px;line-height:18px;color:#fff;font-weight:700;font-family:'Liberation Serif', serif;transform:scaleX(1.09);transform-origin:100% 0;-webkit-text-stroke:0.35px #fff;">20,499</div><div class="t" style="right:1385.6px;top:1630.4px;font-size:18px;line-height:18px;color:#fff;font-weight:700;font-family:'Liberation Serif', serif;transform:scaleX(1.09);transform-origin:100% 0;-webkit-text-stroke:0.35px #fff;">24,870</div><div class="t" style="right:1265.6px;top:1630.4px;font-size:18px;line-height:18px;color:#fff;font-weight:700;font-family:'Liberation Serif', serif;transform:scaleX(1.09);transform-origin:100% 0;-webkit-text-stroke:0.35px #fff;">30,868</div><div class="t" style="right:1145.6px;top:1630.4px;font-size:18px;line-height:18px;color:#fff;font-weight:700;font-family:'Liberation Serif', serif;transform:scaleX(1.09);transform-origin:100% 0;-webkit-text-stroke:0.35px #fff;">33,974</div><div class="t" style="right:1025.6px;top:1630.4px;font-size:18px;line-height:18px;color:#fff;font-weight:700;font-family:'Liberation Serif', serif;transform:scaleX(1.09);transform-origin:100% 0;-webkit-text-stroke:0.35px #fff;">35,099</div><div class="t" style="right:905.6px;top:1630.4px;font-size:18px;line-height:18px;color:#fff;font-weight:700;font-family:'Liberation Serif', serif;transform:scaleX(1.09);transform-origin:100% 0;-webkit-text-stroke:0.35px #fff;">32,030</div><div class="t" style="right:785.6px;top:1630.4px;font-size:18px;line-height:18px;color:#fff;font-weight:700;font-family:'Liberation Serif', serif;transform:scaleX(1.09);transform-origin:100% 0;-webkit-text-stroke:0.35px #fff;">32,564</div><div class="t" style="right:665.6px;top:1630.4px;font-size:18px;line-height:18px;color:#fff;font-weight:700;font-family:'Liberation Serif', serif;transform:scaleX(1.09);transform-origin:100% 0;-webkit-text-stroke:0.35px #fff;">30,046</div><div class="t" style="right:545.6px;top:1630.4px;font-size:18px;line-height:18px;color:#fff;font-weight:700;font-family:'Liberation Serif', serif;transform:scaleX(1.09);transform-origin:100% 0;-webkit-text-stroke:0.35px #fff;">30,214</div><div class="t" style="right:425.6px;top:1630.4px;font-size:18px;line-height:18px;color:#fff;font-weight:700;font-family:'Liberation Serif', serif;transform:scaleX(1.09);transform-origin:100% 0;-webkit-text-stroke:0.35px #fff;">43,525</div><div class="t" style="right:305.6px;top:1630.4px;font-size:18px;line-height:18px;color:#fff;font-weight:700;font-family:'Liberation Serif', serif;transform:scaleX(1.09);transform-origin:100% 0;-webkit-text-stroke:0.35px #fff;">44,677</div><div class="t" style="right:185.6px;top:1630.4px;font-size:18px;line-height:18px;color:#fff;font-weight:700;font-family:'Liberation Serif', serif;transform:scaleX(1.09);transform-origin:100% 0;-webkit-text-stroke:0.35px #fff;">46,130</div><div class="t" style="right:65.6px;top:1630.4px;font-size:18px;line-height:18px;color:#fff;font-weight:700;font-family:'Liberation Serif', serif;transform:scaleX(1.09);transform-origin:100% 0;-webkit-text-stroke:0.35px #fff;">51,349</div><div class="t" style="right:2105.6px;top:1394.4px;font-size:18px;line-height:18px;color:#fff;font-weight:700;font-family:'Liberation Serif', serif;transform:scaleX(1.09);transform-origin:100% 0;">-</div><div class="t" style="left:116px;top:302.2px;font-size:28px;line-height:28px;color:#20242c;font-weight:700;transform:scaleX(1.05);transform-origin:0 0;">Cash Flow Statement</div><div class="t" style="left:114px;top:337px;font-size:24px;line-height:24px;color:#000;font-weight:700;transform:scaleX(1.02);transform-origin:0 0;">ABC Company Inc.</div><div class="t" style="left:113.5px;top:364.5px;font-size:15.5px;line-height:15.5px;color:#3a7be0;font-weight:700;transform:scaleX(1.11);transform-origin:0 0;">Go to Table of Contents</div><div class="b" style="left:113.5px;top:379.5px;width:193.5px;height:1.5px;background:#3a7be0;"></div><div class="t" style="left:114px;top:419px;font-size:16.5px;line-height:16.5px;color:#000;font-weight:700;transform:scaleX(1.01);transform-origin:0 0;">Fiscal year</div><div class="t" style="left:114px;top:438.5px;font-size:16.5px;line-height:16.5px;color:#000;font-weight:700;transform:scaleX(1.01);transform-origin:0 0;">Month</div><div class="t" style="right:1978.5px;top:419px;font-size:16.5px;line-height:16.5px;color:#000;font-weight:700;">2026</div><div class="t" style="right:1978.5px;top:438.5px;font-size:16.5px;line-height:16.5px;color:#000;font-weight:700;">Jan-26</div><div class="t" style="right:1858.5px;top:419px;font-size:16.5px;line-height:16.5px;color:#000;font-weight:700;">2026</div><div class="t" style="right:1858.5px;top:438.5px;font-size:16.5px;line-height:16.5px;color:#000;font-weight:700;">Feb-26</div><div class="t" style="right:1738.5px;top:419px;font-size:16.5px;line-height:16.5px;color:#000;font-weight:700;">2026</div><div class="t" style="right:1738.5px;top:438.5px;font-size:16.5px;line-height:16.5px;color:#000;font-weight:700;">Mar-26</div><div class="t" style="right:1618.5px;top:419px;font-size:16.5px;line-height:16.5px;color:#000;font-weight:700;">2026</div><div class="t" style="right:1618.5px;top:438.5px;font-size:16.5px;line-height:16.5px;color:#000;font-weight:700;">Apr-26</div><div class="t" style="right:1498.5px;top:419px;font-size:16.5px;line-height:16.5px;color:#000;font-weight:700;">2026</div><div class="t" style="right:1498.5px;top:438.5px;font-size:16.5px;line-height:16.5px;color:#000;font-weight:700;">May-26</div><div class="t" style="right:1378.5px;top:419px;font-size:16.5px;line-height:16.5px;color:#000;font-weight:700;">2026</div><div class="t" style="right:1378.5px;top:438.5px;font-size:16.5px;line-height:16.5px;color:#000;font-weight:700;">Jun-26</div><div class="t" style="right:1258.5px;top:419px;font-size:16.5px;line-height:16.5px;color:#000;font-weight:700;">2026</div><div class="t" style="right:1258.5px;top:438.5px;font-size:16.5px;line-height:16.5px;color:#000;font-weight:700;">Jul-26</div><div class="t" style="right:1138.5px;top:419px;font-size:16.5px;line-height:16.5px;color:#000;font-weight:700;">2026</div><div class="t" style="right:1138.5px;top:438.5px;font-size:16.5px;line-height:16.5px;color:#000;font-weight:700;">Aug-26</div><div class="t" style="right:1018.5px;top:419px;font-size:16.5px;line-height:16.5px;color:#000;font-weight:700;">2026</div><div class="t" style="right:1018.5px;top:438.5px;font-size:16.5px;line-height:16.5px;color:#000;font-weight:700;">Sep-26</div><div class="t" style="right:898.5px;top:419px;font-size:16.5px;line-height:16.5px;color:#000;font-weight:700;">2026</div><div class="t" style="right:898.5px;top:438.5px;font-size:16.5px;line-height:16.5px;color:#000;font-weight:700;">Oct-26</div><div class="t" style="right:778.5px;top:419px;font-size:16.5px;line-height:16.5px;color:#000;font-weight:700;">2026</div><div class="t" style="right:778.5px;top:438.5px;font-size:16.5px;line-height:16.5px;color:#000;font-weight:700;">Nov-26</div><div class="t" style="right:658.5px;top:419px;font-size:16.5px;line-height:16.5px;color:#000;font-weight:700;">2026</div><div class="t" style="right:658.5px;top:438.5px;font-size:16.5px;line-height:16.5px;color:#000;font-weight:700;">Dec-26</div><div class="t" style="right:538.5px;top:419px;font-size:16.5px;line-height:16.5px;color:#000;font-weight:700;">2027</div><div class="t" style="right:538.5px;top:438.5px;font-size:16.5px;line-height:16.5px;color:#000;font-weight:700;">Jan-27</div><div class="t" style="right:418.5px;top:419px;font-size:16.5px;line-height:16.5px;color:#000;font-weight:700;">2027</div><div class="t" style="right:418.5px;top:438.5px;font-size:16.5px;line-height:16.5px;color:#000;font-weight:700;">Feb-27</div><div class="t" style="right:298.5px;top:419px;font-size:16.5px;line-height:16.5px;color:#000;font-weight:700;">2027</div><div class="t" style="right:298.5px;top:438.5px;font-size:16.5px;line-height:16.5px;color:#000;font-weight:700;">Mar-27</div><div class="t" style="right:178.5px;top:419px;font-size:16.5px;line-height:16.5px;color:#000;font-weight:700;">2027</div><div class="t" style="right:178.5px;top:438.5px;font-size:16.5px;line-height:16.5px;color:#000;font-weight:700;">Apr-27</div><div class="t" style="right:58.5px;top:419px;font-size:16.5px;line-height:16.5px;color:#000;font-weight:700;">2027</div><div class="t" style="right:58.5px;top:438.5px;font-size:16.5px;line-height:16.5px;color:#000;font-weight:700;">May-27</div><div class="b" style="left:807px;top:297px;width:1px;height:1373px;background:#9a9a9a;"></div>
</body></html>
